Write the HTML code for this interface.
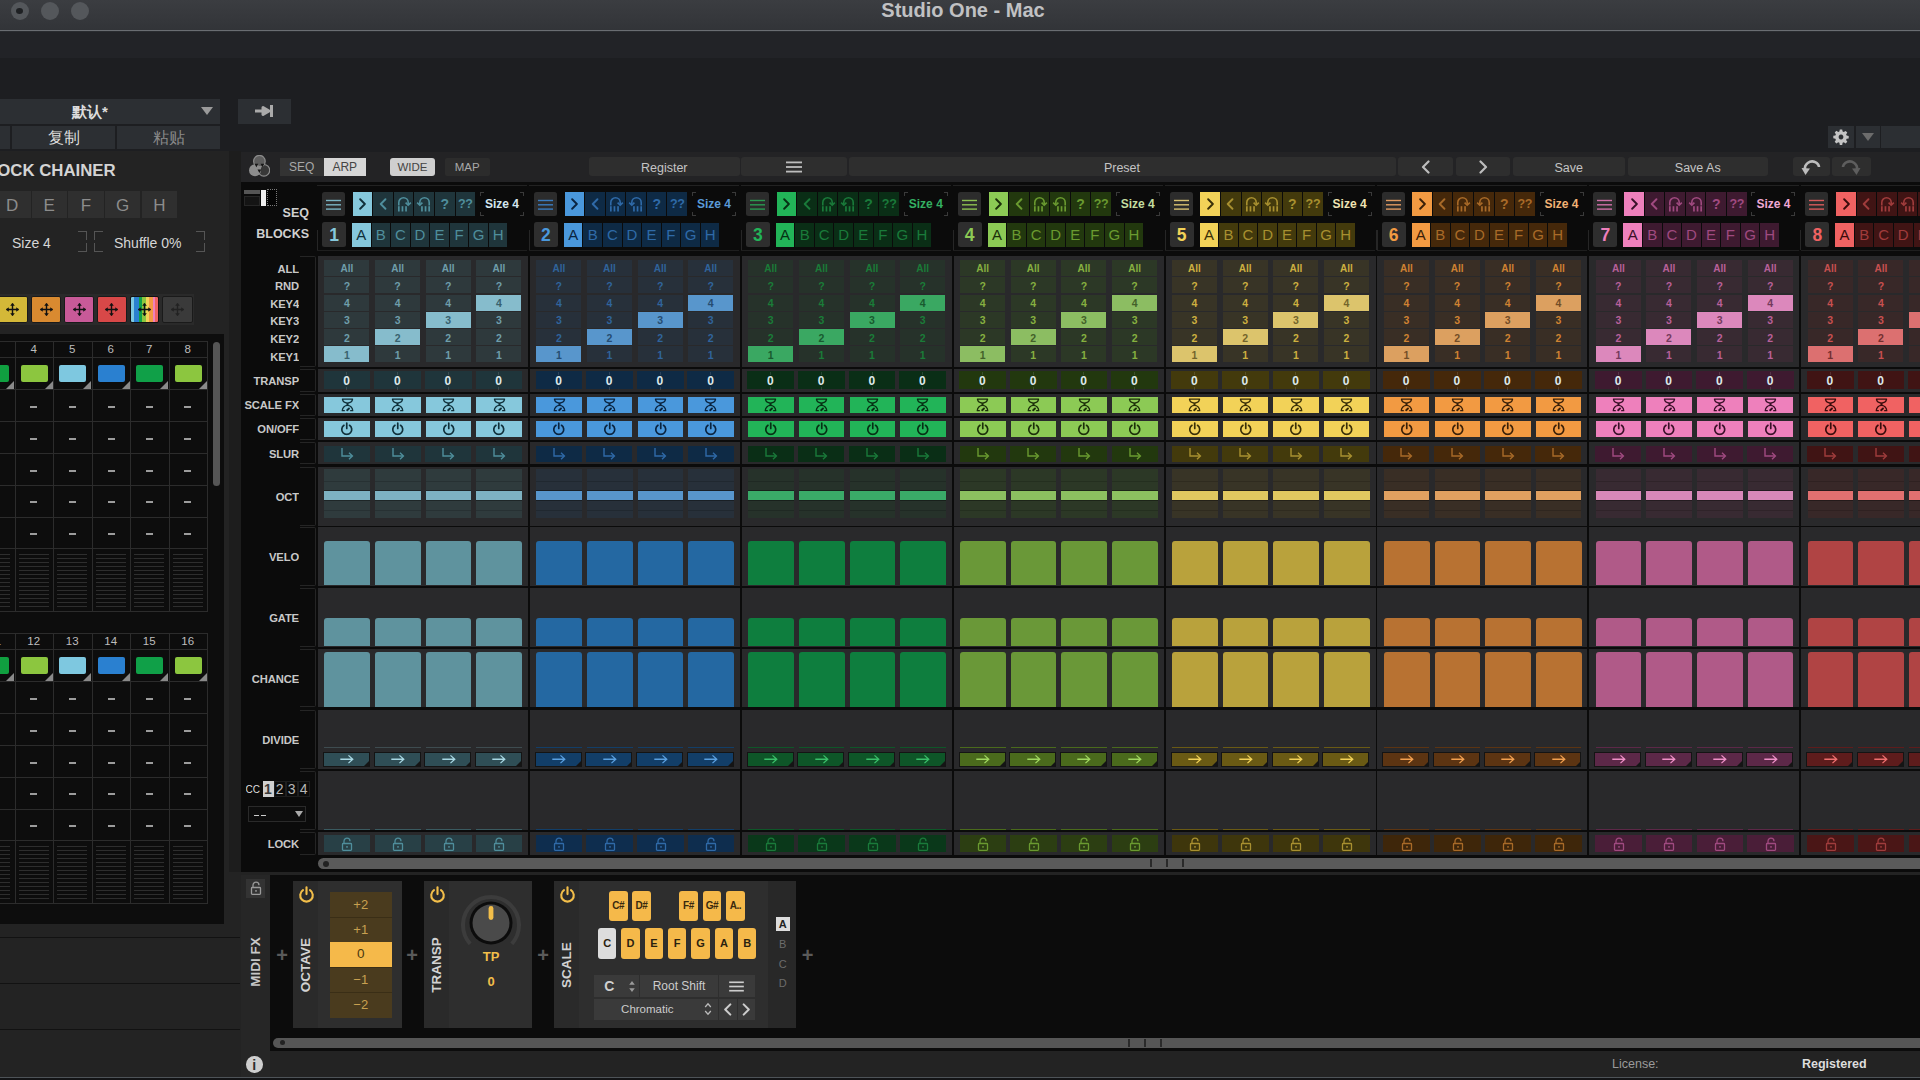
<!DOCTYPE html><html><head><meta charset="utf-8"><style>
*{margin:0;padding:0;box-sizing:border-box}
html,body{width:1920px;height:1080px;overflow:hidden;background:#1d1e21;font-family:"Liberation Sans",sans-serif}
div,svg{position:absolute}
.t{white-space:nowrap;overflow:hidden}
</style></head><body>
<svg width="0" height="0" style="position:absolute">
<defs>
<symbol id="ham2" viewBox="0 0 15 11"><rect x="0" y="0.8" width="15" height="1.4" fill="currentColor"/><rect x="0" y="5.1" width="15" height="1.4" fill="currentColor"/><rect x="0" y="9.4" width="15" height="1.4" fill="currentColor"/></symbol>
<symbol id="ham" viewBox="0 0 16 12"><rect x="0" y="0.5" width="16" height="1.8" fill="currentColor"/><rect x="0" y="5.1" width="16" height="1.8" fill="currentColor"/><rect x="0" y="9.7" width="16" height="1.8" fill="currentColor"/></symbol>
<symbol id="chevR" viewBox="0 0 10 14"><path d="M2.5 1.5 L8 7 L2.5 12.5" fill="none" stroke="currentColor" stroke-width="2.2" stroke-linecap="round" stroke-linejoin="round"/></symbol>
<symbol id="chevL" viewBox="0 0 10 14"><path d="M7.5 1.5 L2 7 L7.5 12.5" fill="none" stroke="currentColor" stroke-width="2.2" stroke-linecap="round" stroke-linejoin="round"/></symbol>
<symbol id="rptR" viewBox="0 0 16 16"><path d="M2.8 9.5 V6.5 A4.7 4.7 0 0 1 12.2 6.5 V8" fill="none" stroke="currentColor" stroke-width="1.6"/><path d="M9.6 6.6 L12.2 9.2 L14.8 6.6" fill="none" stroke="currentColor" stroke-width="1.6"/><rect x="2" y="10.2" width="1.7" height="5.3" fill="currentColor"/><rect x="5.6" y="10.2" width="1.7" height="5.3" fill="currentColor"/><rect x="9.2" y="10.2" width="1.7" height="5.3" fill="currentColor"/></symbol>
<symbol id="rptL" viewBox="0 0 16 16"><path d="M13.2 9.5 V6.5 A4.7 4.7 0 0 0 3.8 6.5 V8" fill="none" stroke="currentColor" stroke-width="1.6"/><path d="M1.2 6.6 L3.8 9.2 L6.4 6.6" fill="none" stroke="currentColor" stroke-width="1.6"/><rect x="5.1" y="10.2" width="1.7" height="5.3" fill="currentColor"/><rect x="8.7" y="10.2" width="1.7" height="5.3" fill="currentColor"/><rect x="12.3" y="10.2" width="1.7" height="5.3" fill="currentColor"/></symbol>
<symbol id="scl" viewBox="0 0 16 15"><path d="M2.6 1.2 H13.4 Q12.8 5.2 8 5.4 Q3.2 5.2 2.6 1.2 Z" fill="none" stroke="currentColor" stroke-width="1.4" stroke-linejoin="round"/><path d="M8 5.2 V7.6" stroke="currentColor" stroke-width="2.2"/><path d="M2.4 13.6 A5.6 5.6 0 0 1 13.6 13.6 M2.4 13.6 H4.6 M11.4 13.6 H13.6" fill="none" stroke="currentColor" stroke-width="1.4" stroke-linecap="round"/><path d="M7.6 13.1 L9.6 11.2" stroke="currentColor" stroke-width="2" stroke-linecap="round"/></symbol>
<symbol id="pwr" viewBox="0 0 16 16"><path d="M4.7 3.9 A5.9 5.9 0 1 0 11.3 3.9" fill="none" stroke="currentColor" stroke-width="2" stroke-linecap="round"/><path d="M8 1.3 V7.6" stroke="currentColor" stroke-width="2" stroke-linecap="round"/></symbol>
<symbol id="slur" viewBox="0 0 16 14"><path d="M3 1 V9 H13" fill="none" stroke="currentColor" stroke-width="1.4"/><path d="M10 5.8 L13.4 9 L10 12.2" fill="none" stroke="currentColor" stroke-width="1.4"/></symbol>
<symbol id="arr" viewBox="0 0 18 12"><path d="M1.5 6 H16 M11 1.5 L16 6 L11 10.5" fill="none" stroke="currentColor" stroke-width="1.5"/></symbol>
<symbol id="lock" viewBox="0 0 12 14"><path d="M3 6.5 V4.2 A3 3 0 0 1 9 4.2" fill="none" stroke="currentColor" stroke-width="1.3"/><rect x="1.5" y="6.5" width="9" height="6.8" rx="0.8" fill="none" stroke="currentColor" stroke-width="1.3"/><rect x="5.2" y="9.1" width="1.6" height="1.6" fill="currentColor"/></symbol>
<symbol id="move" viewBox="0 0 16 16"><path d="M8 1.5 V14.5 M1.5 8 H14.5" stroke="currentColor" stroke-width="1.5"/><path d="M5.5 4 L8 1 L10.5 4 Z M5.5 12 L8 15 L10.5 12 Z M4 5.5 L1 8 L4 10.5 Z M12 5.5 L15 8 L12 10.5 Z" fill="currentColor"/></symbol>
<symbol id="gear" viewBox="0 0 16 16"><path fill="currentColor" fill-rule="evenodd" d="M6.8 0.5h2.4l0.4 2.1 1.2 0.5 1.8-1.2 1.7 1.7-1.2 1.8 0.5 1.2 2.1 0.4v2.4l-2.1 0.4-0.5 1.2 1.2 1.8-1.7 1.7-1.8-1.2-1.2 0.5-0.4 2.1H6.8l-0.4-2.1-1.2-0.5-1.8 1.2-1.7-1.7 1.2-1.8-0.5-1.2L0.3 9.2V6.8l2.1-0.4 0.5-1.2-1.2-1.8 1.7-1.7 1.8 1.2 1.2-0.5zM8 5.6a2.4 2.4 0 1 0 0.01 0z"/></symbol>
<symbol id="undo" viewBox="0 0 20 18"><path d="M4 12 C3 6 9 2 14 4 C17 5 18 8 18 9" fill="none" stroke="currentColor" stroke-width="2.6"/><path d="M0.5 10 L4.5 17 L9 10.5 Z" fill="currentColor"/></symbol>
<symbol id="redo" viewBox="0 0 20 18"><path d="M16 12 C17 6 11 2 6 4 C3 5 2 8 2 9" fill="none" stroke="currentColor" stroke-width="2.6"/><path d="M19.5 10 L15.5 17 L11 10.5 Z" fill="currentColor"/></symbol>
<symbol id="updn" viewBox="0 0 8 14"><path d="M1 5 L4 1 L7 5 Z M1 9 L4 13 L7 9 Z" fill="currentColor"/></symbol>
<symbol id="updn2" viewBox="0 0 8 14"><path d="M1.2 5 L4 1.8 L6.8 5 M1.2 9 L4 12.2 L6.8 9" fill="none" stroke="currentColor" stroke-width="1.3"/></symbol>
<symbol id="logo" viewBox="0 0 22 22"><circle cx="15.9" cy="15.3" r="5.8" fill="#383838" stroke="#8c8c8c" stroke-width="1.2"/><circle cx="11.4" cy="6.2" r="5.8" fill="#5e5e5e" stroke="#8c8c8c" stroke-width="1.2"/><circle cx="7" cy="15.3" r="6" fill="#8c8c8c"/><path d="M9.6 11.3 A5.8 5.8 0 0 1 13.2 11.3 L 12.6 16 L 10 16Z" fill="#8c8c8c"/><path d="M6.5 8.8 L10.3 8.8 L8.4 12.2Z M12.5 8.8 L16.3 8.8 L14.4 12.2Z M9.5 14.5 L13.3 14.5 L11.4 18Z" fill="#161616"/></symbol>
<symbol id="tab" viewBox="0 0 20 14"><path d="M1 7 H9 V3.5 L15 7 L9 10.5 V7" fill="currentColor" stroke="currentColor" stroke-width="3" stroke-linejoin="round"/><rect x="16" y="1" width="3" height="12" fill="currentColor"/></symbol>
</defs>
</svg>
<div style="left:0px;top:0px;width:1920px;height:30px;background:linear-gradient(#3b3d41,#323438);"></div>
<div style="left:0px;top:30px;width:1920px;height:1px;background:#6a6d72;"></div>
<div style="left:0px;top:31px;width:1920px;height:1px;background:#2a2c30;"></div>
<div style="left:0px;top:32px;width:1920px;height:26px;background:#222327;"></div>
<div style="left:0px;top:58px;width:1920px;height:94px;background:#1d1e21;"></div>
<div style="left:10.5px;top:1.5px;width:18px;height:18px;border-radius:50%;background:#54575b"></div>
<div style="left:40.5px;top:1.5px;width:18px;height:18px;border-radius:50%;background:#54575b"></div>
<div style="left:70.5px;top:1.5px;width:18px;height:18px;border-radius:50%;background:#54575b"></div>
<div style="left:16px;top:7.5px;width:7px;height:6px;border-radius:50%;background:#1e2023"></div>
<div class="t" style="left:780px;top:0px;width:366px;height:21px;line-height:21px;color:#c0c1c3;font-size:20px;font-weight:700;text-align:center;">Studio One - Mac</div>
<div style="left:0px;top:99px;width:220px;height:25px;background:#2c2f33;"></div>
<div class="t" style="left:35px;top:99px;width:110px;height:25px;line-height:25px;color:#dcdcdc;font-size:15px;font-weight:700;text-align:center;">默认*</div>
<div style="left:201px;top:107px;width:0;height:0;border-left:6.5px solid transparent;border-right:6.5px solid transparent;border-top:8px solid #9a9a9a"></div>
<div style="left:0px;top:126px;width:10px;height:23px;background:#2c2f33;"></div>
<div style="left:12px;top:126px;width:103px;height:23px;background:#2c2f33;"></div>
<div style="left:117px;top:126px;width:103px;height:23px;background:#2c2f33;"></div>
<div class="t" style="left:12px;top:126px;width:103px;height:23px;line-height:23px;color:#dddddd;font-size:15.5px;font-weight:400;text-align:center;">复制</div>
<div class="t" style="left:117px;top:126px;width:103px;height:23px;line-height:23px;color:#8a8a8a;font-size:15.5px;font-weight:400;text-align:center;">粘贴</div>
<div style="left:238px;top:99px;width:53px;height:25px;background:#2c2f33;"></div>
<svg style="left:254px;top:104px;color:#aaaaaa;" width="20" height="14"><use href="#tab"/></svg>
<div style="left:1828px;top:126px;width:26px;height:22px;background:#2c2f33;"></div>
<svg style="left:1833px;top:129px;color:#c4c4c4;" width="16" height="16"><use href="#gear"/></svg>
<div style="left:1855.5px;top:126px;width:24.5px;height:22px;background:#2c2f33;"></div>
<div style="left:1861.5px;top:133px;width:0;height:0;border-left:6px solid transparent;border-right:6px solid transparent;border-top:8px solid #6c6c6c"></div>
<div style="left:1881px;top:126px;width:39px;height:22px;background:#2c2f33;"></div>
<div style="left:0px;top:151px;width:241px;height:926px;background:#232323;"></div>
<div style="left:229px;top:151px;width:12px;height:721px;background:#1d1d1d;"></div>
<div class="t" style="left:-13px;top:159px;width:200px;height:24px;line-height:24px;color:#d4d4d4;font-size:16.8px;font-weight:700;text-align:left;">LOCK CHAINER</div>
<div style="left:-6px;top:191px;width:36.5px;height:27px;background:#2f2f2f;"></div>
<div class="t" style="left:-6px;top:192px;width:36.5px;height:27px;line-height:27px;color:#8c8c8c;font-size:17px;font-weight:400;text-align:center;">D</div>
<div style="left:31.5px;top:191px;width:35.5px;height:27px;background:#2f2f2f;"></div>
<div class="t" style="left:31.5px;top:192px;width:35.5px;height:27px;line-height:27px;color:#8c8c8c;font-size:17px;font-weight:400;text-align:center;">E</div>
<div style="left:68px;top:191px;width:35.7px;height:27px;background:#2f2f2f;"></div>
<div class="t" style="left:68px;top:192px;width:35.7px;height:27px;line-height:27px;color:#8c8c8c;font-size:17px;font-weight:400;text-align:center;">F</div>
<div style="left:105px;top:191px;width:35px;height:27px;background:#2f2f2f;"></div>
<div class="t" style="left:105px;top:192px;width:35px;height:27px;line-height:27px;color:#8c8c8c;font-size:17px;font-weight:400;text-align:center;">G</div>
<div style="left:141.7px;top:191px;width:35.3px;height:27px;background:#2f2f2f;"></div>
<div class="t" style="left:141.7px;top:192px;width:35.3px;height:27px;line-height:27px;color:#8c8c8c;font-size:17px;font-weight:400;text-align:center;">H</div>
<div class="t" style="left:12px;top:231.5px;width:60px;height:22px;line-height:22px;color:#d6d6d6;font-size:14px;font-weight:400;text-align:left;">Size 4</div>
<div style="left:78px;top:231px;width:9px;height:9px;border-right:1px solid #555555;border-top:1px solid #555555"></div>
<div style="left:78px;top:243px;width:9px;height:9px;border-right:1px solid #555555;border-bottom:1px solid #555555"></div>
<div style="left:94px;top:231px;width:9px;height:9px;border-left:1px solid #555555;border-top:1px solid #555555"></div>
<div style="left:94px;top:243px;width:9px;height:9px;border-left:1px solid #555555;border-bottom:1px solid #555555"></div>
<div class="t" style="left:114px;top:231.5px;width:80px;height:22px;line-height:22px;color:#d6d6d6;font-size:14px;font-weight:400;text-align:left;">Shuffle 0%</div>
<div style="left:196px;top:231px;width:9px;height:9px;border-right:1px solid #555555;border-top:1px solid #555555"></div>
<div style="left:196px;top:243px;width:9px;height:9px;border-right:1px solid #555555;border-bottom:1px solid #555555"></div>
<div style="left:-4px;top:294px;width:198px;height:31px;background:#2a2a2a;"></div>
<div style="left:-3px;top:296px;width:31px;height:27px;border-radius:2px;border:1px solid #1a1a1a;background:#d4b838"></div>
<svg style="left:5px;top:302px;color:#111111;" width="15" height="15"><use href="#move"/></svg>
<div style="left:31px;top:296px;width:30px;height:27px;border-radius:2px;border:1px solid #1a1a1a;background:#d98a30"></div>
<svg style="left:38.5px;top:302px;color:#111111;" width="15" height="15"><use href="#move"/></svg>
<div style="left:64px;top:296px;width:30px;height:27px;border-radius:2px;border:1px solid #1a1a1a;background:#c85a98"></div>
<svg style="left:71.5px;top:302px;color:#111111;" width="15" height="15"><use href="#move"/></svg>
<div style="left:96.6px;top:296px;width:30.4px;height:27px;border-radius:2px;border:1px solid #1a1a1a;background:#d84848"></div>
<svg style="left:104.3px;top:302px;color:#111111;" width="15" height="15"><use href="#move"/></svg>
<div style="left:130px;top:296px;width:29px;height:27px;border-radius:2px;border:1px solid #111;background:linear-gradient(90deg,#7ec8e0 0 12%,#2a80d0 12% 28%,#10a048 28% 42%,#8cc63f 42% 56%,#f2d258 56% 68%,#f29a42 68% 80%,#ee80bc 80% 90%,#f06262 90%)"></div>
<svg style="left:137px;top:302px;color:#111111;" width="15" height="15"><use href="#move"/></svg>
<div style="left:162px;top:296px;width:31px;height:27px;border-radius:2px;border:1px solid #1a1a1a;background:#3a3a3a"></div>
<svg style="left:170px;top:302px;color:#222222;" width="15" height="15"><use href="#move"/></svg>
<div style="left:0px;top:334px;width:224px;height:590px;background:#0d0d0d;"></div>
<div style="left:0px;top:341px;width:207.5px;height:1px;background:#2c2c2c;"></div>
<div style="left:0px;top:357.4px;width:207.5px;height:1px;background:#2c2c2c;"></div>
<div style="left:0px;top:389.4px;width:207.5px;height:1px;background:#2c2c2c;"></div>
<div style="left:0px;top:421.2px;width:207.5px;height:1px;background:#2c2c2c;"></div>
<div style="left:0px;top:453px;width:207.5px;height:1px;background:#2c2c2c;"></div>
<div style="left:0px;top:484.8px;width:207.5px;height:1px;background:#2c2c2c;"></div>
<div style="left:0px;top:516.6px;width:207.5px;height:1px;background:#2c2c2c;"></div>
<div style="left:0px;top:548.4px;width:207.5px;height:1px;background:#2c2c2c;"></div>
<div style="left:0px;top:611.4px;width:207.5px;height:1px;background:#2c2c2c;"></div>
<div style="left:14.5px;top:341px;width:1px;height:270.4px;background:#2c2c2c;"></div>
<div style="left:53px;top:341px;width:1px;height:270.4px;background:#2c2c2c;"></div>
<div style="left:91.5px;top:341px;width:1px;height:270.4px;background:#2c2c2c;"></div>
<div style="left:130px;top:341px;width:1px;height:270.4px;background:#2c2c2c;"></div>
<div style="left:168.5px;top:341px;width:1px;height:270.4px;background:#2c2c2c;"></div>
<div style="left:207px;top:341px;width:1px;height:270.4px;background:#2c2c2c;"></div>
<div class="t" style="left:-24px;top:341px;width:38.5px;height:16.4px;line-height:16.4px;color:#bdbdbd;font-size:11.5px;font-weight:400;text-align:center;">3</div>
<div style="left:-18px;top:365.4px;width:27px;height:16.5px;border-radius:2px;background:#10a040"></div>
<div style="left:6px;top:380.9px;width:0;height:0;border-left:8px solid transparent;border-bottom:8px solid #8a8a8a"></div>
<div style="left:-8px;top:406px;width:6.5px;height:1.5px;background:#9c9c9c;"></div>
<div style="left:-8px;top:438px;width:6.5px;height:1.5px;background:#9c9c9c;"></div>
<div style="left:-8px;top:470px;width:6.5px;height:1.5px;background:#9c9c9c;"></div>
<div style="left:-8px;top:501px;width:6.5px;height:1.5px;background:#9c9c9c;"></div>
<div style="left:-8px;top:533px;width:6.5px;height:1.5px;background:#9c9c9c;"></div>
<div style="left:-20px;top:551.4px;width:30px;height:57px;background:repeating-linear-gradient(#0d0d0d 0 2.6px,#2e2e2e 2.6px 4px)"></div>
<div class="t" style="left:14.5px;top:341px;width:38.5px;height:16.4px;line-height:16.4px;color:#bdbdbd;font-size:11.5px;font-weight:400;text-align:center;">4</div>
<div style="left:20.5px;top:365.4px;width:27px;height:16.5px;border-radius:2px;background:#8cc63f"></div>
<div style="left:44.5px;top:380.9px;width:0;height:0;border-left:8px solid transparent;border-bottom:8px solid #8a8a8a"></div>
<div style="left:30px;top:406px;width:6.5px;height:1.5px;background:#9c9c9c;"></div>
<div style="left:30px;top:438px;width:6.5px;height:1.5px;background:#9c9c9c;"></div>
<div style="left:30px;top:470px;width:6.5px;height:1.5px;background:#9c9c9c;"></div>
<div style="left:30px;top:501px;width:6.5px;height:1.5px;background:#9c9c9c;"></div>
<div style="left:30px;top:533px;width:6.5px;height:1.5px;background:#9c9c9c;"></div>
<div style="left:18.5px;top:551.4px;width:30px;height:57px;background:repeating-linear-gradient(#0d0d0d 0 2.6px,#2e2e2e 2.6px 4px)"></div>
<div class="t" style="left:53px;top:341px;width:38.5px;height:16.4px;line-height:16.4px;color:#bdbdbd;font-size:11.5px;font-weight:400;text-align:center;">5</div>
<div style="left:59px;top:365.4px;width:27px;height:16.5px;border-radius:2px;background:#7ec8e0"></div>
<div style="left:83px;top:380.9px;width:0;height:0;border-left:8px solid transparent;border-bottom:8px solid #8a8a8a"></div>
<div style="left:69px;top:406px;width:6.5px;height:1.5px;background:#9c9c9c;"></div>
<div style="left:69px;top:438px;width:6.5px;height:1.5px;background:#9c9c9c;"></div>
<div style="left:69px;top:470px;width:6.5px;height:1.5px;background:#9c9c9c;"></div>
<div style="left:69px;top:501px;width:6.5px;height:1.5px;background:#9c9c9c;"></div>
<div style="left:69px;top:533px;width:6.5px;height:1.5px;background:#9c9c9c;"></div>
<div style="left:57px;top:551.4px;width:30px;height:57px;background:repeating-linear-gradient(#0d0d0d 0 2.6px,#2e2e2e 2.6px 4px)"></div>
<div class="t" style="left:91.5px;top:341px;width:38.5px;height:16.4px;line-height:16.4px;color:#bdbdbd;font-size:11.5px;font-weight:400;text-align:center;">6</div>
<div style="left:97.5px;top:365.4px;width:27px;height:16.5px;border-radius:2px;background:#2a80d0"></div>
<div style="left:121.5px;top:380.9px;width:0;height:0;border-left:8px solid transparent;border-bottom:8px solid #8a8a8a"></div>
<div style="left:108px;top:406px;width:6.5px;height:1.5px;background:#9c9c9c;"></div>
<div style="left:108px;top:438px;width:6.5px;height:1.5px;background:#9c9c9c;"></div>
<div style="left:108px;top:470px;width:6.5px;height:1.5px;background:#9c9c9c;"></div>
<div style="left:108px;top:501px;width:6.5px;height:1.5px;background:#9c9c9c;"></div>
<div style="left:108px;top:533px;width:6.5px;height:1.5px;background:#9c9c9c;"></div>
<div style="left:95.5px;top:551.4px;width:30px;height:57px;background:repeating-linear-gradient(#0d0d0d 0 2.6px,#2e2e2e 2.6px 4px)"></div>
<div class="t" style="left:130px;top:341px;width:38.5px;height:16.4px;line-height:16.4px;color:#bdbdbd;font-size:11.5px;font-weight:400;text-align:center;">7</div>
<div style="left:136px;top:365.4px;width:27px;height:16.5px;border-radius:2px;background:#10a048"></div>
<div style="left:160px;top:380.9px;width:0;height:0;border-left:8px solid transparent;border-bottom:8px solid #8a8a8a"></div>
<div style="left:146px;top:406px;width:6.5px;height:1.5px;background:#9c9c9c;"></div>
<div style="left:146px;top:438px;width:6.5px;height:1.5px;background:#9c9c9c;"></div>
<div style="left:146px;top:470px;width:6.5px;height:1.5px;background:#9c9c9c;"></div>
<div style="left:146px;top:501px;width:6.5px;height:1.5px;background:#9c9c9c;"></div>
<div style="left:146px;top:533px;width:6.5px;height:1.5px;background:#9c9c9c;"></div>
<div style="left:134px;top:551.4px;width:30px;height:57px;background:repeating-linear-gradient(#0d0d0d 0 2.6px,#2e2e2e 2.6px 4px)"></div>
<div class="t" style="left:168.5px;top:341px;width:38.5px;height:16.4px;line-height:16.4px;color:#bdbdbd;font-size:11.5px;font-weight:400;text-align:center;">8</div>
<div style="left:174.5px;top:365.4px;width:27px;height:16.5px;border-radius:2px;background:#8cc63f"></div>
<div style="left:198.5px;top:380.9px;width:0;height:0;border-left:8px solid transparent;border-bottom:8px solid #8a8a8a"></div>
<div style="left:184px;top:406px;width:6.5px;height:1.5px;background:#9c9c9c;"></div>
<div style="left:184px;top:438px;width:6.5px;height:1.5px;background:#9c9c9c;"></div>
<div style="left:184px;top:470px;width:6.5px;height:1.5px;background:#9c9c9c;"></div>
<div style="left:184px;top:501px;width:6.5px;height:1.5px;background:#9c9c9c;"></div>
<div style="left:184px;top:533px;width:6.5px;height:1.5px;background:#9c9c9c;"></div>
<div style="left:172.5px;top:551.4px;width:30px;height:57px;background:repeating-linear-gradient(#0d0d0d 0 2.6px,#2e2e2e 2.6px 4px)"></div>
<div style="left:0px;top:633px;width:207.5px;height:1px;background:#2c2c2c;"></div>
<div style="left:0px;top:649.4px;width:207.5px;height:1px;background:#2c2c2c;"></div>
<div style="left:0px;top:681.4px;width:207.5px;height:1px;background:#2c2c2c;"></div>
<div style="left:0px;top:713.2px;width:207.5px;height:1px;background:#2c2c2c;"></div>
<div style="left:0px;top:745px;width:207.5px;height:1px;background:#2c2c2c;"></div>
<div style="left:0px;top:776.8px;width:207.5px;height:1px;background:#2c2c2c;"></div>
<div style="left:0px;top:808.6px;width:207.5px;height:1px;background:#2c2c2c;"></div>
<div style="left:0px;top:840.4px;width:207.5px;height:1px;background:#2c2c2c;"></div>
<div style="left:0px;top:903.4px;width:207.5px;height:1px;background:#2c2c2c;"></div>
<div style="left:14.5px;top:633px;width:1px;height:270.4px;background:#2c2c2c;"></div>
<div style="left:53px;top:633px;width:1px;height:270.4px;background:#2c2c2c;"></div>
<div style="left:91.5px;top:633px;width:1px;height:270.4px;background:#2c2c2c;"></div>
<div style="left:130px;top:633px;width:1px;height:270.4px;background:#2c2c2c;"></div>
<div style="left:168.5px;top:633px;width:1px;height:270.4px;background:#2c2c2c;"></div>
<div style="left:207px;top:633px;width:1px;height:270.4px;background:#2c2c2c;"></div>
<div class="t" style="left:-24px;top:633px;width:38.5px;height:16.4px;line-height:16.4px;color:#bdbdbd;font-size:11.5px;font-weight:400;text-align:center;">11</div>
<div style="left:-18px;top:657.4px;width:27px;height:16.5px;border-radius:2px;background:#10a040"></div>
<div style="left:6px;top:672.9px;width:0;height:0;border-left:8px solid transparent;border-bottom:8px solid #8a8a8a"></div>
<div style="left:-8px;top:698px;width:6.5px;height:1.5px;background:#9c9c9c;"></div>
<div style="left:-8px;top:730px;width:6.5px;height:1.5px;background:#9c9c9c;"></div>
<div style="left:-8px;top:762px;width:6.5px;height:1.5px;background:#9c9c9c;"></div>
<div style="left:-8px;top:793px;width:6.5px;height:1.5px;background:#9c9c9c;"></div>
<div style="left:-8px;top:825px;width:6.5px;height:1.5px;background:#9c9c9c;"></div>
<div style="left:-20px;top:843.4px;width:30px;height:57px;background:repeating-linear-gradient(#0d0d0d 0 2.6px,#2e2e2e 2.6px 4px)"></div>
<div class="t" style="left:14.5px;top:633px;width:38.5px;height:16.4px;line-height:16.4px;color:#bdbdbd;font-size:11.5px;font-weight:400;text-align:center;">12</div>
<div style="left:20.5px;top:657.4px;width:27px;height:16.5px;border-radius:2px;background:#8cc63f"></div>
<div style="left:44.5px;top:672.9px;width:0;height:0;border-left:8px solid transparent;border-bottom:8px solid #8a8a8a"></div>
<div style="left:30px;top:698px;width:6.5px;height:1.5px;background:#9c9c9c;"></div>
<div style="left:30px;top:730px;width:6.5px;height:1.5px;background:#9c9c9c;"></div>
<div style="left:30px;top:762px;width:6.5px;height:1.5px;background:#9c9c9c;"></div>
<div style="left:30px;top:793px;width:6.5px;height:1.5px;background:#9c9c9c;"></div>
<div style="left:30px;top:825px;width:6.5px;height:1.5px;background:#9c9c9c;"></div>
<div style="left:18.5px;top:843.4px;width:30px;height:57px;background:repeating-linear-gradient(#0d0d0d 0 2.6px,#2e2e2e 2.6px 4px)"></div>
<div class="t" style="left:53px;top:633px;width:38.5px;height:16.4px;line-height:16.4px;color:#bdbdbd;font-size:11.5px;font-weight:400;text-align:center;">13</div>
<div style="left:59px;top:657.4px;width:27px;height:16.5px;border-radius:2px;background:#7ec8e0"></div>
<div style="left:83px;top:672.9px;width:0;height:0;border-left:8px solid transparent;border-bottom:8px solid #8a8a8a"></div>
<div style="left:69px;top:698px;width:6.5px;height:1.5px;background:#9c9c9c;"></div>
<div style="left:69px;top:730px;width:6.5px;height:1.5px;background:#9c9c9c;"></div>
<div style="left:69px;top:762px;width:6.5px;height:1.5px;background:#9c9c9c;"></div>
<div style="left:69px;top:793px;width:6.5px;height:1.5px;background:#9c9c9c;"></div>
<div style="left:69px;top:825px;width:6.5px;height:1.5px;background:#9c9c9c;"></div>
<div style="left:57px;top:843.4px;width:30px;height:57px;background:repeating-linear-gradient(#0d0d0d 0 2.6px,#2e2e2e 2.6px 4px)"></div>
<div class="t" style="left:91.5px;top:633px;width:38.5px;height:16.4px;line-height:16.4px;color:#bdbdbd;font-size:11.5px;font-weight:400;text-align:center;">14</div>
<div style="left:97.5px;top:657.4px;width:27px;height:16.5px;border-radius:2px;background:#2a80d0"></div>
<div style="left:121.5px;top:672.9px;width:0;height:0;border-left:8px solid transparent;border-bottom:8px solid #8a8a8a"></div>
<div style="left:108px;top:698px;width:6.5px;height:1.5px;background:#9c9c9c;"></div>
<div style="left:108px;top:730px;width:6.5px;height:1.5px;background:#9c9c9c;"></div>
<div style="left:108px;top:762px;width:6.5px;height:1.5px;background:#9c9c9c;"></div>
<div style="left:108px;top:793px;width:6.5px;height:1.5px;background:#9c9c9c;"></div>
<div style="left:108px;top:825px;width:6.5px;height:1.5px;background:#9c9c9c;"></div>
<div style="left:95.5px;top:843.4px;width:30px;height:57px;background:repeating-linear-gradient(#0d0d0d 0 2.6px,#2e2e2e 2.6px 4px)"></div>
<div class="t" style="left:130px;top:633px;width:38.5px;height:16.4px;line-height:16.4px;color:#bdbdbd;font-size:11.5px;font-weight:400;text-align:center;">15</div>
<div style="left:136px;top:657.4px;width:27px;height:16.5px;border-radius:2px;background:#10a048"></div>
<div style="left:160px;top:672.9px;width:0;height:0;border-left:8px solid transparent;border-bottom:8px solid #8a8a8a"></div>
<div style="left:146px;top:698px;width:6.5px;height:1.5px;background:#9c9c9c;"></div>
<div style="left:146px;top:730px;width:6.5px;height:1.5px;background:#9c9c9c;"></div>
<div style="left:146px;top:762px;width:6.5px;height:1.5px;background:#9c9c9c;"></div>
<div style="left:146px;top:793px;width:6.5px;height:1.5px;background:#9c9c9c;"></div>
<div style="left:146px;top:825px;width:6.5px;height:1.5px;background:#9c9c9c;"></div>
<div style="left:134px;top:843.4px;width:30px;height:57px;background:repeating-linear-gradient(#0d0d0d 0 2.6px,#2e2e2e 2.6px 4px)"></div>
<div class="t" style="left:168.5px;top:633px;width:38.5px;height:16.4px;line-height:16.4px;color:#bdbdbd;font-size:11.5px;font-weight:400;text-align:center;">16</div>
<div style="left:174.5px;top:657.4px;width:27px;height:16.5px;border-radius:2px;background:#8cc63f"></div>
<div style="left:198.5px;top:672.9px;width:0;height:0;border-left:8px solid transparent;border-bottom:8px solid #8a8a8a"></div>
<div style="left:184px;top:698px;width:6.5px;height:1.5px;background:#9c9c9c;"></div>
<div style="left:184px;top:730px;width:6.5px;height:1.5px;background:#9c9c9c;"></div>
<div style="left:184px;top:762px;width:6.5px;height:1.5px;background:#9c9c9c;"></div>
<div style="left:184px;top:793px;width:6.5px;height:1.5px;background:#9c9c9c;"></div>
<div style="left:184px;top:825px;width:6.5px;height:1.5px;background:#9c9c9c;"></div>
<div style="left:172.5px;top:843.4px;width:30px;height:57px;background:repeating-linear-gradient(#0d0d0d 0 2.6px,#2e2e2e 2.6px 4px)"></div>
<div style="left:213px;top:342px;width:7px;height:144px;border-radius:4px;background:#555555"></div>
<div style="left:0px;top:937px;width:240px;height:1px;background:#121212;"></div>
<div style="left:0px;top:983px;width:240px;height:1px;background:#121212;"></div>
<div style="left:0px;top:1029px;width:240px;height:1px;background:#121212;"></div>
<div style="left:241px;top:152px;width:1679px;height:30px;background:#232325;"></div>
<svg style="left:248px;top:155px;color:#8a8a8a;" width="22" height="22"><use href="#logo"/></svg>
<div style="left:280px;top:157.5px;width:43.5px;height:18px;background:#333333;"></div>
<div class="t" style="left:280px;top:157.5px;width:43.5px;height:18px;line-height:18px;color:#a8a8a8;font-size:12px;font-weight:400;text-align:center;">SEQ</div>
<div style="left:323.5px;top:157.5px;width:42.5px;height:18px;background:#d6d6d6;"></div>
<div class="t" style="left:323.5px;top:157.5px;width:42.5px;height:18px;line-height:18px;color:#444444;font-size:12px;font-weight:400;text-align:center;">ARP</div>
<div style="left:390px;top:157.5px;width:45px;height:18px;border-radius:3px;background:#cfcfcf"></div>
<div class="t" style="left:390px;top:157.5px;width:45px;height:18px;line-height:18px;color:#444444;font-size:11.5px;font-weight:400;text-align:center;">WIDE</div>
<div style="left:445px;top:157.5px;width:44.5px;height:18px;border-radius:2px;background:#2c2c2c"></div>
<div class="t" style="left:445px;top:157.5px;width:44.5px;height:18px;line-height:18px;color:#a8a8a8;font-size:11.5px;font-weight:400;text-align:center;">MAP</div>
<div style="left:589px;top:157px;width:150.5px;height:19px;border-radius:3px;background:#2e2e2e"></div>
<div class="t" style="left:589px;top:158.5px;width:150.5px;height:19px;line-height:19px;color:#c4c4c4;font-size:12.5px;font-weight:400;text-align:center;">Register</div>
<div style="left:741px;top:157px;width:105.5px;height:19px;border-radius:3px;background:#2e2e2e"></div>
<svg style="left:786px;top:161px;color:#bdbdbd;" width="16" height="12"><use href="#ham"/></svg>
<div style="left:848.5px;top:157px;width:547.0px;height:19px;border-radius:3px;background:#2e2e2e"></div>
<div class="t" style="left:848.5px;top:158.5px;width:547px;height:19px;line-height:19px;color:#c4c4c4;font-size:12.5px;font-weight:400;text-align:center;">Preset</div>
<div style="left:1398px;top:157px;width:55px;height:19px;border-radius:3px;background:#2e2e2e"></div>
<svg style="left:1421px;top:160px;color:#bdbdbd;" width="10" height="14"><use href="#chevL"/></svg>
<div style="left:1455.5px;top:157px;width:54.5px;height:19px;border-radius:3px;background:#2e2e2e"></div>
<svg style="left:1478px;top:160px;color:#bdbdbd;" width="10" height="14"><use href="#chevR"/></svg>
<div style="left:1513px;top:157px;width:111.5px;height:19px;border-radius:3px;background:#2e2e2e"></div>
<div class="t" style="left:1513px;top:158.5px;width:111.5px;height:19px;line-height:19px;color:#c4c4c4;font-size:12.5px;font-weight:400;text-align:center;">Save</div>
<div style="left:1628px;top:157px;width:139.5px;height:19px;border-radius:3px;background:#2e2e2e"></div>
<div class="t" style="left:1628px;top:158.5px;width:139.5px;height:19px;line-height:19px;color:#c4c4c4;font-size:12.5px;font-weight:400;text-align:center;">Save As</div>
<div style="left:1793px;top:157px;width:37px;height:19px;border-radius:3px;background:#2e2e2e"></div>
<svg style="left:1801px;top:158px;color:#bcbcbc;" width="20" height="18"><use href="#undo"/></svg>
<div style="left:1832px;top:157px;width:38.5px;height:19px;border-radius:3px;background:#2e2e2e"></div>
<svg style="left:1841px;top:158px;color:#5e5e5e;" width="20" height="18"><use href="#redo"/></svg>
<div style="left:241px;top:182px;width:1679px;height:690px;background:#0b0b0b;"></div>
<div style="left:244px;top:189.7px;width:15.5px;height:4.3px;background:#555555;"></div>
<div style="left:244px;top:195.5px;width:15.5px;height:10px;border:1px solid #262626;background:#141414"></div>
<div style="left:261px;top:189.5px;width:5px;height:16px;background:#f0f0f0;"></div>
<div style="left:267px;top:189px;width:10px;height:16.5px;border:1.5px dotted #7a7a7a;background:#050505"></div>
<div class="t" style="left:240px;top:203px;width:69px;height:20px;line-height:20px;color:#d0d0d0;font-size:12.5px;font-weight:700;text-align:right;">SEQ</div>
<div class="t" style="left:240px;top:224px;width:69px;height:20px;line-height:20px;color:#d0d0d0;font-size:12.5px;font-weight:700;text-align:right;">BLOCKS</div>
<div style="left:300px;top:255.5px;width:15.5px;height:111.5px;border:1px solid #252525;border-left:none;border-radius:0 2px 2px 0"></div>
<div style="left:300px;top:369px;width:15.5px;height:23px;border:1px solid #252525;border-left:none;border-radius:0 2px 2px 0"></div>
<div style="left:300px;top:393.5px;width:15.5px;height:22.5px;border:1px solid #252525;border-left:none;border-radius:0 2px 2px 0"></div>
<div style="left:300px;top:418px;width:15.5px;height:22px;border:1px solid #252525;border-left:none;border-radius:0 2px 2px 0"></div>
<div style="left:300px;top:442px;width:15.5px;height:22px;border:1px solid #252525;border-left:none;border-radius:0 2px 2px 0"></div>
<div style="left:300px;top:466.7px;width:15.5px;height:58.900000000000034px;border:1px solid #252525;border-left:none;border-radius:0 2px 2px 0"></div>
<div style="left:300px;top:527.2px;width:15.5px;height:58.799999999999955px;border:1px solid #252525;border-left:none;border-radius:0 2px 2px 0"></div>
<div style="left:300px;top:588.3px;width:15.5px;height:58.40000000000009px;border:1px solid #252525;border-left:none;border-radius:0 2px 2px 0"></div>
<div style="left:300px;top:649.4px;width:15.5px;height:58.10000000000002px;border:1px solid #252525;border-left:none;border-radius:0 2px 2px 0"></div>
<div style="left:300px;top:710px;width:15.5px;height:59px;border:1px solid #252525;border-left:none;border-radius:0 2px 2px 0"></div>
<div style="left:300px;top:771px;width:15.5px;height:59px;border:1px solid #252525;border-left:none;border-radius:0 2px 2px 0"></div>
<div style="left:300px;top:832px;width:15.5px;height:23px;border:1px solid #252525;border-left:none;border-radius:0 2px 2px 0"></div>
<div class="t" style="left:219px;top:259.5px;width:80px;height:18px;line-height:18px;color:#c8c8c8;font-size:11.2px;font-weight:700;text-align:right;letter-spacing:-0.1px">ALL</div>
<div class="t" style="left:219px;top:277px;width:80px;height:18px;line-height:18px;color:#c8c8c8;font-size:11.2px;font-weight:700;text-align:right;letter-spacing:-0.1px">RND</div>
<div class="t" style="left:219px;top:294.5px;width:80px;height:18px;line-height:18px;color:#c8c8c8;font-size:11.2px;font-weight:700;text-align:right;letter-spacing:-0.1px">KEY4</div>
<div class="t" style="left:219px;top:312px;width:80px;height:18px;line-height:18px;color:#c8c8c8;font-size:11.2px;font-weight:700;text-align:right;letter-spacing:-0.1px">KEY3</div>
<div class="t" style="left:219px;top:330px;width:80px;height:18px;line-height:18px;color:#c8c8c8;font-size:11.2px;font-weight:700;text-align:right;letter-spacing:-0.1px">KEY2</div>
<div class="t" style="left:219px;top:348px;width:80px;height:18px;line-height:18px;color:#c8c8c8;font-size:11.2px;font-weight:700;text-align:right;letter-spacing:-0.1px">KEY1</div>
<div class="t" style="left:219px;top:371.5px;width:80px;height:18px;line-height:18px;color:#c8c8c8;font-size:11.2px;font-weight:700;text-align:right;letter-spacing:-0.1px">TRANSP</div>
<div class="t" style="left:219px;top:395.5px;width:80px;height:18px;line-height:18px;color:#c8c8c8;font-size:11.2px;font-weight:700;text-align:right;letter-spacing:-0.1px">SCALE FX</div>
<div class="t" style="left:219px;top:420px;width:80px;height:18px;line-height:18px;color:#c8c8c8;font-size:11.2px;font-weight:700;text-align:right;letter-spacing:-0.1px">ON/OFF</div>
<div class="t" style="left:219px;top:444.5px;width:80px;height:18px;line-height:18px;color:#c8c8c8;font-size:11.2px;font-weight:700;text-align:right;letter-spacing:-0.1px">SLUR</div>
<div class="t" style="left:219px;top:487.5px;width:80px;height:18px;line-height:18px;color:#c8c8c8;font-size:11.2px;font-weight:700;text-align:right;letter-spacing:-0.1px">OCT</div>
<div class="t" style="left:219px;top:548px;width:80px;height:18px;line-height:18px;color:#c8c8c8;font-size:11.2px;font-weight:700;text-align:right;letter-spacing:-0.1px">VELO</div>
<div class="t" style="left:219px;top:609px;width:80px;height:18px;line-height:18px;color:#c8c8c8;font-size:11.2px;font-weight:700;text-align:right;letter-spacing:-0.1px">GATE</div>
<div class="t" style="left:219px;top:670px;width:80px;height:18px;line-height:18px;color:#c8c8c8;font-size:11.2px;font-weight:700;text-align:right;letter-spacing:-0.1px">CHANCE</div>
<div class="t" style="left:219px;top:731px;width:80px;height:18px;line-height:18px;color:#c8c8c8;font-size:11.2px;font-weight:700;text-align:right;letter-spacing:-0.1px">DIVIDE</div>
<div class="t" style="left:219px;top:834.5px;width:80px;height:18px;line-height:18px;color:#c8c8c8;font-size:11.2px;font-weight:700;text-align:right;letter-spacing:-0.1px">LOCK</div>
<div class="t" style="left:245.5px;top:781.5px;width:16px;height:16px;line-height:16px;color:#dedede;font-size:10px;font-weight:400;text-align:left;">CC</div>
<div style="left:262.5px;top:781px;width:11px;height:16px;background:#d0d0d0;"></div>
<div class="t" style="left:262.5px;top:781px;width:11px;height:16px;line-height:16px;color:#3a3a3a;font-size:14px;font-weight:700;text-align:center;">1</div>
<div style="left:274px;top:781px;width:11.5px;height:16px;border:1px solid #1e1e1e"></div>
<div class="t" style="left:274px;top:781px;width:11.5px;height:16px;line-height:16px;color:#b8b8b8;font-size:14px;font-weight:400;text-align:center;">2</div>
<div style="left:286px;top:781px;width:11.5px;height:16px;border:1px solid #1e1e1e"></div>
<div class="t" style="left:286px;top:781px;width:11.5px;height:16px;line-height:16px;color:#b8b8b8;font-size:14px;font-weight:400;text-align:center;">3</div>
<div style="left:298px;top:781px;width:11.5px;height:16px;border:1px solid #1e1e1e"></div>
<div class="t" style="left:298px;top:781px;width:11.5px;height:16px;line-height:16px;color:#b8b8b8;font-size:14px;font-weight:400;text-align:center;">4</div>
<div style="left:248px;top:806px;width:58px;height:16px;border:1px solid #2a2a2a;background:#0d0d0d"></div>
<div style="left:254px;top:814.5px;width:5px;height:1.8px;background:#cccccc;"></div>
<div style="left:261px;top:814.5px;width:5px;height:1.8px;background:#cccccc;"></div>
<div style="left:295px;top:811px;width:0;height:0;border-left:4px solid transparent;border-right:4px solid transparent;border-top:6px solid #aaaaaa"></div>
<div style="left:317.4px;top:184.5px;width:210px;height:1px;background:#222222;"></div>
<div style="left:317.4px;top:250px;width:210px;height:1px;background:#1e1e1e;"></div>
<div style="left:316.9px;top:230px;width:1.2px;height:20px;background:#262626;"></div>
<div style="left:322.0px;top:192px;width:23px;height:23.6px;border-radius:2.5px;background:#2c2c2c"></div>
<svg style="left:326px;top:198.5px;color:#7ab4c4;" width="15" height="11"><use href="#ham2"/></svg>
<div style="left:352.8px;top:192px;width:19.6px;height:23.7px;background:#86c8dc;"></div>
<svg style="left:358.3px;top:198px;color:#10303a;" width="8.6" height="12"><use href="#chevR"/></svg>
<div style="left:373.35px;top:192px;width:19.6px;height:23.7px;background:#1f353b;"></div>
<svg style="left:378.85px;top:198px;color:#4f8e9c;" width="8.6" height="12"><use href="#chevL"/></svg>
<div style="left:393.9px;top:192px;width:19.6px;height:23.7px;background:#1f353b;"></div>
<svg style="left:395.9px;top:196px;color:#4f8e9c;" width="16" height="16"><use href="#rptR"/></svg>
<div style="left:414.45px;top:192px;width:19.6px;height:23.7px;background:#1f353b;"></div>
<svg style="left:416.45px;top:196px;color:#4f8e9c;" width="16" height="16"><use href="#rptL"/></svg>
<div style="left:435px;top:192px;width:19.6px;height:23.7px;background:#1f353b;"></div>
<div class="t" style="left:435px;top:192.5px;width:19.6px;height:23px;line-height:23px;color:#4f8e9c;font-size:14px;font-weight:700;text-align:center;">?</div>
<div style="left:455.55px;top:192px;width:19.6px;height:23.7px;background:#1f353b;"></div>
<div class="t" style="left:455.55px;top:192.5px;width:19.6px;height:23px;line-height:23px;color:#4f8e9c;font-size:12.5px;font-weight:700;text-align:center;letter-spacing:-0.3px">??</div>
<div style="left:480.0px;top:192px;width:4px;height:4px;border-left:1.5px solid #3a3a3a;border-top:1.5px solid #3a3a3a"></div>
<div style="left:480.0px;top:212px;width:4px;height:4px;border-left:1.5px solid #3a3a3a;border-bottom:1.5px solid #3a3a3a"></div>
<div style="left:520.0px;top:192px;width:4px;height:4px;border-right:1.5px solid #3a3a3a;border-top:1.5px solid #3a3a3a"></div>
<div style="left:520.0px;top:212px;width:4px;height:4px;border-right:1.5px solid #3a3a3a;border-bottom:1.5px solid #3a3a3a"></div>
<div class="t" style="left:480px;top:192px;width:44px;height:24px;line-height:24px;color:#d4e6ee;font-size:12px;font-weight:700;text-align:center;">Size 4</div>
<div style="left:322.0px;top:222px;width:24px;height:24.7px;border-radius:2.5px;background:#2e2e2e"></div>
<div class="t" style="left:322px;top:223px;width:24px;height:24.7px;line-height:24.7px;color:#86c8dc;font-size:17.5px;font-weight:700;text-align:center;">1</div>
<div style="left:352px;top:222.5px;width:18.6px;height:24.2px;background:#86c8dc;"></div>
<div class="t" style="left:352px;top:222.5px;width:18.6px;height:24.2px;line-height:24.2px;color:#10303a;font-size:15px;font-weight:400;text-align:center;">A</div>
<div style="left:371.55px;top:222.5px;width:18.6px;height:24.2px;background:#1f353b;"></div>
<div class="t" style="left:371.55px;top:222.5px;width:18.6px;height:24.2px;line-height:24.2px;color:#4f8e9c;font-size:15px;font-weight:400;text-align:center;">B</div>
<div style="left:391.1px;top:222.5px;width:18.6px;height:24.2px;background:#1f353b;"></div>
<div class="t" style="left:391.1px;top:222.5px;width:18.6px;height:24.2px;line-height:24.2px;color:#4f8e9c;font-size:15px;font-weight:400;text-align:center;">C</div>
<div style="left:410.65px;top:222.5px;width:18.6px;height:24.2px;background:#1f353b;"></div>
<div class="t" style="left:410.65px;top:222.5px;width:18.6px;height:24.2px;line-height:24.2px;color:#4f8e9c;font-size:15px;font-weight:400;text-align:center;">D</div>
<div style="left:430.2px;top:222.5px;width:18.6px;height:24.2px;background:#1f353b;"></div>
<div class="t" style="left:430.2px;top:222.5px;width:18.6px;height:24.2px;line-height:24.2px;color:#4f8e9c;font-size:15px;font-weight:400;text-align:center;">E</div>
<div style="left:449.75px;top:222.5px;width:18.6px;height:24.2px;background:#1f353b;"></div>
<div class="t" style="left:449.75px;top:222.5px;width:18.6px;height:24.2px;line-height:24.2px;color:#4f8e9c;font-size:15px;font-weight:400;text-align:center;">F</div>
<div style="left:469.3px;top:222.5px;width:18.6px;height:24.2px;background:#1f353b;"></div>
<div class="t" style="left:469.3px;top:222.5px;width:18.6px;height:24.2px;line-height:24.2px;color:#4f8e9c;font-size:15px;font-weight:400;text-align:center;">G</div>
<div style="left:488.85px;top:222.5px;width:18.6px;height:24.2px;background:#1f353b;"></div>
<div class="t" style="left:488.85px;top:222.5px;width:18.6px;height:24.2px;line-height:24.2px;color:#4f8e9c;font-size:15px;font-weight:400;text-align:center;">H</div>
<div style="left:317.9px;top:255.5px;width:210px;height:111.5px;background:#29292b;"></div>
<div style="left:317.9px;top:369px;width:210px;height:23px;background:#29292b;"></div>
<div style="left:317.9px;top:393.5px;width:210px;height:22.5px;background:#29292b;"></div>
<div style="left:317.9px;top:418px;width:210px;height:22px;background:#29292b;"></div>
<div style="left:317.9px;top:442px;width:210px;height:22px;background:#29292b;"></div>
<div style="left:317.9px;top:466.7px;width:210px;height:58.9px;background:#29292b;"></div>
<div style="left:317.9px;top:527.2px;width:210px;height:58.8px;background:#29292b;"></div>
<div style="left:317.9px;top:588.3px;width:210px;height:58.4px;background:#29292b;"></div>
<div style="left:317.9px;top:649.4px;width:210px;height:58.1px;background:#29292b;"></div>
<div style="left:317.9px;top:710px;width:210px;height:59px;background:#29292b;"></div>
<div style="left:317.9px;top:771px;width:210px;height:59px;background:#29292b;"></div>
<div style="left:317.9px;top:832px;width:210px;height:23px;background:#29292b;"></div>
<div style="left:324.4px;top:260.3px;width:45px;height:16px;background:#2e393c;"></div>
<div class="t" style="left:324.4px;top:260.8px;width:45px;height:16px;line-height:16px;color:#6f9eab;font-size:10px;font-weight:700;text-align:center;">All</div>
<div style="left:324.4px;top:277.4px;width:45px;height:16px;background:#2e393c;"></div>
<div class="t" style="left:324.4px;top:277.9px;width:45px;height:16px;line-height:16px;color:#6f9eab;font-size:10.5px;font-weight:700;text-align:center;">?</div>
<div style="left:324.4px;top:294.6px;width:45px;height:16px;background:#2e393c;"></div>
<div class="t" style="left:324.4px;top:295.1px;width:45px;height:16px;line-height:16px;color:#6f9eab;font-size:10.5px;font-weight:700;text-align:center;">4</div>
<div style="left:324.4px;top:311.8px;width:45px;height:16px;background:#2e393c;"></div>
<div class="t" style="left:324.4px;top:312.3px;width:45px;height:16px;line-height:16px;color:#6f9eab;font-size:10.5px;font-weight:700;text-align:center;">3</div>
<div style="left:324.4px;top:329px;width:45px;height:16px;background:#2e393c;"></div>
<div class="t" style="left:324.4px;top:329.5px;width:45px;height:16px;line-height:16px;color:#6f9eab;font-size:10.5px;font-weight:700;text-align:center;">2</div>
<div style="left:324.4px;top:346.2px;width:45px;height:16px;background:#86bccc;"></div>
<div class="t" style="left:324.4px;top:346.7px;width:45px;height:16px;line-height:16px;color:#39616d;font-size:10.5px;font-weight:700;text-align:center;">1</div>
<div style="left:323.6px;top:371.3px;width:46.8px;height:18.2px;background:#1f353b;"></div>
<div style="left:346.4px;top:372px;width:1px;height:3px;background:rgba(255,255,255,0.12);"></div>
<div style="left:346.4px;top:386.5px;width:1px;height:3px;background:rgba(255,255,255,0.12);"></div>
<div class="t" style="left:323.4px;top:372.8px;width:46.5px;height:17.5px;line-height:17.5px;color:#dde8ea;font-size:12px;font-weight:700;text-align:center;">0</div>
<div style="left:324.4px;top:397px;width:45.5px;height:16px;background:#86c8dc;"></div>
<svg style="left:339.6px;top:397.6px;color:#10303a;" width="15" height="14"><use href="#scl"/></svg>
<div style="left:324.4px;top:421px;width:45.5px;height:16px;background:#86c8dc;"></div>
<svg style="left:340.4px;top:422px;color:#10303a;" width="13.5" height="13.5"><use href="#pwr"/></svg>
<div style="left:323.9px;top:445.5px;width:46px;height:16.2px;background:#1f353b;"></div>
<svg style="left:338.9px;top:447px;color:#4f8e9c;" width="16" height="14"><use href="#slur"/></svg>
<div style="left:324.4px;top:469.4px;width:45.6px;height:49px;background:#2f3b3d;"></div>
<div style="left:324.4px;top:480.5px;width:45.6px;height:1px;background:rgba(0,0,0,0.16);"></div>
<div style="left:324.4px;top:509.5px;width:45.6px;height:1px;background:rgba(0,0,0,0.16);"></div>
<div style="left:324.4px;top:490.3px;width:45.6px;height:11px;background:rgba(0,0,0,0.35);"></div>
<div style="left:324.4px;top:491.3px;width:45.6px;height:8.7px;background:#7db2c2;"></div>
<div style="left:324.4px;top:541px;width:45.7px;height:44.2px;border-radius:3px 3px 0 0;background:#5f939e"></div>
<div style="left:324.4px;top:617.8px;width:45.7px;height:28.2px;border-radius:3px 3px 0 0;background:#5f939e"></div>
<div style="left:324.4px;top:651.7px;width:45.7px;height:55.5px;border-radius:3px 3px 0 0;background:#5f939e"></div>
<div style="left:324.4px;top:747px;width:45.6px;height:1.2px;background:#3e4c50;"></div>
<div style="left:322.9px;top:751.7px;width:47px;height:15.5px;background:#2f4e56;border:1px solid #141414"></div>
<div style="left:364.4px;top:761.2px;width:0;height:0;border-left:5px solid transparent;border-bottom:5px solid #141414"></div>
<svg style="left:339.4px;top:754.2px;color:#a8d8e4;" width="15.5" height="10.5"><use href="#arr"/></svg>
<div style="left:324.4px;top:828.5px;width:45.6px;height:1.5px;background:#3a5a60;"></div>
<div style="left:323.9px;top:835px;width:46.5px;height:17px;background:#284046;"></div>
<svg style="left:341.4px;top:837px;color:#4f8e9c;" width="12" height="14"><use href="#lock"/></svg>
<div style="left:375.05px;top:260.3px;width:45px;height:16px;background:#2e393c;"></div>
<div class="t" style="left:375.05px;top:260.8px;width:45px;height:16px;line-height:16px;color:#6f9eab;font-size:10px;font-weight:700;text-align:center;">All</div>
<div style="left:375.05px;top:277.4px;width:45px;height:16px;background:#2e393c;"></div>
<div class="t" style="left:375.05px;top:277.9px;width:45px;height:16px;line-height:16px;color:#6f9eab;font-size:10.5px;font-weight:700;text-align:center;">?</div>
<div style="left:375.05px;top:294.6px;width:45px;height:16px;background:#2e393c;"></div>
<div class="t" style="left:375.05px;top:295.1px;width:45px;height:16px;line-height:16px;color:#6f9eab;font-size:10.5px;font-weight:700;text-align:center;">4</div>
<div style="left:375.05px;top:311.8px;width:45px;height:16px;background:#2e393c;"></div>
<div class="t" style="left:375.05px;top:312.3px;width:45px;height:16px;line-height:16px;color:#6f9eab;font-size:10.5px;font-weight:700;text-align:center;">3</div>
<div style="left:375.05px;top:329px;width:45px;height:16px;background:#86bccc;"></div>
<div class="t" style="left:375.05px;top:329.5px;width:45px;height:16px;line-height:16px;color:#39616d;font-size:10.5px;font-weight:700;text-align:center;">2</div>
<div style="left:375.05px;top:346.2px;width:45px;height:16px;background:#2e393c;"></div>
<div class="t" style="left:375.05px;top:346.7px;width:45px;height:16px;line-height:16px;color:#6f9eab;font-size:10.5px;font-weight:700;text-align:center;">1</div>
<div style="left:374.25px;top:371.3px;width:46.8px;height:18.2px;background:#1f353b;"></div>
<div style="left:397.05px;top:372px;width:1px;height:3px;background:rgba(255,255,255,0.12);"></div>
<div style="left:397.05px;top:386.5px;width:1px;height:3px;background:rgba(255,255,255,0.12);"></div>
<div class="t" style="left:374.05px;top:372.8px;width:46.5px;height:17.5px;line-height:17.5px;color:#dde8ea;font-size:12px;font-weight:700;text-align:center;">0</div>
<div style="left:375.05px;top:397px;width:45.5px;height:16px;background:#86c8dc;"></div>
<svg style="left:390.25px;top:397.6px;color:#10303a;" width="15" height="14"><use href="#scl"/></svg>
<div style="left:375.05px;top:421px;width:45.5px;height:16px;background:#86c8dc;"></div>
<svg style="left:391.05px;top:422px;color:#10303a;" width="13.5" height="13.5"><use href="#pwr"/></svg>
<div style="left:374.55px;top:445.5px;width:46px;height:16.2px;background:#1f353b;"></div>
<svg style="left:389.55px;top:447px;color:#4f8e9c;" width="16" height="14"><use href="#slur"/></svg>
<div style="left:375.05px;top:469.4px;width:45.6px;height:49px;background:#2f3b3d;"></div>
<div style="left:375.05px;top:480.5px;width:45.6px;height:1px;background:rgba(0,0,0,0.16);"></div>
<div style="left:375.05px;top:509.5px;width:45.6px;height:1px;background:rgba(0,0,0,0.16);"></div>
<div style="left:375.05px;top:490.3px;width:45.6px;height:11px;background:rgba(0,0,0,0.35);"></div>
<div style="left:375.05px;top:491.3px;width:45.6px;height:8.7px;background:#7db2c2;"></div>
<div style="left:375.05px;top:541px;width:45.7px;height:44.2px;border-radius:3px 3px 0 0;background:#5f939e"></div>
<div style="left:375.05px;top:617.8px;width:45.7px;height:28.2px;border-radius:3px 3px 0 0;background:#5f939e"></div>
<div style="left:375.05px;top:651.7px;width:45.7px;height:55.5px;border-radius:3px 3px 0 0;background:#5f939e"></div>
<div style="left:375.05px;top:747px;width:45.6px;height:1.2px;background:#3e4c50;"></div>
<div style="left:373.55px;top:751.7px;width:47px;height:15.5px;background:#2f4e56;border:1px solid #141414"></div>
<div style="left:415.05px;top:761.2px;width:0;height:0;border-left:5px solid transparent;border-bottom:5px solid #141414"></div>
<svg style="left:390.05px;top:754.2px;color:#a8d8e4;" width="15.5" height="10.5"><use href="#arr"/></svg>
<div style="left:375.05px;top:828.5px;width:45.6px;height:1.5px;background:#3a5a60;"></div>
<div style="left:374.55px;top:835px;width:46.5px;height:17px;background:#284046;"></div>
<svg style="left:392.05px;top:837px;color:#4f8e9c;" width="12" height="14"><use href="#lock"/></svg>
<div style="left:425.7px;top:260.3px;width:45px;height:16px;background:#2e393c;"></div>
<div class="t" style="left:425.7px;top:260.8px;width:45px;height:16px;line-height:16px;color:#6f9eab;font-size:10px;font-weight:700;text-align:center;">All</div>
<div style="left:425.7px;top:277.4px;width:45px;height:16px;background:#2e393c;"></div>
<div class="t" style="left:425.7px;top:277.9px;width:45px;height:16px;line-height:16px;color:#6f9eab;font-size:10.5px;font-weight:700;text-align:center;">?</div>
<div style="left:425.7px;top:294.6px;width:45px;height:16px;background:#2e393c;"></div>
<div class="t" style="left:425.7px;top:295.1px;width:45px;height:16px;line-height:16px;color:#6f9eab;font-size:10.5px;font-weight:700;text-align:center;">4</div>
<div style="left:425.7px;top:311.8px;width:45px;height:16px;background:#86bccc;"></div>
<div class="t" style="left:425.7px;top:312.3px;width:45px;height:16px;line-height:16px;color:#39616d;font-size:10.5px;font-weight:700;text-align:center;">3</div>
<div style="left:425.7px;top:329px;width:45px;height:16px;background:#2e393c;"></div>
<div class="t" style="left:425.7px;top:329.5px;width:45px;height:16px;line-height:16px;color:#6f9eab;font-size:10.5px;font-weight:700;text-align:center;">2</div>
<div style="left:425.7px;top:346.2px;width:45px;height:16px;background:#2e393c;"></div>
<div class="t" style="left:425.7px;top:346.7px;width:45px;height:16px;line-height:16px;color:#6f9eab;font-size:10.5px;font-weight:700;text-align:center;">1</div>
<div style="left:424.9px;top:371.3px;width:46.8px;height:18.2px;background:#1f353b;"></div>
<div style="left:447.7px;top:372px;width:1px;height:3px;background:rgba(255,255,255,0.12);"></div>
<div style="left:447.7px;top:386.5px;width:1px;height:3px;background:rgba(255,255,255,0.12);"></div>
<div class="t" style="left:424.7px;top:372.8px;width:46.5px;height:17.5px;line-height:17.5px;color:#dde8ea;font-size:12px;font-weight:700;text-align:center;">0</div>
<div style="left:425.7px;top:397px;width:45.5px;height:16px;background:#86c8dc;"></div>
<svg style="left:440.9px;top:397.6px;color:#10303a;" width="15" height="14"><use href="#scl"/></svg>
<div style="left:425.7px;top:421px;width:45.5px;height:16px;background:#86c8dc;"></div>
<svg style="left:441.7px;top:422px;color:#10303a;" width="13.5" height="13.5"><use href="#pwr"/></svg>
<div style="left:425.2px;top:445.5px;width:46px;height:16.2px;background:#1f353b;"></div>
<svg style="left:440.2px;top:447px;color:#4f8e9c;" width="16" height="14"><use href="#slur"/></svg>
<div style="left:425.7px;top:469.4px;width:45.6px;height:49px;background:#2f3b3d;"></div>
<div style="left:425.7px;top:480.5px;width:45.6px;height:1px;background:rgba(0,0,0,0.16);"></div>
<div style="left:425.7px;top:509.5px;width:45.6px;height:1px;background:rgba(0,0,0,0.16);"></div>
<div style="left:425.7px;top:490.3px;width:45.6px;height:11px;background:rgba(0,0,0,0.35);"></div>
<div style="left:425.7px;top:491.3px;width:45.6px;height:8.7px;background:#7db2c2;"></div>
<div style="left:425.7px;top:541px;width:45.7px;height:44.2px;border-radius:3px 3px 0 0;background:#5f939e"></div>
<div style="left:425.7px;top:617.8px;width:45.7px;height:28.2px;border-radius:3px 3px 0 0;background:#5f939e"></div>
<div style="left:425.7px;top:651.7px;width:45.7px;height:55.5px;border-radius:3px 3px 0 0;background:#5f939e"></div>
<div style="left:425.7px;top:747px;width:45.6px;height:1.2px;background:#3e4c50;"></div>
<div style="left:424.2px;top:751.7px;width:47px;height:15.5px;background:#2f4e56;border:1px solid #141414"></div>
<div style="left:465.7px;top:761.2px;width:0;height:0;border-left:5px solid transparent;border-bottom:5px solid #141414"></div>
<svg style="left:440.7px;top:754.2px;color:#a8d8e4;" width="15.5" height="10.5"><use href="#arr"/></svg>
<div style="left:425.7px;top:828.5px;width:45.6px;height:1.5px;background:#3a5a60;"></div>
<div style="left:425.2px;top:835px;width:46.5px;height:17px;background:#284046;"></div>
<svg style="left:442.7px;top:837px;color:#4f8e9c;" width="12" height="14"><use href="#lock"/></svg>
<div style="left:476.35px;top:260.3px;width:45px;height:16px;background:#2e393c;"></div>
<div class="t" style="left:476.35px;top:260.8px;width:45px;height:16px;line-height:16px;color:#6f9eab;font-size:10px;font-weight:700;text-align:center;">All</div>
<div style="left:476.35px;top:277.4px;width:45px;height:16px;background:#2e393c;"></div>
<div class="t" style="left:476.35px;top:277.9px;width:45px;height:16px;line-height:16px;color:#6f9eab;font-size:10.5px;font-weight:700;text-align:center;">?</div>
<div style="left:476.35px;top:294.6px;width:45px;height:16px;background:#86bccc;"></div>
<div class="t" style="left:476.35px;top:295.1px;width:45px;height:16px;line-height:16px;color:#39616d;font-size:10.5px;font-weight:700;text-align:center;">4</div>
<div style="left:476.35px;top:311.8px;width:45px;height:16px;background:#2e393c;"></div>
<div class="t" style="left:476.35px;top:312.3px;width:45px;height:16px;line-height:16px;color:#6f9eab;font-size:10.5px;font-weight:700;text-align:center;">3</div>
<div style="left:476.35px;top:329px;width:45px;height:16px;background:#2e393c;"></div>
<div class="t" style="left:476.35px;top:329.5px;width:45px;height:16px;line-height:16px;color:#6f9eab;font-size:10.5px;font-weight:700;text-align:center;">2</div>
<div style="left:476.35px;top:346.2px;width:45px;height:16px;background:#2e393c;"></div>
<div class="t" style="left:476.35px;top:346.7px;width:45px;height:16px;line-height:16px;color:#6f9eab;font-size:10.5px;font-weight:700;text-align:center;">1</div>
<div style="left:475.55px;top:371.3px;width:46.8px;height:18.2px;background:#1f353b;"></div>
<div style="left:498.35px;top:372px;width:1px;height:3px;background:rgba(255,255,255,0.12);"></div>
<div style="left:498.35px;top:386.5px;width:1px;height:3px;background:rgba(255,255,255,0.12);"></div>
<div class="t" style="left:475.35px;top:372.8px;width:46.5px;height:17.5px;line-height:17.5px;color:#dde8ea;font-size:12px;font-weight:700;text-align:center;">0</div>
<div style="left:476.35px;top:397px;width:45.5px;height:16px;background:#86c8dc;"></div>
<svg style="left:491.55px;top:397.6px;color:#10303a;" width="15" height="14"><use href="#scl"/></svg>
<div style="left:476.35px;top:421px;width:45.5px;height:16px;background:#86c8dc;"></div>
<svg style="left:492.35px;top:422px;color:#10303a;" width="13.5" height="13.5"><use href="#pwr"/></svg>
<div style="left:475.85px;top:445.5px;width:46px;height:16.2px;background:#1f353b;"></div>
<svg style="left:490.85px;top:447px;color:#4f8e9c;" width="16" height="14"><use href="#slur"/></svg>
<div style="left:476.35px;top:469.4px;width:45.6px;height:49px;background:#2f3b3d;"></div>
<div style="left:476.35px;top:480.5px;width:45.6px;height:1px;background:rgba(0,0,0,0.16);"></div>
<div style="left:476.35px;top:509.5px;width:45.6px;height:1px;background:rgba(0,0,0,0.16);"></div>
<div style="left:476.35px;top:490.3px;width:45.6px;height:11px;background:rgba(0,0,0,0.35);"></div>
<div style="left:476.35px;top:491.3px;width:45.6px;height:8.7px;background:#7db2c2;"></div>
<div style="left:476.35px;top:541px;width:45.7px;height:44.2px;border-radius:3px 3px 0 0;background:#5f939e"></div>
<div style="left:476.35px;top:617.8px;width:45.7px;height:28.2px;border-radius:3px 3px 0 0;background:#5f939e"></div>
<div style="left:476.35px;top:651.7px;width:45.7px;height:55.5px;border-radius:3px 3px 0 0;background:#5f939e"></div>
<div style="left:476.35px;top:747px;width:45.6px;height:1.2px;background:#3e4c50;"></div>
<div style="left:474.85px;top:751.7px;width:47px;height:15.5px;background:#2f4e56;border:1px solid #141414"></div>
<div style="left:516.35px;top:761.2px;width:0;height:0;border-left:5px solid transparent;border-bottom:5px solid #141414"></div>
<svg style="left:491.35px;top:754.2px;color:#a8d8e4;" width="15.5" height="10.5"><use href="#arr"/></svg>
<div style="left:476.35px;top:828.5px;width:45.6px;height:1.5px;background:#3a5a60;"></div>
<div style="left:475.85px;top:835px;width:46.5px;height:17px;background:#284046;"></div>
<svg style="left:493.35px;top:837px;color:#4f8e9c;" width="12" height="14"><use href="#lock"/></svg>
<div style="left:529.3px;top:184.5px;width:210px;height:1px;background:#222222;"></div>
<div style="left:529.3px;top:250px;width:210px;height:1px;background:#1e1e1e;"></div>
<div style="left:528.8px;top:230px;width:1.2px;height:20px;background:#262626;"></div>
<div style="left:533.9px;top:192px;width:23px;height:23.6px;border-radius:2.5px;background:#2c2c2c"></div>
<svg style="left:537.9px;top:198.5px;color:#3a7cc0;" width="15" height="11"><use href="#ham2"/></svg>
<div style="left:564.7px;top:192px;width:19.6px;height:23.7px;background:#4a98dc;"></div>
<svg style="left:570.2px;top:198px;color:#0a2440;" width="8.6" height="12"><use href="#chevR"/></svg>
<div style="left:585.25px;top:192px;width:19.6px;height:23.7px;background:#0e2a45;"></div>
<svg style="left:590.75px;top:198px;color:#2f6aa8;" width="8.6" height="12"><use href="#chevL"/></svg>
<div style="left:605.8px;top:192px;width:19.6px;height:23.7px;background:#0e2a45;"></div>
<svg style="left:607.8px;top:196px;color:#2f6aa8;" width="16" height="16"><use href="#rptR"/></svg>
<div style="left:626.35px;top:192px;width:19.6px;height:23.7px;background:#0e2a45;"></div>
<svg style="left:628.35px;top:196px;color:#2f6aa8;" width="16" height="16"><use href="#rptL"/></svg>
<div style="left:646.9px;top:192px;width:19.6px;height:23.7px;background:#0e2a45;"></div>
<div class="t" style="left:646.9px;top:192.5px;width:19.6px;height:23px;line-height:23px;color:#2f6aa8;font-size:14px;font-weight:700;text-align:center;">?</div>
<div style="left:667.45px;top:192px;width:19.6px;height:23.7px;background:#0e2a45;"></div>
<div class="t" style="left:667.45px;top:192.5px;width:19.6px;height:23px;line-height:23px;color:#2f6aa8;font-size:12.5px;font-weight:700;text-align:center;letter-spacing:-0.3px">??</div>
<div style="left:691.9px;top:192px;width:4px;height:4px;border-left:1.5px solid #3a3a3a;border-top:1.5px solid #3a3a3a"></div>
<div style="left:691.9px;top:212px;width:4px;height:4px;border-left:1.5px solid #3a3a3a;border-bottom:1.5px solid #3a3a3a"></div>
<div style="left:731.9px;top:192px;width:4px;height:4px;border-right:1.5px solid #3a3a3a;border-top:1.5px solid #3a3a3a"></div>
<div style="left:731.9px;top:212px;width:4px;height:4px;border-right:1.5px solid #3a3a3a;border-bottom:1.5px solid #3a3a3a"></div>
<div class="t" style="left:691.9px;top:192px;width:44px;height:24px;line-height:24px;color:#5a9ad8;font-size:12px;font-weight:700;text-align:center;">Size 4</div>
<div style="left:533.9px;top:222px;width:24px;height:24.7px;border-radius:2.5px;background:#2e2e2e"></div>
<div class="t" style="left:533.9px;top:223px;width:24px;height:24.7px;line-height:24.7px;color:#4a98dc;font-size:17.5px;font-weight:700;text-align:center;">2</div>
<div style="left:563.9px;top:222.5px;width:18.6px;height:24.2px;background:#4a98dc;"></div>
<div class="t" style="left:563.9px;top:222.5px;width:18.6px;height:24.2px;line-height:24.2px;color:#0a2440;font-size:15px;font-weight:400;text-align:center;">A</div>
<div style="left:583.45px;top:222.5px;width:18.6px;height:24.2px;background:#0e2a45;"></div>
<div class="t" style="left:583.45px;top:222.5px;width:18.6px;height:24.2px;line-height:24.2px;color:#2f6aa8;font-size:15px;font-weight:400;text-align:center;">B</div>
<div style="left:603px;top:222.5px;width:18.6px;height:24.2px;background:#0e2a45;"></div>
<div class="t" style="left:603px;top:222.5px;width:18.6px;height:24.2px;line-height:24.2px;color:#2f6aa8;font-size:15px;font-weight:400;text-align:center;">C</div>
<div style="left:622.55px;top:222.5px;width:18.6px;height:24.2px;background:#0e2a45;"></div>
<div class="t" style="left:622.55px;top:222.5px;width:18.6px;height:24.2px;line-height:24.2px;color:#2f6aa8;font-size:15px;font-weight:400;text-align:center;">D</div>
<div style="left:642.1px;top:222.5px;width:18.6px;height:24.2px;background:#0e2a45;"></div>
<div class="t" style="left:642.1px;top:222.5px;width:18.6px;height:24.2px;line-height:24.2px;color:#2f6aa8;font-size:15px;font-weight:400;text-align:center;">E</div>
<div style="left:661.65px;top:222.5px;width:18.6px;height:24.2px;background:#0e2a45;"></div>
<div class="t" style="left:661.65px;top:222.5px;width:18.6px;height:24.2px;line-height:24.2px;color:#2f6aa8;font-size:15px;font-weight:400;text-align:center;">F</div>
<div style="left:681.2px;top:222.5px;width:18.6px;height:24.2px;background:#0e2a45;"></div>
<div class="t" style="left:681.2px;top:222.5px;width:18.6px;height:24.2px;line-height:24.2px;color:#2f6aa8;font-size:15px;font-weight:400;text-align:center;">G</div>
<div style="left:700.75px;top:222.5px;width:18.6px;height:24.2px;background:#0e2a45;"></div>
<div class="t" style="left:700.75px;top:222.5px;width:18.6px;height:24.2px;line-height:24.2px;color:#2f6aa8;font-size:15px;font-weight:400;text-align:center;">H</div>
<div style="left:529.8px;top:255.5px;width:210px;height:111.5px;background:#29292b;"></div>
<div style="left:529.8px;top:369px;width:210px;height:23px;background:#29292b;"></div>
<div style="left:529.8px;top:393.5px;width:210px;height:22.5px;background:#29292b;"></div>
<div style="left:529.8px;top:418px;width:210px;height:22px;background:#29292b;"></div>
<div style="left:529.8px;top:442px;width:210px;height:22px;background:#29292b;"></div>
<div style="left:529.8px;top:466.7px;width:210px;height:58.9px;background:#29292b;"></div>
<div style="left:529.8px;top:527.2px;width:210px;height:58.8px;background:#29292b;"></div>
<div style="left:529.8px;top:588.3px;width:210px;height:58.4px;background:#29292b;"></div>
<div style="left:529.8px;top:649.4px;width:210px;height:58.1px;background:#29292b;"></div>
<div style="left:529.8px;top:710px;width:210px;height:59px;background:#29292b;"></div>
<div style="left:529.8px;top:771px;width:210px;height:59px;background:#29292b;"></div>
<div style="left:529.8px;top:832px;width:210px;height:23px;background:#29292b;"></div>
<div style="left:536.3px;top:260.3px;width:45px;height:16px;background:#27303a;"></div>
<div class="t" style="left:536.3px;top:260.8px;width:45px;height:16px;line-height:16px;color:#30649c;font-size:10px;font-weight:700;text-align:center;">All</div>
<div style="left:536.3px;top:277.4px;width:45px;height:16px;background:#27303a;"></div>
<div class="t" style="left:536.3px;top:277.9px;width:45px;height:16px;line-height:16px;color:#30649c;font-size:10.5px;font-weight:700;text-align:center;">?</div>
<div style="left:536.3px;top:294.6px;width:45px;height:16px;background:#27303a;"></div>
<div class="t" style="left:536.3px;top:295.1px;width:45px;height:16px;line-height:16px;color:#30649c;font-size:10.5px;font-weight:700;text-align:center;">4</div>
<div style="left:536.3px;top:311.8px;width:45px;height:16px;background:#27303a;"></div>
<div class="t" style="left:536.3px;top:312.3px;width:45px;height:16px;line-height:16px;color:#30649c;font-size:10.5px;font-weight:700;text-align:center;">3</div>
<div style="left:536.3px;top:329px;width:45px;height:16px;background:#27303a;"></div>
<div class="t" style="left:536.3px;top:329.5px;width:45px;height:16px;line-height:16px;color:#30649c;font-size:10.5px;font-weight:700;text-align:center;">2</div>
<div style="left:536.3px;top:346.2px;width:45px;height:16px;background:#5896cc;"></div>
<div class="t" style="left:536.3px;top:346.7px;width:45px;height:16px;line-height:16px;color:#254c71;font-size:10.5px;font-weight:700;text-align:center;">1</div>
<div style="left:535.5px;top:371.3px;width:46.8px;height:18.2px;background:#0e2a45;"></div>
<div style="left:558.3px;top:372px;width:1px;height:3px;background:rgba(255,255,255,0.12);"></div>
<div style="left:558.3px;top:386.5px;width:1px;height:3px;background:rgba(255,255,255,0.12);"></div>
<div class="t" style="left:535.3px;top:372.8px;width:46.5px;height:17.5px;line-height:17.5px;color:#dde8ea;font-size:12px;font-weight:700;text-align:center;">0</div>
<div style="left:536.3px;top:397px;width:45.5px;height:16px;background:#4a98dc;"></div>
<svg style="left:551.5px;top:397.6px;color:#0a2440;" width="15" height="14"><use href="#scl"/></svg>
<div style="left:536.3px;top:421px;width:45.5px;height:16px;background:#4a98dc;"></div>
<svg style="left:552.3px;top:422px;color:#0a2440;" width="13.5" height="13.5"><use href="#pwr"/></svg>
<div style="left:535.8px;top:445.5px;width:46px;height:16.2px;background:#0e2a45;"></div>
<svg style="left:550.8px;top:447px;color:#2f6aa8;" width="16" height="14"><use href="#slur"/></svg>
<div style="left:536.3px;top:469.4px;width:45.6px;height:49px;background:#27303a;"></div>
<div style="left:536.3px;top:480.5px;width:45.6px;height:1px;background:rgba(0,0,0,0.16);"></div>
<div style="left:536.3px;top:509.5px;width:45.6px;height:1px;background:rgba(0,0,0,0.16);"></div>
<div style="left:536.3px;top:490.3px;width:45.6px;height:11px;background:rgba(0,0,0,0.35);"></div>
<div style="left:536.3px;top:491.3px;width:45.6px;height:8.7px;background:#5896cc;"></div>
<div style="left:536.3px;top:541px;width:45.7px;height:44.2px;border-radius:3px 3px 0 0;background:#2468a2"></div>
<div style="left:536.3px;top:617.8px;width:45.7px;height:28.2px;border-radius:3px 3px 0 0;background:#2468a2"></div>
<div style="left:536.3px;top:651.7px;width:45.7px;height:55.5px;border-radius:3px 3px 0 0;background:#2468a2"></div>
<div style="left:536.3px;top:747px;width:45.6px;height:1.2px;background:#123e68;"></div>
<div style="left:534.8px;top:751.7px;width:47px;height:15.5px;background:#123e68;border:1px solid #141414"></div>
<div style="left:576.3px;top:761.2px;width:0;height:0;border-left:5px solid transparent;border-bottom:5px solid #141414"></div>
<svg style="left:551.3px;top:754.2px;color:#5aa0e0;" width="15.5" height="10.5"><use href="#arr"/></svg>
<div style="left:536.3px;top:828.5px;width:45.6px;height:1.5px;background:#123e68;"></div>
<div style="left:535.8px;top:835px;width:46.5px;height:17px;background:#0e2d4e;"></div>
<svg style="left:553.3px;top:837px;color:#2f6aa8;" width="12" height="14"><use href="#lock"/></svg>
<div style="left:586.95px;top:260.3px;width:45px;height:16px;background:#27303a;"></div>
<div class="t" style="left:586.95px;top:260.8px;width:45px;height:16px;line-height:16px;color:#30649c;font-size:10px;font-weight:700;text-align:center;">All</div>
<div style="left:586.95px;top:277.4px;width:45px;height:16px;background:#27303a;"></div>
<div class="t" style="left:586.95px;top:277.9px;width:45px;height:16px;line-height:16px;color:#30649c;font-size:10.5px;font-weight:700;text-align:center;">?</div>
<div style="left:586.95px;top:294.6px;width:45px;height:16px;background:#27303a;"></div>
<div class="t" style="left:586.95px;top:295.1px;width:45px;height:16px;line-height:16px;color:#30649c;font-size:10.5px;font-weight:700;text-align:center;">4</div>
<div style="left:586.95px;top:311.8px;width:45px;height:16px;background:#27303a;"></div>
<div class="t" style="left:586.95px;top:312.3px;width:45px;height:16px;line-height:16px;color:#30649c;font-size:10.5px;font-weight:700;text-align:center;">3</div>
<div style="left:586.95px;top:329px;width:45px;height:16px;background:#5896cc;"></div>
<div class="t" style="left:586.95px;top:329.5px;width:45px;height:16px;line-height:16px;color:#254c71;font-size:10.5px;font-weight:700;text-align:center;">2</div>
<div style="left:586.95px;top:346.2px;width:45px;height:16px;background:#27303a;"></div>
<div class="t" style="left:586.95px;top:346.7px;width:45px;height:16px;line-height:16px;color:#30649c;font-size:10.5px;font-weight:700;text-align:center;">1</div>
<div style="left:586.15px;top:371.3px;width:46.8px;height:18.2px;background:#0e2a45;"></div>
<div style="left:608.95px;top:372px;width:1px;height:3px;background:rgba(255,255,255,0.12);"></div>
<div style="left:608.95px;top:386.5px;width:1px;height:3px;background:rgba(255,255,255,0.12);"></div>
<div class="t" style="left:585.95px;top:372.8px;width:46.5px;height:17.5px;line-height:17.5px;color:#dde8ea;font-size:12px;font-weight:700;text-align:center;">0</div>
<div style="left:586.95px;top:397px;width:45.5px;height:16px;background:#4a98dc;"></div>
<svg style="left:602.15px;top:397.6px;color:#0a2440;" width="15" height="14"><use href="#scl"/></svg>
<div style="left:586.95px;top:421px;width:45.5px;height:16px;background:#4a98dc;"></div>
<svg style="left:602.95px;top:422px;color:#0a2440;" width="13.5" height="13.5"><use href="#pwr"/></svg>
<div style="left:586.45px;top:445.5px;width:46px;height:16.2px;background:#0e2a45;"></div>
<svg style="left:601.45px;top:447px;color:#2f6aa8;" width="16" height="14"><use href="#slur"/></svg>
<div style="left:586.95px;top:469.4px;width:45.6px;height:49px;background:#27303a;"></div>
<div style="left:586.95px;top:480.5px;width:45.6px;height:1px;background:rgba(0,0,0,0.16);"></div>
<div style="left:586.95px;top:509.5px;width:45.6px;height:1px;background:rgba(0,0,0,0.16);"></div>
<div style="left:586.95px;top:490.3px;width:45.6px;height:11px;background:rgba(0,0,0,0.35);"></div>
<div style="left:586.95px;top:491.3px;width:45.6px;height:8.7px;background:#5896cc;"></div>
<div style="left:586.95px;top:541px;width:45.7px;height:44.2px;border-radius:3px 3px 0 0;background:#2468a2"></div>
<div style="left:586.95px;top:617.8px;width:45.7px;height:28.2px;border-radius:3px 3px 0 0;background:#2468a2"></div>
<div style="left:586.95px;top:651.7px;width:45.7px;height:55.5px;border-radius:3px 3px 0 0;background:#2468a2"></div>
<div style="left:586.95px;top:747px;width:45.6px;height:1.2px;background:#123e68;"></div>
<div style="left:585.45px;top:751.7px;width:47px;height:15.5px;background:#123e68;border:1px solid #141414"></div>
<div style="left:626.95px;top:761.2px;width:0;height:0;border-left:5px solid transparent;border-bottom:5px solid #141414"></div>
<svg style="left:601.95px;top:754.2px;color:#5aa0e0;" width="15.5" height="10.5"><use href="#arr"/></svg>
<div style="left:586.95px;top:828.5px;width:45.6px;height:1.5px;background:#123e68;"></div>
<div style="left:586.45px;top:835px;width:46.5px;height:17px;background:#0e2d4e;"></div>
<svg style="left:603.95px;top:837px;color:#2f6aa8;" width="12" height="14"><use href="#lock"/></svg>
<div style="left:637.6px;top:260.3px;width:45px;height:16px;background:#27303a;"></div>
<div class="t" style="left:637.6px;top:260.8px;width:45px;height:16px;line-height:16px;color:#30649c;font-size:10px;font-weight:700;text-align:center;">All</div>
<div style="left:637.6px;top:277.4px;width:45px;height:16px;background:#27303a;"></div>
<div class="t" style="left:637.6px;top:277.9px;width:45px;height:16px;line-height:16px;color:#30649c;font-size:10.5px;font-weight:700;text-align:center;">?</div>
<div style="left:637.6px;top:294.6px;width:45px;height:16px;background:#27303a;"></div>
<div class="t" style="left:637.6px;top:295.1px;width:45px;height:16px;line-height:16px;color:#30649c;font-size:10.5px;font-weight:700;text-align:center;">4</div>
<div style="left:637.6px;top:311.8px;width:45px;height:16px;background:#5896cc;"></div>
<div class="t" style="left:637.6px;top:312.3px;width:45px;height:16px;line-height:16px;color:#254c71;font-size:10.5px;font-weight:700;text-align:center;">3</div>
<div style="left:637.6px;top:329px;width:45px;height:16px;background:#27303a;"></div>
<div class="t" style="left:637.6px;top:329.5px;width:45px;height:16px;line-height:16px;color:#30649c;font-size:10.5px;font-weight:700;text-align:center;">2</div>
<div style="left:637.6px;top:346.2px;width:45px;height:16px;background:#27303a;"></div>
<div class="t" style="left:637.6px;top:346.7px;width:45px;height:16px;line-height:16px;color:#30649c;font-size:10.5px;font-weight:700;text-align:center;">1</div>
<div style="left:636.8px;top:371.3px;width:46.8px;height:18.2px;background:#0e2a45;"></div>
<div style="left:659.6px;top:372px;width:1px;height:3px;background:rgba(255,255,255,0.12);"></div>
<div style="left:659.6px;top:386.5px;width:1px;height:3px;background:rgba(255,255,255,0.12);"></div>
<div class="t" style="left:636.6px;top:372.8px;width:46.5px;height:17.5px;line-height:17.5px;color:#dde8ea;font-size:12px;font-weight:700;text-align:center;">0</div>
<div style="left:637.6px;top:397px;width:45.5px;height:16px;background:#4a98dc;"></div>
<svg style="left:652.8px;top:397.6px;color:#0a2440;" width="15" height="14"><use href="#scl"/></svg>
<div style="left:637.6px;top:421px;width:45.5px;height:16px;background:#4a98dc;"></div>
<svg style="left:653.6px;top:422px;color:#0a2440;" width="13.5" height="13.5"><use href="#pwr"/></svg>
<div style="left:637.1px;top:445.5px;width:46px;height:16.2px;background:#0e2a45;"></div>
<svg style="left:652.1px;top:447px;color:#2f6aa8;" width="16" height="14"><use href="#slur"/></svg>
<div style="left:637.6px;top:469.4px;width:45.6px;height:49px;background:#27303a;"></div>
<div style="left:637.6px;top:480.5px;width:45.6px;height:1px;background:rgba(0,0,0,0.16);"></div>
<div style="left:637.6px;top:509.5px;width:45.6px;height:1px;background:rgba(0,0,0,0.16);"></div>
<div style="left:637.6px;top:490.3px;width:45.6px;height:11px;background:rgba(0,0,0,0.35);"></div>
<div style="left:637.6px;top:491.3px;width:45.6px;height:8.7px;background:#5896cc;"></div>
<div style="left:637.6px;top:541px;width:45.7px;height:44.2px;border-radius:3px 3px 0 0;background:#2468a2"></div>
<div style="left:637.6px;top:617.8px;width:45.7px;height:28.2px;border-radius:3px 3px 0 0;background:#2468a2"></div>
<div style="left:637.6px;top:651.7px;width:45.7px;height:55.5px;border-radius:3px 3px 0 0;background:#2468a2"></div>
<div style="left:637.6px;top:747px;width:45.6px;height:1.2px;background:#123e68;"></div>
<div style="left:636.1px;top:751.7px;width:47px;height:15.5px;background:#123e68;border:1px solid #141414"></div>
<div style="left:677.6px;top:761.2px;width:0;height:0;border-left:5px solid transparent;border-bottom:5px solid #141414"></div>
<svg style="left:652.6px;top:754.2px;color:#5aa0e0;" width="15.5" height="10.5"><use href="#arr"/></svg>
<div style="left:637.6px;top:828.5px;width:45.6px;height:1.5px;background:#123e68;"></div>
<div style="left:637.1px;top:835px;width:46.5px;height:17px;background:#0e2d4e;"></div>
<svg style="left:654.6px;top:837px;color:#2f6aa8;" width="12" height="14"><use href="#lock"/></svg>
<div style="left:688.25px;top:260.3px;width:45px;height:16px;background:#27303a;"></div>
<div class="t" style="left:688.25px;top:260.8px;width:45px;height:16px;line-height:16px;color:#30649c;font-size:10px;font-weight:700;text-align:center;">All</div>
<div style="left:688.25px;top:277.4px;width:45px;height:16px;background:#27303a;"></div>
<div class="t" style="left:688.25px;top:277.9px;width:45px;height:16px;line-height:16px;color:#30649c;font-size:10.5px;font-weight:700;text-align:center;">?</div>
<div style="left:688.25px;top:294.6px;width:45px;height:16px;background:#5896cc;"></div>
<div class="t" style="left:688.25px;top:295.1px;width:45px;height:16px;line-height:16px;color:#254c71;font-size:10.5px;font-weight:700;text-align:center;">4</div>
<div style="left:688.25px;top:311.8px;width:45px;height:16px;background:#27303a;"></div>
<div class="t" style="left:688.25px;top:312.3px;width:45px;height:16px;line-height:16px;color:#30649c;font-size:10.5px;font-weight:700;text-align:center;">3</div>
<div style="left:688.25px;top:329px;width:45px;height:16px;background:#27303a;"></div>
<div class="t" style="left:688.25px;top:329.5px;width:45px;height:16px;line-height:16px;color:#30649c;font-size:10.5px;font-weight:700;text-align:center;">2</div>
<div style="left:688.25px;top:346.2px;width:45px;height:16px;background:#27303a;"></div>
<div class="t" style="left:688.25px;top:346.7px;width:45px;height:16px;line-height:16px;color:#30649c;font-size:10.5px;font-weight:700;text-align:center;">1</div>
<div style="left:687.45px;top:371.3px;width:46.8px;height:18.2px;background:#0e2a45;"></div>
<div style="left:710.25px;top:372px;width:1px;height:3px;background:rgba(255,255,255,0.12);"></div>
<div style="left:710.25px;top:386.5px;width:1px;height:3px;background:rgba(255,255,255,0.12);"></div>
<div class="t" style="left:687.25px;top:372.8px;width:46.5px;height:17.5px;line-height:17.5px;color:#dde8ea;font-size:12px;font-weight:700;text-align:center;">0</div>
<div style="left:688.25px;top:397px;width:45.5px;height:16px;background:#4a98dc;"></div>
<svg style="left:703.45px;top:397.6px;color:#0a2440;" width="15" height="14"><use href="#scl"/></svg>
<div style="left:688.25px;top:421px;width:45.5px;height:16px;background:#4a98dc;"></div>
<svg style="left:704.25px;top:422px;color:#0a2440;" width="13.5" height="13.5"><use href="#pwr"/></svg>
<div style="left:687.75px;top:445.5px;width:46px;height:16.2px;background:#0e2a45;"></div>
<svg style="left:702.75px;top:447px;color:#2f6aa8;" width="16" height="14"><use href="#slur"/></svg>
<div style="left:688.25px;top:469.4px;width:45.6px;height:49px;background:#27303a;"></div>
<div style="left:688.25px;top:480.5px;width:45.6px;height:1px;background:rgba(0,0,0,0.16);"></div>
<div style="left:688.25px;top:509.5px;width:45.6px;height:1px;background:rgba(0,0,0,0.16);"></div>
<div style="left:688.25px;top:490.3px;width:45.6px;height:11px;background:rgba(0,0,0,0.35);"></div>
<div style="left:688.25px;top:491.3px;width:45.6px;height:8.7px;background:#5896cc;"></div>
<div style="left:688.25px;top:541px;width:45.7px;height:44.2px;border-radius:3px 3px 0 0;background:#2468a2"></div>
<div style="left:688.25px;top:617.8px;width:45.7px;height:28.2px;border-radius:3px 3px 0 0;background:#2468a2"></div>
<div style="left:688.25px;top:651.7px;width:45.7px;height:55.5px;border-radius:3px 3px 0 0;background:#2468a2"></div>
<div style="left:688.25px;top:747px;width:45.6px;height:1.2px;background:#123e68;"></div>
<div style="left:686.75px;top:751.7px;width:47px;height:15.5px;background:#123e68;border:1px solid #141414"></div>
<div style="left:728.25px;top:761.2px;width:0;height:0;border-left:5px solid transparent;border-bottom:5px solid #141414"></div>
<svg style="left:703.25px;top:754.2px;color:#5aa0e0;" width="15.5" height="10.5"><use href="#arr"/></svg>
<div style="left:688.25px;top:828.5px;width:45.6px;height:1.5px;background:#123e68;"></div>
<div style="left:687.75px;top:835px;width:46.5px;height:17px;background:#0e2d4e;"></div>
<svg style="left:705.25px;top:837px;color:#2f6aa8;" width="12" height="14"><use href="#lock"/></svg>
<div style="left:741.2px;top:184.5px;width:210px;height:1px;background:#222222;"></div>
<div style="left:741.2px;top:250px;width:210px;height:1px;background:#1e1e1e;"></div>
<div style="left:740.7px;top:230px;width:1.2px;height:20px;background:#262626;"></div>
<div style="left:745.8px;top:192px;width:23px;height:23.6px;border-radius:2.5px;background:#2c2c2c"></div>
<svg style="left:749.8px;top:198.5px;color:#2a9a50;" width="15" height="11"><use href="#ham2"/></svg>
<div style="left:776.6px;top:192px;width:19.6px;height:23.7px;background:#22b458;"></div>
<svg style="left:782.1px;top:198px;color:#063014;" width="8.6" height="12"><use href="#chevR"/></svg>
<div style="left:797.15px;top:192px;width:19.6px;height:23.7px;background:#0a2e16;"></div>
<svg style="left:802.65px;top:198px;color:#1a7a3a;" width="8.6" height="12"><use href="#chevL"/></svg>
<div style="left:817.7px;top:192px;width:19.6px;height:23.7px;background:#0a2e16;"></div>
<svg style="left:819.7px;top:196px;color:#1a7a3a;" width="16" height="16"><use href="#rptR"/></svg>
<div style="left:838.25px;top:192px;width:19.6px;height:23.7px;background:#0a2e16;"></div>
<svg style="left:840.25px;top:196px;color:#1a7a3a;" width="16" height="16"><use href="#rptL"/></svg>
<div style="left:858.8px;top:192px;width:19.6px;height:23.7px;background:#0a2e16;"></div>
<div class="t" style="left:858.8px;top:192.5px;width:19.6px;height:23px;line-height:23px;color:#1a7a3a;font-size:14px;font-weight:700;text-align:center;">?</div>
<div style="left:879.35px;top:192px;width:19.6px;height:23.7px;background:#0a2e16;"></div>
<div class="t" style="left:879.35px;top:192.5px;width:19.6px;height:23px;line-height:23px;color:#1a7a3a;font-size:12.5px;font-weight:700;text-align:center;letter-spacing:-0.3px">??</div>
<div style="left:903.8px;top:192px;width:4px;height:4px;border-left:1.5px solid #3a3a3a;border-top:1.5px solid #3a3a3a"></div>
<div style="left:903.8px;top:212px;width:4px;height:4px;border-left:1.5px solid #3a3a3a;border-bottom:1.5px solid #3a3a3a"></div>
<div style="left:943.8px;top:192px;width:4px;height:4px;border-right:1.5px solid #3a3a3a;border-top:1.5px solid #3a3a3a"></div>
<div style="left:943.8px;top:212px;width:4px;height:4px;border-right:1.5px solid #3a3a3a;border-bottom:1.5px solid #3a3a3a"></div>
<div class="t" style="left:903.8px;top:192px;width:44px;height:24px;line-height:24px;color:#34b062;font-size:12px;font-weight:700;text-align:center;">Size 4</div>
<div style="left:745.8px;top:222px;width:24px;height:24.7px;border-radius:2.5px;background:#2e2e2e"></div>
<div class="t" style="left:745.8px;top:223px;width:24px;height:24.7px;line-height:24.7px;color:#22b458;font-size:17.5px;font-weight:700;text-align:center;">3</div>
<div style="left:775.8px;top:222.5px;width:18.6px;height:24.2px;background:#22b458;"></div>
<div class="t" style="left:775.8px;top:222.5px;width:18.6px;height:24.2px;line-height:24.2px;color:#063014;font-size:15px;font-weight:400;text-align:center;">A</div>
<div style="left:795.35px;top:222.5px;width:18.6px;height:24.2px;background:#0a2e16;"></div>
<div class="t" style="left:795.35px;top:222.5px;width:18.6px;height:24.2px;line-height:24.2px;color:#1a7a3a;font-size:15px;font-weight:400;text-align:center;">B</div>
<div style="left:814.9px;top:222.5px;width:18.6px;height:24.2px;background:#0a2e16;"></div>
<div class="t" style="left:814.9px;top:222.5px;width:18.6px;height:24.2px;line-height:24.2px;color:#1a7a3a;font-size:15px;font-weight:400;text-align:center;">C</div>
<div style="left:834.45px;top:222.5px;width:18.6px;height:24.2px;background:#0a2e16;"></div>
<div class="t" style="left:834.45px;top:222.5px;width:18.6px;height:24.2px;line-height:24.2px;color:#1a7a3a;font-size:15px;font-weight:400;text-align:center;">D</div>
<div style="left:854px;top:222.5px;width:18.6px;height:24.2px;background:#0a2e16;"></div>
<div class="t" style="left:854px;top:222.5px;width:18.6px;height:24.2px;line-height:24.2px;color:#1a7a3a;font-size:15px;font-weight:400;text-align:center;">E</div>
<div style="left:873.55px;top:222.5px;width:18.6px;height:24.2px;background:#0a2e16;"></div>
<div class="t" style="left:873.55px;top:222.5px;width:18.6px;height:24.2px;line-height:24.2px;color:#1a7a3a;font-size:15px;font-weight:400;text-align:center;">F</div>
<div style="left:893.1px;top:222.5px;width:18.6px;height:24.2px;background:#0a2e16;"></div>
<div class="t" style="left:893.1px;top:222.5px;width:18.6px;height:24.2px;line-height:24.2px;color:#1a7a3a;font-size:15px;font-weight:400;text-align:center;">G</div>
<div style="left:912.65px;top:222.5px;width:18.6px;height:24.2px;background:#0a2e16;"></div>
<div class="t" style="left:912.65px;top:222.5px;width:18.6px;height:24.2px;line-height:24.2px;color:#1a7a3a;font-size:15px;font-weight:400;text-align:center;">H</div>
<div style="left:741.7px;top:255.5px;width:210px;height:111.5px;background:#29292b;"></div>
<div style="left:741.7px;top:369px;width:210px;height:23px;background:#29292b;"></div>
<div style="left:741.7px;top:393.5px;width:210px;height:22.5px;background:#29292b;"></div>
<div style="left:741.7px;top:418px;width:210px;height:22px;background:#29292b;"></div>
<div style="left:741.7px;top:442px;width:210px;height:22px;background:#29292b;"></div>
<div style="left:741.7px;top:466.7px;width:210px;height:58.9px;background:#29292b;"></div>
<div style="left:741.7px;top:527.2px;width:210px;height:58.8px;background:#29292b;"></div>
<div style="left:741.7px;top:588.3px;width:210px;height:58.4px;background:#29292b;"></div>
<div style="left:741.7px;top:649.4px;width:210px;height:58.1px;background:#29292b;"></div>
<div style="left:741.7px;top:710px;width:210px;height:59px;background:#29292b;"></div>
<div style="left:741.7px;top:771px;width:210px;height:59px;background:#29292b;"></div>
<div style="left:741.7px;top:832px;width:210px;height:23px;background:#29292b;"></div>
<div style="left:748.2px;top:260.3px;width:45px;height:16px;background:#26322a;"></div>
<div class="t" style="left:748.2px;top:260.8px;width:45px;height:16px;line-height:16px;color:#1a7c38;font-size:10px;font-weight:700;text-align:center;">All</div>
<div style="left:748.2px;top:277.4px;width:45px;height:16px;background:#26322a;"></div>
<div class="t" style="left:748.2px;top:277.9px;width:45px;height:16px;line-height:16px;color:#1a7c38;font-size:10.5px;font-weight:700;text-align:center;">?</div>
<div style="left:748.2px;top:294.6px;width:45px;height:16px;background:#26322a;"></div>
<div class="t" style="left:748.2px;top:295.1px;width:45px;height:16px;line-height:16px;color:#1a7c38;font-size:10.5px;font-weight:700;text-align:center;">4</div>
<div style="left:748.2px;top:311.8px;width:45px;height:16px;background:#26322a;"></div>
<div class="t" style="left:748.2px;top:312.3px;width:45px;height:16px;line-height:16px;color:#1a7c38;font-size:10.5px;font-weight:700;text-align:center;">3</div>
<div style="left:748.2px;top:329px;width:45px;height:16px;background:#26322a;"></div>
<div class="t" style="left:748.2px;top:329.5px;width:45px;height:16px;line-height:16px;color:#1a7c38;font-size:10.5px;font-weight:700;text-align:center;">2</div>
<div style="left:748.2px;top:346.2px;width:45px;height:16px;background:#3aa862;"></div>
<div class="t" style="left:748.2px;top:346.7px;width:45px;height:16px;line-height:16px;color:#185a2f;font-size:10.5px;font-weight:700;text-align:center;">1</div>
<div style="left:747.4px;top:371.3px;width:46.8px;height:18.2px;background:#0a2e16;"></div>
<div style="left:770.2px;top:372px;width:1px;height:3px;background:rgba(255,255,255,0.12);"></div>
<div style="left:770.2px;top:386.5px;width:1px;height:3px;background:rgba(255,255,255,0.12);"></div>
<div class="t" style="left:747.2px;top:372.8px;width:46.5px;height:17.5px;line-height:17.5px;color:#dde8ea;font-size:12px;font-weight:700;text-align:center;">0</div>
<div style="left:748.2px;top:397px;width:45.5px;height:16px;background:#22b458;"></div>
<svg style="left:763.4px;top:397.6px;color:#063014;" width="15" height="14"><use href="#scl"/></svg>
<div style="left:748.2px;top:421px;width:45.5px;height:16px;background:#22b458;"></div>
<svg style="left:764.2px;top:422px;color:#063014;" width="13.5" height="13.5"><use href="#pwr"/></svg>
<div style="left:747.7px;top:445.5px;width:46px;height:16.2px;background:#0a2e16;"></div>
<svg style="left:762.7px;top:447px;color:#1a7a3a;" width="16" height="14"><use href="#slur"/></svg>
<div style="left:748.2px;top:469.4px;width:45.6px;height:49px;background:#26322a;"></div>
<div style="left:748.2px;top:480.5px;width:45.6px;height:1px;background:rgba(0,0,0,0.16);"></div>
<div style="left:748.2px;top:509.5px;width:45.6px;height:1px;background:rgba(0,0,0,0.16);"></div>
<div style="left:748.2px;top:490.3px;width:45.6px;height:11px;background:rgba(0,0,0,0.35);"></div>
<div style="left:748.2px;top:491.3px;width:45.6px;height:8.7px;background:#3aaa68;"></div>
<div style="left:748.2px;top:541px;width:45.7px;height:44.2px;border-radius:3px 3px 0 0;background:#0e7e3e"></div>
<div style="left:748.2px;top:617.8px;width:45.7px;height:28.2px;border-radius:3px 3px 0 0;background:#0e7e3e"></div>
<div style="left:748.2px;top:651.7px;width:45.7px;height:55.5px;border-radius:3px 3px 0 0;background:#0e7e3e"></div>
<div style="left:748.2px;top:747px;width:45.6px;height:1.2px;background:#0e5628;"></div>
<div style="left:746.7px;top:751.7px;width:47px;height:15.5px;background:#0e5628;border:1px solid #141414"></div>
<div style="left:788.2px;top:761.2px;width:0;height:0;border-left:5px solid transparent;border-bottom:5px solid #141414"></div>
<svg style="left:763.2px;top:754.2px;color:#3ac06a;" width="15.5" height="10.5"><use href="#arr"/></svg>
<div style="left:748.2px;top:828.5px;width:45.6px;height:1.5px;background:#0e5628;"></div>
<div style="left:747.7px;top:835px;width:46.5px;height:17px;background:#0a381a;"></div>
<svg style="left:765.2px;top:837px;color:#1a7a3a;" width="12" height="14"><use href="#lock"/></svg>
<div style="left:798.85px;top:260.3px;width:45px;height:16px;background:#26322a;"></div>
<div class="t" style="left:798.85px;top:260.8px;width:45px;height:16px;line-height:16px;color:#1a7c38;font-size:10px;font-weight:700;text-align:center;">All</div>
<div style="left:798.85px;top:277.4px;width:45px;height:16px;background:#26322a;"></div>
<div class="t" style="left:798.85px;top:277.9px;width:45px;height:16px;line-height:16px;color:#1a7c38;font-size:10.5px;font-weight:700;text-align:center;">?</div>
<div style="left:798.85px;top:294.6px;width:45px;height:16px;background:#26322a;"></div>
<div class="t" style="left:798.85px;top:295.1px;width:45px;height:16px;line-height:16px;color:#1a7c38;font-size:10.5px;font-weight:700;text-align:center;">4</div>
<div style="left:798.85px;top:311.8px;width:45px;height:16px;background:#26322a;"></div>
<div class="t" style="left:798.85px;top:312.3px;width:45px;height:16px;line-height:16px;color:#1a7c38;font-size:10.5px;font-weight:700;text-align:center;">3</div>
<div style="left:798.85px;top:329px;width:45px;height:16px;background:#3aa862;"></div>
<div class="t" style="left:798.85px;top:329.5px;width:45px;height:16px;line-height:16px;color:#185a2f;font-size:10.5px;font-weight:700;text-align:center;">2</div>
<div style="left:798.85px;top:346.2px;width:45px;height:16px;background:#26322a;"></div>
<div class="t" style="left:798.85px;top:346.7px;width:45px;height:16px;line-height:16px;color:#1a7c38;font-size:10.5px;font-weight:700;text-align:center;">1</div>
<div style="left:798.05px;top:371.3px;width:46.8px;height:18.2px;background:#0a2e16;"></div>
<div style="left:820.85px;top:372px;width:1px;height:3px;background:rgba(255,255,255,0.12);"></div>
<div style="left:820.85px;top:386.5px;width:1px;height:3px;background:rgba(255,255,255,0.12);"></div>
<div class="t" style="left:797.85px;top:372.8px;width:46.5px;height:17.5px;line-height:17.5px;color:#dde8ea;font-size:12px;font-weight:700;text-align:center;">0</div>
<div style="left:798.85px;top:397px;width:45.5px;height:16px;background:#22b458;"></div>
<svg style="left:814.05px;top:397.6px;color:#063014;" width="15" height="14"><use href="#scl"/></svg>
<div style="left:798.85px;top:421px;width:45.5px;height:16px;background:#22b458;"></div>
<svg style="left:814.85px;top:422px;color:#063014;" width="13.5" height="13.5"><use href="#pwr"/></svg>
<div style="left:798.35px;top:445.5px;width:46px;height:16.2px;background:#0a2e16;"></div>
<svg style="left:813.35px;top:447px;color:#1a7a3a;" width="16" height="14"><use href="#slur"/></svg>
<div style="left:798.85px;top:469.4px;width:45.6px;height:49px;background:#26322a;"></div>
<div style="left:798.85px;top:480.5px;width:45.6px;height:1px;background:rgba(0,0,0,0.16);"></div>
<div style="left:798.85px;top:509.5px;width:45.6px;height:1px;background:rgba(0,0,0,0.16);"></div>
<div style="left:798.85px;top:490.3px;width:45.6px;height:11px;background:rgba(0,0,0,0.35);"></div>
<div style="left:798.85px;top:491.3px;width:45.6px;height:8.7px;background:#3aaa68;"></div>
<div style="left:798.85px;top:541px;width:45.7px;height:44.2px;border-radius:3px 3px 0 0;background:#0e7e3e"></div>
<div style="left:798.85px;top:617.8px;width:45.7px;height:28.2px;border-radius:3px 3px 0 0;background:#0e7e3e"></div>
<div style="left:798.85px;top:651.7px;width:45.7px;height:55.5px;border-radius:3px 3px 0 0;background:#0e7e3e"></div>
<div style="left:798.85px;top:747px;width:45.6px;height:1.2px;background:#0e5628;"></div>
<div style="left:797.35px;top:751.7px;width:47px;height:15.5px;background:#0e5628;border:1px solid #141414"></div>
<div style="left:838.85px;top:761.2px;width:0;height:0;border-left:5px solid transparent;border-bottom:5px solid #141414"></div>
<svg style="left:813.85px;top:754.2px;color:#3ac06a;" width="15.5" height="10.5"><use href="#arr"/></svg>
<div style="left:798.85px;top:828.5px;width:45.6px;height:1.5px;background:#0e5628;"></div>
<div style="left:798.35px;top:835px;width:46.5px;height:17px;background:#0a381a;"></div>
<svg style="left:815.85px;top:837px;color:#1a7a3a;" width="12" height="14"><use href="#lock"/></svg>
<div style="left:849.5px;top:260.3px;width:45px;height:16px;background:#26322a;"></div>
<div class="t" style="left:849.5px;top:260.8px;width:45px;height:16px;line-height:16px;color:#1a7c38;font-size:10px;font-weight:700;text-align:center;">All</div>
<div style="left:849.5px;top:277.4px;width:45px;height:16px;background:#26322a;"></div>
<div class="t" style="left:849.5px;top:277.9px;width:45px;height:16px;line-height:16px;color:#1a7c38;font-size:10.5px;font-weight:700;text-align:center;">?</div>
<div style="left:849.5px;top:294.6px;width:45px;height:16px;background:#26322a;"></div>
<div class="t" style="left:849.5px;top:295.1px;width:45px;height:16px;line-height:16px;color:#1a7c38;font-size:10.5px;font-weight:700;text-align:center;">4</div>
<div style="left:849.5px;top:311.8px;width:45px;height:16px;background:#3aa862;"></div>
<div class="t" style="left:849.5px;top:312.3px;width:45px;height:16px;line-height:16px;color:#185a2f;font-size:10.5px;font-weight:700;text-align:center;">3</div>
<div style="left:849.5px;top:329px;width:45px;height:16px;background:#26322a;"></div>
<div class="t" style="left:849.5px;top:329.5px;width:45px;height:16px;line-height:16px;color:#1a7c38;font-size:10.5px;font-weight:700;text-align:center;">2</div>
<div style="left:849.5px;top:346.2px;width:45px;height:16px;background:#26322a;"></div>
<div class="t" style="left:849.5px;top:346.7px;width:45px;height:16px;line-height:16px;color:#1a7c38;font-size:10.5px;font-weight:700;text-align:center;">1</div>
<div style="left:848.7px;top:371.3px;width:46.8px;height:18.2px;background:#0a2e16;"></div>
<div style="left:871.5px;top:372px;width:1px;height:3px;background:rgba(255,255,255,0.12);"></div>
<div style="left:871.5px;top:386.5px;width:1px;height:3px;background:rgba(255,255,255,0.12);"></div>
<div class="t" style="left:848.5px;top:372.8px;width:46.5px;height:17.5px;line-height:17.5px;color:#dde8ea;font-size:12px;font-weight:700;text-align:center;">0</div>
<div style="left:849.5px;top:397px;width:45.5px;height:16px;background:#22b458;"></div>
<svg style="left:864.7px;top:397.6px;color:#063014;" width="15" height="14"><use href="#scl"/></svg>
<div style="left:849.5px;top:421px;width:45.5px;height:16px;background:#22b458;"></div>
<svg style="left:865.5px;top:422px;color:#063014;" width="13.5" height="13.5"><use href="#pwr"/></svg>
<div style="left:849px;top:445.5px;width:46px;height:16.2px;background:#0a2e16;"></div>
<svg style="left:864px;top:447px;color:#1a7a3a;" width="16" height="14"><use href="#slur"/></svg>
<div style="left:849.5px;top:469.4px;width:45.6px;height:49px;background:#26322a;"></div>
<div style="left:849.5px;top:480.5px;width:45.6px;height:1px;background:rgba(0,0,0,0.16);"></div>
<div style="left:849.5px;top:509.5px;width:45.6px;height:1px;background:rgba(0,0,0,0.16);"></div>
<div style="left:849.5px;top:490.3px;width:45.6px;height:11px;background:rgba(0,0,0,0.35);"></div>
<div style="left:849.5px;top:491.3px;width:45.6px;height:8.7px;background:#3aaa68;"></div>
<div style="left:849.5px;top:541px;width:45.7px;height:44.2px;border-radius:3px 3px 0 0;background:#0e7e3e"></div>
<div style="left:849.5px;top:617.8px;width:45.7px;height:28.2px;border-radius:3px 3px 0 0;background:#0e7e3e"></div>
<div style="left:849.5px;top:651.7px;width:45.7px;height:55.5px;border-radius:3px 3px 0 0;background:#0e7e3e"></div>
<div style="left:849.5px;top:747px;width:45.6px;height:1.2px;background:#0e5628;"></div>
<div style="left:848.0px;top:751.7px;width:47px;height:15.5px;background:#0e5628;border:1px solid #141414"></div>
<div style="left:889.5px;top:761.2px;width:0;height:0;border-left:5px solid transparent;border-bottom:5px solid #141414"></div>
<svg style="left:864.5px;top:754.2px;color:#3ac06a;" width="15.5" height="10.5"><use href="#arr"/></svg>
<div style="left:849.5px;top:828.5px;width:45.6px;height:1.5px;background:#0e5628;"></div>
<div style="left:849px;top:835px;width:46.5px;height:17px;background:#0a381a;"></div>
<svg style="left:866.5px;top:837px;color:#1a7a3a;" width="12" height="14"><use href="#lock"/></svg>
<div style="left:900.15px;top:260.3px;width:45px;height:16px;background:#26322a;"></div>
<div class="t" style="left:900.15px;top:260.8px;width:45px;height:16px;line-height:16px;color:#1a7c38;font-size:10px;font-weight:700;text-align:center;">All</div>
<div style="left:900.15px;top:277.4px;width:45px;height:16px;background:#26322a;"></div>
<div class="t" style="left:900.15px;top:277.9px;width:45px;height:16px;line-height:16px;color:#1a7c38;font-size:10.5px;font-weight:700;text-align:center;">?</div>
<div style="left:900.15px;top:294.6px;width:45px;height:16px;background:#3aa862;"></div>
<div class="t" style="left:900.15px;top:295.1px;width:45px;height:16px;line-height:16px;color:#185a2f;font-size:10.5px;font-weight:700;text-align:center;">4</div>
<div style="left:900.15px;top:311.8px;width:45px;height:16px;background:#26322a;"></div>
<div class="t" style="left:900.15px;top:312.3px;width:45px;height:16px;line-height:16px;color:#1a7c38;font-size:10.5px;font-weight:700;text-align:center;">3</div>
<div style="left:900.15px;top:329px;width:45px;height:16px;background:#26322a;"></div>
<div class="t" style="left:900.15px;top:329.5px;width:45px;height:16px;line-height:16px;color:#1a7c38;font-size:10.5px;font-weight:700;text-align:center;">2</div>
<div style="left:900.15px;top:346.2px;width:45px;height:16px;background:#26322a;"></div>
<div class="t" style="left:900.15px;top:346.7px;width:45px;height:16px;line-height:16px;color:#1a7c38;font-size:10.5px;font-weight:700;text-align:center;">1</div>
<div style="left:899.35px;top:371.3px;width:46.8px;height:18.2px;background:#0a2e16;"></div>
<div style="left:922.15px;top:372px;width:1px;height:3px;background:rgba(255,255,255,0.12);"></div>
<div style="left:922.15px;top:386.5px;width:1px;height:3px;background:rgba(255,255,255,0.12);"></div>
<div class="t" style="left:899.15px;top:372.8px;width:46.5px;height:17.5px;line-height:17.5px;color:#dde8ea;font-size:12px;font-weight:700;text-align:center;">0</div>
<div style="left:900.15px;top:397px;width:45.5px;height:16px;background:#22b458;"></div>
<svg style="left:915.35px;top:397.6px;color:#063014;" width="15" height="14"><use href="#scl"/></svg>
<div style="left:900.15px;top:421px;width:45.5px;height:16px;background:#22b458;"></div>
<svg style="left:916.15px;top:422px;color:#063014;" width="13.5" height="13.5"><use href="#pwr"/></svg>
<div style="left:899.65px;top:445.5px;width:46px;height:16.2px;background:#0a2e16;"></div>
<svg style="left:914.65px;top:447px;color:#1a7a3a;" width="16" height="14"><use href="#slur"/></svg>
<div style="left:900.15px;top:469.4px;width:45.6px;height:49px;background:#26322a;"></div>
<div style="left:900.15px;top:480.5px;width:45.6px;height:1px;background:rgba(0,0,0,0.16);"></div>
<div style="left:900.15px;top:509.5px;width:45.6px;height:1px;background:rgba(0,0,0,0.16);"></div>
<div style="left:900.15px;top:490.3px;width:45.6px;height:11px;background:rgba(0,0,0,0.35);"></div>
<div style="left:900.15px;top:491.3px;width:45.6px;height:8.7px;background:#3aaa68;"></div>
<div style="left:900.1500000000001px;top:541px;width:45.7px;height:44.2px;border-radius:3px 3px 0 0;background:#0e7e3e"></div>
<div style="left:900.1500000000001px;top:617.8px;width:45.7px;height:28.2px;border-radius:3px 3px 0 0;background:#0e7e3e"></div>
<div style="left:900.1500000000001px;top:651.7px;width:45.7px;height:55.5px;border-radius:3px 3px 0 0;background:#0e7e3e"></div>
<div style="left:900.15px;top:747px;width:45.6px;height:1.2px;background:#0e5628;"></div>
<div style="left:898.6500000000001px;top:751.7px;width:47px;height:15.5px;background:#0e5628;border:1px solid #141414"></div>
<div style="left:940.1500000000001px;top:761.2px;width:0;height:0;border-left:5px solid transparent;border-bottom:5px solid #141414"></div>
<svg style="left:915.15px;top:754.2px;color:#3ac06a;" width="15.5" height="10.5"><use href="#arr"/></svg>
<div style="left:900.15px;top:828.5px;width:45.6px;height:1.5px;background:#0e5628;"></div>
<div style="left:899.65px;top:835px;width:46.5px;height:17px;background:#0a381a;"></div>
<svg style="left:917.15px;top:837px;color:#1a7a3a;" width="12" height="14"><use href="#lock"/></svg>
<div style="left:953.1px;top:184.5px;width:210px;height:1px;background:#222222;"></div>
<div style="left:953.1px;top:250px;width:210px;height:1px;background:#1e1e1e;"></div>
<div style="left:952.6px;top:230px;width:1.2px;height:20px;background:#262626;"></div>
<div style="left:957.7px;top:192px;width:23px;height:23.6px;border-radius:2.5px;background:#2c2c2c"></div>
<svg style="left:961.7px;top:198.5px;color:#8cc050;" width="15" height="11"><use href="#ham2"/></svg>
<div style="left:988.5px;top:192px;width:19.6px;height:23.7px;background:#8cca55;"></div>
<svg style="left:994px;top:198px;color:#1c300a;" width="8.6" height="12"><use href="#chevR"/></svg>
<div style="left:1009.05px;top:192px;width:19.6px;height:23.7px;background:#22380e;"></div>
<svg style="left:1014.55px;top:198px;color:#6a9a30;" width="8.6" height="12"><use href="#chevL"/></svg>
<div style="left:1029.6px;top:192px;width:19.6px;height:23.7px;background:#22380e;"></div>
<svg style="left:1031.6px;top:196px;color:#6a9a30;" width="16" height="16"><use href="#rptR"/></svg>
<div style="left:1050.15px;top:192px;width:19.6px;height:23.7px;background:#22380e;"></div>
<svg style="left:1052.15px;top:196px;color:#6a9a30;" width="16" height="16"><use href="#rptL"/></svg>
<div style="left:1070.7px;top:192px;width:19.6px;height:23.7px;background:#22380e;"></div>
<div class="t" style="left:1070.7px;top:192.5px;width:19.6px;height:23px;line-height:23px;color:#6a9a30;font-size:14px;font-weight:700;text-align:center;">?</div>
<div style="left:1091.25px;top:192px;width:19.6px;height:23.7px;background:#22380e;"></div>
<div class="t" style="left:1091.25px;top:192.5px;width:19.6px;height:23px;line-height:23px;color:#6a9a30;font-size:12.5px;font-weight:700;text-align:center;letter-spacing:-0.3px">??</div>
<div style="left:1115.7px;top:192px;width:4px;height:4px;border-left:1.5px solid #3a3a3a;border-top:1.5px solid #3a3a3a"></div>
<div style="left:1115.7px;top:212px;width:4px;height:4px;border-left:1.5px solid #3a3a3a;border-bottom:1.5px solid #3a3a3a"></div>
<div style="left:1155.7px;top:192px;width:4px;height:4px;border-right:1.5px solid #3a3a3a;border-top:1.5px solid #3a3a3a"></div>
<div style="left:1155.7px;top:212px;width:4px;height:4px;border-right:1.5px solid #3a3a3a;border-bottom:1.5px solid #3a3a3a"></div>
<div class="t" style="left:1115.7px;top:192px;width:44px;height:24px;line-height:24px;color:#c4dea0;font-size:12px;font-weight:700;text-align:center;">Size 4</div>
<div style="left:957.7px;top:222px;width:24px;height:24.7px;border-radius:2.5px;background:#2e2e2e"></div>
<div class="t" style="left:957.7px;top:223px;width:24px;height:24.7px;line-height:24.7px;color:#8cca55;font-size:17.5px;font-weight:700;text-align:center;">4</div>
<div style="left:987.7px;top:222.5px;width:18.6px;height:24.2px;background:#8cca55;"></div>
<div class="t" style="left:987.7px;top:222.5px;width:18.6px;height:24.2px;line-height:24.2px;color:#1c300a;font-size:15px;font-weight:400;text-align:center;">A</div>
<div style="left:1007.25px;top:222.5px;width:18.6px;height:24.2px;background:#22380e;"></div>
<div class="t" style="left:1007.25px;top:222.5px;width:18.6px;height:24.2px;line-height:24.2px;color:#6a9a30;font-size:15px;font-weight:400;text-align:center;">B</div>
<div style="left:1026.8px;top:222.5px;width:18.6px;height:24.2px;background:#22380e;"></div>
<div class="t" style="left:1026.8px;top:222.5px;width:18.6px;height:24.2px;line-height:24.2px;color:#6a9a30;font-size:15px;font-weight:400;text-align:center;">C</div>
<div style="left:1046.35px;top:222.5px;width:18.6px;height:24.2px;background:#22380e;"></div>
<div class="t" style="left:1046.35px;top:222.5px;width:18.6px;height:24.2px;line-height:24.2px;color:#6a9a30;font-size:15px;font-weight:400;text-align:center;">D</div>
<div style="left:1065.9px;top:222.5px;width:18.6px;height:24.2px;background:#22380e;"></div>
<div class="t" style="left:1065.9px;top:222.5px;width:18.6px;height:24.2px;line-height:24.2px;color:#6a9a30;font-size:15px;font-weight:400;text-align:center;">E</div>
<div style="left:1085.45px;top:222.5px;width:18.6px;height:24.2px;background:#22380e;"></div>
<div class="t" style="left:1085.45px;top:222.5px;width:18.6px;height:24.2px;line-height:24.2px;color:#6a9a30;font-size:15px;font-weight:400;text-align:center;">F</div>
<div style="left:1105px;top:222.5px;width:18.6px;height:24.2px;background:#22380e;"></div>
<div class="t" style="left:1105px;top:222.5px;width:18.6px;height:24.2px;line-height:24.2px;color:#6a9a30;font-size:15px;font-weight:400;text-align:center;">G</div>
<div style="left:1124.55px;top:222.5px;width:18.6px;height:24.2px;background:#22380e;"></div>
<div class="t" style="left:1124.55px;top:222.5px;width:18.6px;height:24.2px;line-height:24.2px;color:#6a9a30;font-size:15px;font-weight:400;text-align:center;">H</div>
<div style="left:953.6px;top:255.5px;width:210px;height:111.5px;background:#29292b;"></div>
<div style="left:953.6px;top:369px;width:210px;height:23px;background:#29292b;"></div>
<div style="left:953.6px;top:393.5px;width:210px;height:22.5px;background:#29292b;"></div>
<div style="left:953.6px;top:418px;width:210px;height:22px;background:#29292b;"></div>
<div style="left:953.6px;top:442px;width:210px;height:22px;background:#29292b;"></div>
<div style="left:953.6px;top:466.7px;width:210px;height:58.9px;background:#29292b;"></div>
<div style="left:953.6px;top:527.2px;width:210px;height:58.8px;background:#29292b;"></div>
<div style="left:953.6px;top:588.3px;width:210px;height:58.4px;background:#29292b;"></div>
<div style="left:953.6px;top:649.4px;width:210px;height:58.1px;background:#29292b;"></div>
<div style="left:953.6px;top:710px;width:210px;height:59px;background:#29292b;"></div>
<div style="left:953.6px;top:771px;width:210px;height:59px;background:#29292b;"></div>
<div style="left:953.6px;top:832px;width:210px;height:23px;background:#29292b;"></div>
<div style="left:960.1px;top:260.3px;width:45px;height:16px;background:#2c3826;"></div>
<div class="t" style="left:960.1px;top:260.8px;width:45px;height:16px;line-height:16px;color:#86b040;font-size:10px;font-weight:700;text-align:center;">All</div>
<div style="left:960.1px;top:277.4px;width:45px;height:16px;background:#2c3826;"></div>
<div class="t" style="left:960.1px;top:277.9px;width:45px;height:16px;line-height:16px;color:#86b040;font-size:10.5px;font-weight:700;text-align:center;">?</div>
<div style="left:960.1px;top:294.6px;width:45px;height:16px;background:#2c3826;"></div>
<div class="t" style="left:960.1px;top:295.1px;width:45px;height:16px;line-height:16px;color:#86b040;font-size:10.5px;font-weight:700;text-align:center;">4</div>
<div style="left:960.1px;top:311.8px;width:45px;height:16px;background:#2c3826;"></div>
<div class="t" style="left:960.1px;top:312.3px;width:45px;height:16px;line-height:16px;color:#86b040;font-size:10.5px;font-weight:700;text-align:center;">3</div>
<div style="left:960.1px;top:329px;width:45px;height:16px;background:#2c3826;"></div>
<div class="t" style="left:960.1px;top:329.5px;width:45px;height:16px;line-height:16px;color:#86b040;font-size:10.5px;font-weight:700;text-align:center;">2</div>
<div style="left:960.1px;top:346.2px;width:45px;height:16px;background:#8cbd62;"></div>
<div class="t" style="left:960.1px;top:346.7px;width:45px;height:16px;line-height:16px;color:#436129;font-size:10.5px;font-weight:700;text-align:center;">1</div>
<div style="left:959.3px;top:371.3px;width:46.8px;height:18.2px;background:#22380e;"></div>
<div style="left:982.1px;top:372px;width:1px;height:3px;background:rgba(255,255,255,0.12);"></div>
<div style="left:982.1px;top:386.5px;width:1px;height:3px;background:rgba(255,255,255,0.12);"></div>
<div class="t" style="left:959.1px;top:372.8px;width:46.5px;height:17.5px;line-height:17.5px;color:#dde8ea;font-size:12px;font-weight:700;text-align:center;">0</div>
<div style="left:960.1px;top:397px;width:45.5px;height:16px;background:#8cca55;"></div>
<svg style="left:975.3px;top:397.6px;color:#1c300a;" width="15" height="14"><use href="#scl"/></svg>
<div style="left:960.1px;top:421px;width:45.5px;height:16px;background:#8cca55;"></div>
<svg style="left:976.1px;top:422px;color:#1c300a;" width="13.5" height="13.5"><use href="#pwr"/></svg>
<div style="left:959.6px;top:445.5px;width:46px;height:16.2px;background:#22380e;"></div>
<svg style="left:974.6px;top:447px;color:#6a9a30;" width="16" height="14"><use href="#slur"/></svg>
<div style="left:960.1px;top:469.4px;width:45.6px;height:49px;background:#2c3826;"></div>
<div style="left:960.1px;top:480.5px;width:45.6px;height:1px;background:rgba(0,0,0,0.16);"></div>
<div style="left:960.1px;top:509.5px;width:45.6px;height:1px;background:rgba(0,0,0,0.16);"></div>
<div style="left:960.1px;top:490.3px;width:45.6px;height:11px;background:rgba(0,0,0,0.35);"></div>
<div style="left:960.1px;top:491.3px;width:45.6px;height:8.7px;background:#8cc060;"></div>
<div style="left:960.1px;top:541px;width:45.7px;height:44.2px;border-radius:3px 3px 0 0;background:#6a9838"></div>
<div style="left:960.1px;top:617.8px;width:45.7px;height:28.2px;border-radius:3px 3px 0 0;background:#6a9838"></div>
<div style="left:960.1px;top:651.7px;width:45.7px;height:55.5px;border-radius:3px 3px 0 0;background:#6a9838"></div>
<div style="left:960.1px;top:747px;width:45.6px;height:1.2px;background:#4a6a1c;"></div>
<div style="left:958.6px;top:751.7px;width:47px;height:15.5px;background:#4a6a1c;border:1px solid #141414"></div>
<div style="left:1000.1px;top:761.2px;width:0;height:0;border-left:5px solid transparent;border-bottom:5px solid #141414"></div>
<svg style="left:975.1px;top:754.2px;color:#a0d860;" width="15.5" height="10.5"><use href="#arr"/></svg>
<div style="left:960.1px;top:828.5px;width:45.6px;height:1.5px;background:#4a6a1c;"></div>
<div style="left:959.6px;top:835px;width:46.5px;height:17px;background:#2c3e12;"></div>
<svg style="left:977.1px;top:837px;color:#6a9a30;" width="12" height="14"><use href="#lock"/></svg>
<div style="left:1010.75px;top:260.3px;width:45px;height:16px;background:#2c3826;"></div>
<div class="t" style="left:1010.75px;top:260.8px;width:45px;height:16px;line-height:16px;color:#86b040;font-size:10px;font-weight:700;text-align:center;">All</div>
<div style="left:1010.75px;top:277.4px;width:45px;height:16px;background:#2c3826;"></div>
<div class="t" style="left:1010.75px;top:277.9px;width:45px;height:16px;line-height:16px;color:#86b040;font-size:10.5px;font-weight:700;text-align:center;">?</div>
<div style="left:1010.75px;top:294.6px;width:45px;height:16px;background:#2c3826;"></div>
<div class="t" style="left:1010.75px;top:295.1px;width:45px;height:16px;line-height:16px;color:#86b040;font-size:10.5px;font-weight:700;text-align:center;">4</div>
<div style="left:1010.75px;top:311.8px;width:45px;height:16px;background:#2c3826;"></div>
<div class="t" style="left:1010.75px;top:312.3px;width:45px;height:16px;line-height:16px;color:#86b040;font-size:10.5px;font-weight:700;text-align:center;">3</div>
<div style="left:1010.75px;top:329px;width:45px;height:16px;background:#8cbd62;"></div>
<div class="t" style="left:1010.75px;top:329.5px;width:45px;height:16px;line-height:16px;color:#436129;font-size:10.5px;font-weight:700;text-align:center;">2</div>
<div style="left:1010.75px;top:346.2px;width:45px;height:16px;background:#2c3826;"></div>
<div class="t" style="left:1010.75px;top:346.7px;width:45px;height:16px;line-height:16px;color:#86b040;font-size:10.5px;font-weight:700;text-align:center;">1</div>
<div style="left:1009.95px;top:371.3px;width:46.8px;height:18.2px;background:#22380e;"></div>
<div style="left:1032.75px;top:372px;width:1px;height:3px;background:rgba(255,255,255,0.12);"></div>
<div style="left:1032.75px;top:386.5px;width:1px;height:3px;background:rgba(255,255,255,0.12);"></div>
<div class="t" style="left:1009.75px;top:372.8px;width:46.5px;height:17.5px;line-height:17.5px;color:#dde8ea;font-size:12px;font-weight:700;text-align:center;">0</div>
<div style="left:1010.75px;top:397px;width:45.5px;height:16px;background:#8cca55;"></div>
<svg style="left:1025.95px;top:397.6px;color:#1c300a;" width="15" height="14"><use href="#scl"/></svg>
<div style="left:1010.75px;top:421px;width:45.5px;height:16px;background:#8cca55;"></div>
<svg style="left:1026.75px;top:422px;color:#1c300a;" width="13.5" height="13.5"><use href="#pwr"/></svg>
<div style="left:1010.25px;top:445.5px;width:46px;height:16.2px;background:#22380e;"></div>
<svg style="left:1025.25px;top:447px;color:#6a9a30;" width="16" height="14"><use href="#slur"/></svg>
<div style="left:1010.75px;top:469.4px;width:45.6px;height:49px;background:#2c3826;"></div>
<div style="left:1010.75px;top:480.5px;width:45.6px;height:1px;background:rgba(0,0,0,0.16);"></div>
<div style="left:1010.75px;top:509.5px;width:45.6px;height:1px;background:rgba(0,0,0,0.16);"></div>
<div style="left:1010.75px;top:490.3px;width:45.6px;height:11px;background:rgba(0,0,0,0.35);"></div>
<div style="left:1010.75px;top:491.3px;width:45.6px;height:8.7px;background:#8cc060;"></div>
<div style="left:1010.75px;top:541px;width:45.7px;height:44.2px;border-radius:3px 3px 0 0;background:#6a9838"></div>
<div style="left:1010.75px;top:617.8px;width:45.7px;height:28.2px;border-radius:3px 3px 0 0;background:#6a9838"></div>
<div style="left:1010.75px;top:651.7px;width:45.7px;height:55.5px;border-radius:3px 3px 0 0;background:#6a9838"></div>
<div style="left:1010.75px;top:747px;width:45.6px;height:1.2px;background:#4a6a1c;"></div>
<div style="left:1009.25px;top:751.7px;width:47px;height:15.5px;background:#4a6a1c;border:1px solid #141414"></div>
<div style="left:1050.75px;top:761.2px;width:0;height:0;border-left:5px solid transparent;border-bottom:5px solid #141414"></div>
<svg style="left:1025.75px;top:754.2px;color:#a0d860;" width="15.5" height="10.5"><use href="#arr"/></svg>
<div style="left:1010.75px;top:828.5px;width:45.6px;height:1.5px;background:#4a6a1c;"></div>
<div style="left:1010.25px;top:835px;width:46.5px;height:17px;background:#2c3e12;"></div>
<svg style="left:1027.75px;top:837px;color:#6a9a30;" width="12" height="14"><use href="#lock"/></svg>
<div style="left:1061.4px;top:260.3px;width:45px;height:16px;background:#2c3826;"></div>
<div class="t" style="left:1061.4px;top:260.8px;width:45px;height:16px;line-height:16px;color:#86b040;font-size:10px;font-weight:700;text-align:center;">All</div>
<div style="left:1061.4px;top:277.4px;width:45px;height:16px;background:#2c3826;"></div>
<div class="t" style="left:1061.4px;top:277.9px;width:45px;height:16px;line-height:16px;color:#86b040;font-size:10.5px;font-weight:700;text-align:center;">?</div>
<div style="left:1061.4px;top:294.6px;width:45px;height:16px;background:#2c3826;"></div>
<div class="t" style="left:1061.4px;top:295.1px;width:45px;height:16px;line-height:16px;color:#86b040;font-size:10.5px;font-weight:700;text-align:center;">4</div>
<div style="left:1061.4px;top:311.8px;width:45px;height:16px;background:#8cbd62;"></div>
<div class="t" style="left:1061.4px;top:312.3px;width:45px;height:16px;line-height:16px;color:#436129;font-size:10.5px;font-weight:700;text-align:center;">3</div>
<div style="left:1061.4px;top:329px;width:45px;height:16px;background:#2c3826;"></div>
<div class="t" style="left:1061.4px;top:329.5px;width:45px;height:16px;line-height:16px;color:#86b040;font-size:10.5px;font-weight:700;text-align:center;">2</div>
<div style="left:1061.4px;top:346.2px;width:45px;height:16px;background:#2c3826;"></div>
<div class="t" style="left:1061.4px;top:346.7px;width:45px;height:16px;line-height:16px;color:#86b040;font-size:10.5px;font-weight:700;text-align:center;">1</div>
<div style="left:1060.6px;top:371.3px;width:46.8px;height:18.2px;background:#22380e;"></div>
<div style="left:1083.4px;top:372px;width:1px;height:3px;background:rgba(255,255,255,0.12);"></div>
<div style="left:1083.4px;top:386.5px;width:1px;height:3px;background:rgba(255,255,255,0.12);"></div>
<div class="t" style="left:1060.4px;top:372.8px;width:46.5px;height:17.5px;line-height:17.5px;color:#dde8ea;font-size:12px;font-weight:700;text-align:center;">0</div>
<div style="left:1061.4px;top:397px;width:45.5px;height:16px;background:#8cca55;"></div>
<svg style="left:1076.6px;top:397.6px;color:#1c300a;" width="15" height="14"><use href="#scl"/></svg>
<div style="left:1061.4px;top:421px;width:45.5px;height:16px;background:#8cca55;"></div>
<svg style="left:1077.4px;top:422px;color:#1c300a;" width="13.5" height="13.5"><use href="#pwr"/></svg>
<div style="left:1060.9px;top:445.5px;width:46px;height:16.2px;background:#22380e;"></div>
<svg style="left:1075.9px;top:447px;color:#6a9a30;" width="16" height="14"><use href="#slur"/></svg>
<div style="left:1061.4px;top:469.4px;width:45.6px;height:49px;background:#2c3826;"></div>
<div style="left:1061.4px;top:480.5px;width:45.6px;height:1px;background:rgba(0,0,0,0.16);"></div>
<div style="left:1061.4px;top:509.5px;width:45.6px;height:1px;background:rgba(0,0,0,0.16);"></div>
<div style="left:1061.4px;top:490.3px;width:45.6px;height:11px;background:rgba(0,0,0,0.35);"></div>
<div style="left:1061.4px;top:491.3px;width:45.6px;height:8.7px;background:#8cc060;"></div>
<div style="left:1061.4px;top:541px;width:45.7px;height:44.2px;border-radius:3px 3px 0 0;background:#6a9838"></div>
<div style="left:1061.4px;top:617.8px;width:45.7px;height:28.2px;border-radius:3px 3px 0 0;background:#6a9838"></div>
<div style="left:1061.4px;top:651.7px;width:45.7px;height:55.5px;border-radius:3px 3px 0 0;background:#6a9838"></div>
<div style="left:1061.4px;top:747px;width:45.6px;height:1.2px;background:#4a6a1c;"></div>
<div style="left:1059.9px;top:751.7px;width:47px;height:15.5px;background:#4a6a1c;border:1px solid #141414"></div>
<div style="left:1101.4px;top:761.2px;width:0;height:0;border-left:5px solid transparent;border-bottom:5px solid #141414"></div>
<svg style="left:1076.4px;top:754.2px;color:#a0d860;" width="15.5" height="10.5"><use href="#arr"/></svg>
<div style="left:1061.4px;top:828.5px;width:45.6px;height:1.5px;background:#4a6a1c;"></div>
<div style="left:1060.9px;top:835px;width:46.5px;height:17px;background:#2c3e12;"></div>
<svg style="left:1078.4px;top:837px;color:#6a9a30;" width="12" height="14"><use href="#lock"/></svg>
<div style="left:1112.05px;top:260.3px;width:45px;height:16px;background:#2c3826;"></div>
<div class="t" style="left:1112.05px;top:260.8px;width:45px;height:16px;line-height:16px;color:#86b040;font-size:10px;font-weight:700;text-align:center;">All</div>
<div style="left:1112.05px;top:277.4px;width:45px;height:16px;background:#2c3826;"></div>
<div class="t" style="left:1112.05px;top:277.9px;width:45px;height:16px;line-height:16px;color:#86b040;font-size:10.5px;font-weight:700;text-align:center;">?</div>
<div style="left:1112.05px;top:294.6px;width:45px;height:16px;background:#8cbd62;"></div>
<div class="t" style="left:1112.05px;top:295.1px;width:45px;height:16px;line-height:16px;color:#436129;font-size:10.5px;font-weight:700;text-align:center;">4</div>
<div style="left:1112.05px;top:311.8px;width:45px;height:16px;background:#2c3826;"></div>
<div class="t" style="left:1112.05px;top:312.3px;width:45px;height:16px;line-height:16px;color:#86b040;font-size:10.5px;font-weight:700;text-align:center;">3</div>
<div style="left:1112.05px;top:329px;width:45px;height:16px;background:#2c3826;"></div>
<div class="t" style="left:1112.05px;top:329.5px;width:45px;height:16px;line-height:16px;color:#86b040;font-size:10.5px;font-weight:700;text-align:center;">2</div>
<div style="left:1112.05px;top:346.2px;width:45px;height:16px;background:#2c3826;"></div>
<div class="t" style="left:1112.05px;top:346.7px;width:45px;height:16px;line-height:16px;color:#86b040;font-size:10.5px;font-weight:700;text-align:center;">1</div>
<div style="left:1111.25px;top:371.3px;width:46.8px;height:18.2px;background:#22380e;"></div>
<div style="left:1134.05px;top:372px;width:1px;height:3px;background:rgba(255,255,255,0.12);"></div>
<div style="left:1134.05px;top:386.5px;width:1px;height:3px;background:rgba(255,255,255,0.12);"></div>
<div class="t" style="left:1111.05px;top:372.8px;width:46.5px;height:17.5px;line-height:17.5px;color:#dde8ea;font-size:12px;font-weight:700;text-align:center;">0</div>
<div style="left:1112.05px;top:397px;width:45.5px;height:16px;background:#8cca55;"></div>
<svg style="left:1127.25px;top:397.6px;color:#1c300a;" width="15" height="14"><use href="#scl"/></svg>
<div style="left:1112.05px;top:421px;width:45.5px;height:16px;background:#8cca55;"></div>
<svg style="left:1128.05px;top:422px;color:#1c300a;" width="13.5" height="13.5"><use href="#pwr"/></svg>
<div style="left:1111.55px;top:445.5px;width:46px;height:16.2px;background:#22380e;"></div>
<svg style="left:1126.55px;top:447px;color:#6a9a30;" width="16" height="14"><use href="#slur"/></svg>
<div style="left:1112.05px;top:469.4px;width:45.6px;height:49px;background:#2c3826;"></div>
<div style="left:1112.05px;top:480.5px;width:45.6px;height:1px;background:rgba(0,0,0,0.16);"></div>
<div style="left:1112.05px;top:509.5px;width:45.6px;height:1px;background:rgba(0,0,0,0.16);"></div>
<div style="left:1112.05px;top:490.3px;width:45.6px;height:11px;background:rgba(0,0,0,0.35);"></div>
<div style="left:1112.05px;top:491.3px;width:45.6px;height:8.7px;background:#8cc060;"></div>
<div style="left:1112.0500000000002px;top:541px;width:45.7px;height:44.2px;border-radius:3px 3px 0 0;background:#6a9838"></div>
<div style="left:1112.0500000000002px;top:617.8px;width:45.7px;height:28.2px;border-radius:3px 3px 0 0;background:#6a9838"></div>
<div style="left:1112.0500000000002px;top:651.7px;width:45.7px;height:55.5px;border-radius:3px 3px 0 0;background:#6a9838"></div>
<div style="left:1112.05px;top:747px;width:45.6px;height:1.2px;background:#4a6a1c;"></div>
<div style="left:1110.5500000000002px;top:751.7px;width:47px;height:15.5px;background:#4a6a1c;border:1px solid #141414"></div>
<div style="left:1152.0500000000002px;top:761.2px;width:0;height:0;border-left:5px solid transparent;border-bottom:5px solid #141414"></div>
<svg style="left:1127.05px;top:754.2px;color:#a0d860;" width="15.5" height="10.5"><use href="#arr"/></svg>
<div style="left:1112.05px;top:828.5px;width:45.6px;height:1.5px;background:#4a6a1c;"></div>
<div style="left:1111.55px;top:835px;width:46.5px;height:17px;background:#2c3e12;"></div>
<svg style="left:1129.05px;top:837px;color:#6a9a30;" width="12" height="14"><use href="#lock"/></svg>
<div style="left:1165px;top:184.5px;width:210px;height:1px;background:#222222;"></div>
<div style="left:1165px;top:250px;width:210px;height:1px;background:#1e1e1e;"></div>
<div style="left:1164.5px;top:230px;width:1.2px;height:20px;background:#262626;"></div>
<div style="left:1169.6px;top:192px;width:23px;height:23.6px;border-radius:2.5px;background:#2c2c2c"></div>
<svg style="left:1173.6px;top:198.5px;color:#d8c070;" width="15" height="11"><use href="#ham2"/></svg>
<div style="left:1200.4px;top:192px;width:19.6px;height:23.7px;background:#f2d258;"></div>
<svg style="left:1205.9px;top:198px;color:#3a3008;" width="8.6" height="12"><use href="#chevR"/></svg>
<div style="left:1220.95px;top:192px;width:19.6px;height:23.7px;background:#433a0c;"></div>
<svg style="left:1226.45px;top:198px;color:#a89030;" width="8.6" height="12"><use href="#chevL"/></svg>
<div style="left:1241.5px;top:192px;width:19.6px;height:23.7px;background:#433a0c;"></div>
<svg style="left:1243.5px;top:196px;color:#a89030;" width="16" height="16"><use href="#rptR"/></svg>
<div style="left:1262.05px;top:192px;width:19.6px;height:23.7px;background:#433a0c;"></div>
<svg style="left:1264.05px;top:196px;color:#a89030;" width="16" height="16"><use href="#rptL"/></svg>
<div style="left:1282.6px;top:192px;width:19.6px;height:23.7px;background:#433a0c;"></div>
<div class="t" style="left:1282.6px;top:192.5px;width:19.6px;height:23px;line-height:23px;color:#a89030;font-size:14px;font-weight:700;text-align:center;">?</div>
<div style="left:1303.15px;top:192px;width:19.6px;height:23.7px;background:#433a0c;"></div>
<div class="t" style="left:1303.15px;top:192.5px;width:19.6px;height:23px;line-height:23px;color:#a89030;font-size:12.5px;font-weight:700;text-align:center;letter-spacing:-0.3px">??</div>
<div style="left:1327.6px;top:192px;width:4px;height:4px;border-left:1.5px solid #3a3a3a;border-top:1.5px solid #3a3a3a"></div>
<div style="left:1327.6px;top:212px;width:4px;height:4px;border-left:1.5px solid #3a3a3a;border-bottom:1.5px solid #3a3a3a"></div>
<div style="left:1367.6px;top:192px;width:4px;height:4px;border-right:1.5px solid #3a3a3a;border-top:1.5px solid #3a3a3a"></div>
<div style="left:1367.6px;top:212px;width:4px;height:4px;border-right:1.5px solid #3a3a3a;border-bottom:1.5px solid #3a3a3a"></div>
<div class="t" style="left:1327.6px;top:192px;width:44px;height:24px;line-height:24px;color:#f0e4b4;font-size:12px;font-weight:700;text-align:center;">Size 4</div>
<div style="left:1169.6px;top:222px;width:24px;height:24.7px;border-radius:2.5px;background:#2e2e2e"></div>
<div class="t" style="left:1169.6px;top:223px;width:24px;height:24.7px;line-height:24.7px;color:#f2d258;font-size:17.5px;font-weight:700;text-align:center;">5</div>
<div style="left:1199.6px;top:222.5px;width:18.6px;height:24.2px;background:#f2d258;"></div>
<div class="t" style="left:1199.6px;top:222.5px;width:18.6px;height:24.2px;line-height:24.2px;color:#3a3008;font-size:15px;font-weight:400;text-align:center;">A</div>
<div style="left:1219.15px;top:222.5px;width:18.6px;height:24.2px;background:#433a0c;"></div>
<div class="t" style="left:1219.15px;top:222.5px;width:18.6px;height:24.2px;line-height:24.2px;color:#a89030;font-size:15px;font-weight:400;text-align:center;">B</div>
<div style="left:1238.7px;top:222.5px;width:18.6px;height:24.2px;background:#433a0c;"></div>
<div class="t" style="left:1238.7px;top:222.5px;width:18.6px;height:24.2px;line-height:24.2px;color:#a89030;font-size:15px;font-weight:400;text-align:center;">C</div>
<div style="left:1258.25px;top:222.5px;width:18.6px;height:24.2px;background:#433a0c;"></div>
<div class="t" style="left:1258.25px;top:222.5px;width:18.6px;height:24.2px;line-height:24.2px;color:#a89030;font-size:15px;font-weight:400;text-align:center;">D</div>
<div style="left:1277.8px;top:222.5px;width:18.6px;height:24.2px;background:#433a0c;"></div>
<div class="t" style="left:1277.8px;top:222.5px;width:18.6px;height:24.2px;line-height:24.2px;color:#a89030;font-size:15px;font-weight:400;text-align:center;">E</div>
<div style="left:1297.35px;top:222.5px;width:18.6px;height:24.2px;background:#433a0c;"></div>
<div class="t" style="left:1297.35px;top:222.5px;width:18.6px;height:24.2px;line-height:24.2px;color:#a89030;font-size:15px;font-weight:400;text-align:center;">F</div>
<div style="left:1316.9px;top:222.5px;width:18.6px;height:24.2px;background:#433a0c;"></div>
<div class="t" style="left:1316.9px;top:222.5px;width:18.6px;height:24.2px;line-height:24.2px;color:#a89030;font-size:15px;font-weight:400;text-align:center;">G</div>
<div style="left:1336.45px;top:222.5px;width:18.6px;height:24.2px;background:#433a0c;"></div>
<div class="t" style="left:1336.45px;top:222.5px;width:18.6px;height:24.2px;line-height:24.2px;color:#a89030;font-size:15px;font-weight:400;text-align:center;">H</div>
<div style="left:1165.5px;top:255.5px;width:210px;height:111.5px;background:#29292b;"></div>
<div style="left:1165.5px;top:369px;width:210px;height:23px;background:#29292b;"></div>
<div style="left:1165.5px;top:393.5px;width:210px;height:22.5px;background:#29292b;"></div>
<div style="left:1165.5px;top:418px;width:210px;height:22px;background:#29292b;"></div>
<div style="left:1165.5px;top:442px;width:210px;height:22px;background:#29292b;"></div>
<div style="left:1165.5px;top:466.7px;width:210px;height:58.9px;background:#29292b;"></div>
<div style="left:1165.5px;top:527.2px;width:210px;height:58.8px;background:#29292b;"></div>
<div style="left:1165.5px;top:588.3px;width:210px;height:58.4px;background:#29292b;"></div>
<div style="left:1165.5px;top:649.4px;width:210px;height:58.1px;background:#29292b;"></div>
<div style="left:1165.5px;top:710px;width:210px;height:59px;background:#29292b;"></div>
<div style="left:1165.5px;top:771px;width:210px;height:59px;background:#29292b;"></div>
<div style="left:1165.5px;top:832px;width:210px;height:23px;background:#29292b;"></div>
<div style="left:1172px;top:260.3px;width:45px;height:16px;background:#383426;"></div>
<div class="t" style="left:1172px;top:260.8px;width:45px;height:16px;line-height:16px;color:#cdb040;font-size:10px;font-weight:700;text-align:center;">All</div>
<div style="left:1172px;top:277.4px;width:45px;height:16px;background:#383426;"></div>
<div class="t" style="left:1172px;top:277.9px;width:45px;height:16px;line-height:16px;color:#cdb040;font-size:10.5px;font-weight:700;text-align:center;">?</div>
<div style="left:1172px;top:294.6px;width:45px;height:16px;background:#383426;"></div>
<div class="t" style="left:1172px;top:295.1px;width:45px;height:16px;line-height:16px;color:#cdb040;font-size:10.5px;font-weight:700;text-align:center;">4</div>
<div style="left:1172px;top:311.8px;width:45px;height:16px;background:#383426;"></div>
<div class="t" style="left:1172px;top:312.3px;width:45px;height:16px;line-height:16px;color:#cdb040;font-size:10.5px;font-weight:700;text-align:center;">3</div>
<div style="left:1172px;top:329px;width:45px;height:16px;background:#383426;"></div>
<div class="t" style="left:1172px;top:329.5px;width:45px;height:16px;line-height:16px;color:#cdb040;font-size:10.5px;font-weight:700;text-align:center;">2</div>
<div style="left:1172px;top:346.2px;width:45px;height:16px;background:#dcc46c;"></div>
<div class="t" style="left:1172px;top:346.7px;width:45px;height:16px;line-height:16px;color:#73642b;font-size:10.5px;font-weight:700;text-align:center;">1</div>
<div style="left:1171.2px;top:371.3px;width:46.8px;height:18.2px;background:#433a0c;"></div>
<div style="left:1194px;top:372px;width:1px;height:3px;background:rgba(255,255,255,0.12);"></div>
<div style="left:1194px;top:386.5px;width:1px;height:3px;background:rgba(255,255,255,0.12);"></div>
<div class="t" style="left:1171px;top:372.8px;width:46.5px;height:17.5px;line-height:17.5px;color:#dde8ea;font-size:12px;font-weight:700;text-align:center;">0</div>
<div style="left:1172px;top:397px;width:45.5px;height:16px;background:#f2d258;"></div>
<svg style="left:1187.2px;top:397.6px;color:#3a3008;" width="15" height="14"><use href="#scl"/></svg>
<div style="left:1172px;top:421px;width:45.5px;height:16px;background:#f2d258;"></div>
<svg style="left:1188px;top:422px;color:#3a3008;" width="13.5" height="13.5"><use href="#pwr"/></svg>
<div style="left:1171.5px;top:445.5px;width:46px;height:16.2px;background:#433a0c;"></div>
<svg style="left:1186.5px;top:447px;color:#a89030;" width="16" height="14"><use href="#slur"/></svg>
<div style="left:1172px;top:469.4px;width:45.6px;height:49px;background:#383426;"></div>
<div style="left:1172px;top:480.5px;width:45.6px;height:1px;background:rgba(0,0,0,0.16);"></div>
<div style="left:1172px;top:509.5px;width:45.6px;height:1px;background:rgba(0,0,0,0.16);"></div>
<div style="left:1172px;top:490.3px;width:45.6px;height:11px;background:rgba(0,0,0,0.35);"></div>
<div style="left:1172px;top:491.3px;width:45.6px;height:8.7px;background:#e0c860;"></div>
<div style="left:1172.0px;top:541px;width:45.7px;height:44.2px;border-radius:3px 3px 0 0;background:#b9a23c"></div>
<div style="left:1172.0px;top:617.8px;width:45.7px;height:28.2px;border-radius:3px 3px 0 0;background:#b9a23c"></div>
<div style="left:1172.0px;top:651.7px;width:45.7px;height:55.5px;border-radius:3px 3px 0 0;background:#b9a23c"></div>
<div style="left:1172px;top:747px;width:45.6px;height:1.2px;background:#6a5a14;"></div>
<div style="left:1170.5px;top:751.7px;width:47px;height:15.5px;background:#6a5a14;border:1px solid #141414"></div>
<div style="left:1212.0px;top:761.2px;width:0;height:0;border-left:5px solid transparent;border-bottom:5px solid #141414"></div>
<svg style="left:1187px;top:754.2px;color:#f2d258;" width="15.5" height="10.5"><use href="#arr"/></svg>
<div style="left:1172px;top:828.5px;width:45.6px;height:1.5px;background:#6a5a14;"></div>
<div style="left:1171.5px;top:835px;width:46.5px;height:17px;background:#3e360c;"></div>
<svg style="left:1189px;top:837px;color:#a89030;" width="12" height="14"><use href="#lock"/></svg>
<div style="left:1222.65px;top:260.3px;width:45px;height:16px;background:#383426;"></div>
<div class="t" style="left:1222.65px;top:260.8px;width:45px;height:16px;line-height:16px;color:#cdb040;font-size:10px;font-weight:700;text-align:center;">All</div>
<div style="left:1222.65px;top:277.4px;width:45px;height:16px;background:#383426;"></div>
<div class="t" style="left:1222.65px;top:277.9px;width:45px;height:16px;line-height:16px;color:#cdb040;font-size:10.5px;font-weight:700;text-align:center;">?</div>
<div style="left:1222.65px;top:294.6px;width:45px;height:16px;background:#383426;"></div>
<div class="t" style="left:1222.65px;top:295.1px;width:45px;height:16px;line-height:16px;color:#cdb040;font-size:10.5px;font-weight:700;text-align:center;">4</div>
<div style="left:1222.65px;top:311.8px;width:45px;height:16px;background:#383426;"></div>
<div class="t" style="left:1222.65px;top:312.3px;width:45px;height:16px;line-height:16px;color:#cdb040;font-size:10.5px;font-weight:700;text-align:center;">3</div>
<div style="left:1222.65px;top:329px;width:45px;height:16px;background:#dcc46c;"></div>
<div class="t" style="left:1222.65px;top:329.5px;width:45px;height:16px;line-height:16px;color:#73642b;font-size:10.5px;font-weight:700;text-align:center;">2</div>
<div style="left:1222.65px;top:346.2px;width:45px;height:16px;background:#383426;"></div>
<div class="t" style="left:1222.65px;top:346.7px;width:45px;height:16px;line-height:16px;color:#cdb040;font-size:10.5px;font-weight:700;text-align:center;">1</div>
<div style="left:1221.85px;top:371.3px;width:46.8px;height:18.2px;background:#433a0c;"></div>
<div style="left:1244.65px;top:372px;width:1px;height:3px;background:rgba(255,255,255,0.12);"></div>
<div style="left:1244.65px;top:386.5px;width:1px;height:3px;background:rgba(255,255,255,0.12);"></div>
<div class="t" style="left:1221.65px;top:372.8px;width:46.5px;height:17.5px;line-height:17.5px;color:#dde8ea;font-size:12px;font-weight:700;text-align:center;">0</div>
<div style="left:1222.65px;top:397px;width:45.5px;height:16px;background:#f2d258;"></div>
<svg style="left:1237.85px;top:397.6px;color:#3a3008;" width="15" height="14"><use href="#scl"/></svg>
<div style="left:1222.65px;top:421px;width:45.5px;height:16px;background:#f2d258;"></div>
<svg style="left:1238.65px;top:422px;color:#3a3008;" width="13.5" height="13.5"><use href="#pwr"/></svg>
<div style="left:1222.15px;top:445.5px;width:46px;height:16.2px;background:#433a0c;"></div>
<svg style="left:1237.15px;top:447px;color:#a89030;" width="16" height="14"><use href="#slur"/></svg>
<div style="left:1222.65px;top:469.4px;width:45.6px;height:49px;background:#383426;"></div>
<div style="left:1222.65px;top:480.5px;width:45.6px;height:1px;background:rgba(0,0,0,0.16);"></div>
<div style="left:1222.65px;top:509.5px;width:45.6px;height:1px;background:rgba(0,0,0,0.16);"></div>
<div style="left:1222.65px;top:490.3px;width:45.6px;height:11px;background:rgba(0,0,0,0.35);"></div>
<div style="left:1222.65px;top:491.3px;width:45.6px;height:8.7px;background:#e0c860;"></div>
<div style="left:1222.65px;top:541px;width:45.7px;height:44.2px;border-radius:3px 3px 0 0;background:#b9a23c"></div>
<div style="left:1222.65px;top:617.8px;width:45.7px;height:28.2px;border-radius:3px 3px 0 0;background:#b9a23c"></div>
<div style="left:1222.65px;top:651.7px;width:45.7px;height:55.5px;border-radius:3px 3px 0 0;background:#b9a23c"></div>
<div style="left:1222.65px;top:747px;width:45.6px;height:1.2px;background:#6a5a14;"></div>
<div style="left:1221.15px;top:751.7px;width:47px;height:15.5px;background:#6a5a14;border:1px solid #141414"></div>
<div style="left:1262.65px;top:761.2px;width:0;height:0;border-left:5px solid transparent;border-bottom:5px solid #141414"></div>
<svg style="left:1237.65px;top:754.2px;color:#f2d258;" width="15.5" height="10.5"><use href="#arr"/></svg>
<div style="left:1222.65px;top:828.5px;width:45.6px;height:1.5px;background:#6a5a14;"></div>
<div style="left:1222.15px;top:835px;width:46.5px;height:17px;background:#3e360c;"></div>
<svg style="left:1239.65px;top:837px;color:#a89030;" width="12" height="14"><use href="#lock"/></svg>
<div style="left:1273.3px;top:260.3px;width:45px;height:16px;background:#383426;"></div>
<div class="t" style="left:1273.3px;top:260.8px;width:45px;height:16px;line-height:16px;color:#cdb040;font-size:10px;font-weight:700;text-align:center;">All</div>
<div style="left:1273.3px;top:277.4px;width:45px;height:16px;background:#383426;"></div>
<div class="t" style="left:1273.3px;top:277.9px;width:45px;height:16px;line-height:16px;color:#cdb040;font-size:10.5px;font-weight:700;text-align:center;">?</div>
<div style="left:1273.3px;top:294.6px;width:45px;height:16px;background:#383426;"></div>
<div class="t" style="left:1273.3px;top:295.1px;width:45px;height:16px;line-height:16px;color:#cdb040;font-size:10.5px;font-weight:700;text-align:center;">4</div>
<div style="left:1273.3px;top:311.8px;width:45px;height:16px;background:#dcc46c;"></div>
<div class="t" style="left:1273.3px;top:312.3px;width:45px;height:16px;line-height:16px;color:#73642b;font-size:10.5px;font-weight:700;text-align:center;">3</div>
<div style="left:1273.3px;top:329px;width:45px;height:16px;background:#383426;"></div>
<div class="t" style="left:1273.3px;top:329.5px;width:45px;height:16px;line-height:16px;color:#cdb040;font-size:10.5px;font-weight:700;text-align:center;">2</div>
<div style="left:1273.3px;top:346.2px;width:45px;height:16px;background:#383426;"></div>
<div class="t" style="left:1273.3px;top:346.7px;width:45px;height:16px;line-height:16px;color:#cdb040;font-size:10.5px;font-weight:700;text-align:center;">1</div>
<div style="left:1272.5px;top:371.3px;width:46.8px;height:18.2px;background:#433a0c;"></div>
<div style="left:1295.3px;top:372px;width:1px;height:3px;background:rgba(255,255,255,0.12);"></div>
<div style="left:1295.3px;top:386.5px;width:1px;height:3px;background:rgba(255,255,255,0.12);"></div>
<div class="t" style="left:1272.3px;top:372.8px;width:46.5px;height:17.5px;line-height:17.5px;color:#dde8ea;font-size:12px;font-weight:700;text-align:center;">0</div>
<div style="left:1273.3px;top:397px;width:45.5px;height:16px;background:#f2d258;"></div>
<svg style="left:1288.5px;top:397.6px;color:#3a3008;" width="15" height="14"><use href="#scl"/></svg>
<div style="left:1273.3px;top:421px;width:45.5px;height:16px;background:#f2d258;"></div>
<svg style="left:1289.3px;top:422px;color:#3a3008;" width="13.5" height="13.5"><use href="#pwr"/></svg>
<div style="left:1272.8px;top:445.5px;width:46px;height:16.2px;background:#433a0c;"></div>
<svg style="left:1287.8px;top:447px;color:#a89030;" width="16" height="14"><use href="#slur"/></svg>
<div style="left:1273.3px;top:469.4px;width:45.6px;height:49px;background:#383426;"></div>
<div style="left:1273.3px;top:480.5px;width:45.6px;height:1px;background:rgba(0,0,0,0.16);"></div>
<div style="left:1273.3px;top:509.5px;width:45.6px;height:1px;background:rgba(0,0,0,0.16);"></div>
<div style="left:1273.3px;top:490.3px;width:45.6px;height:11px;background:rgba(0,0,0,0.35);"></div>
<div style="left:1273.3px;top:491.3px;width:45.6px;height:8.7px;background:#e0c860;"></div>
<div style="left:1273.3px;top:541px;width:45.7px;height:44.2px;border-radius:3px 3px 0 0;background:#b9a23c"></div>
<div style="left:1273.3px;top:617.8px;width:45.7px;height:28.2px;border-radius:3px 3px 0 0;background:#b9a23c"></div>
<div style="left:1273.3px;top:651.7px;width:45.7px;height:55.5px;border-radius:3px 3px 0 0;background:#b9a23c"></div>
<div style="left:1273.3px;top:747px;width:45.6px;height:1.2px;background:#6a5a14;"></div>
<div style="left:1271.8px;top:751.7px;width:47px;height:15.5px;background:#6a5a14;border:1px solid #141414"></div>
<div style="left:1313.3px;top:761.2px;width:0;height:0;border-left:5px solid transparent;border-bottom:5px solid #141414"></div>
<svg style="left:1288.3px;top:754.2px;color:#f2d258;" width="15.5" height="10.5"><use href="#arr"/></svg>
<div style="left:1273.3px;top:828.5px;width:45.6px;height:1.5px;background:#6a5a14;"></div>
<div style="left:1272.8px;top:835px;width:46.5px;height:17px;background:#3e360c;"></div>
<svg style="left:1290.3px;top:837px;color:#a89030;" width="12" height="14"><use href="#lock"/></svg>
<div style="left:1323.95px;top:260.3px;width:45px;height:16px;background:#383426;"></div>
<div class="t" style="left:1323.95px;top:260.8px;width:45px;height:16px;line-height:16px;color:#cdb040;font-size:10px;font-weight:700;text-align:center;">All</div>
<div style="left:1323.95px;top:277.4px;width:45px;height:16px;background:#383426;"></div>
<div class="t" style="left:1323.95px;top:277.9px;width:45px;height:16px;line-height:16px;color:#cdb040;font-size:10.5px;font-weight:700;text-align:center;">?</div>
<div style="left:1323.95px;top:294.6px;width:45px;height:16px;background:#dcc46c;"></div>
<div class="t" style="left:1323.95px;top:295.1px;width:45px;height:16px;line-height:16px;color:#73642b;font-size:10.5px;font-weight:700;text-align:center;">4</div>
<div style="left:1323.95px;top:311.8px;width:45px;height:16px;background:#383426;"></div>
<div class="t" style="left:1323.95px;top:312.3px;width:45px;height:16px;line-height:16px;color:#cdb040;font-size:10.5px;font-weight:700;text-align:center;">3</div>
<div style="left:1323.95px;top:329px;width:45px;height:16px;background:#383426;"></div>
<div class="t" style="left:1323.95px;top:329.5px;width:45px;height:16px;line-height:16px;color:#cdb040;font-size:10.5px;font-weight:700;text-align:center;">2</div>
<div style="left:1323.95px;top:346.2px;width:45px;height:16px;background:#383426;"></div>
<div class="t" style="left:1323.95px;top:346.7px;width:45px;height:16px;line-height:16px;color:#cdb040;font-size:10.5px;font-weight:700;text-align:center;">1</div>
<div style="left:1323.15px;top:371.3px;width:46.8px;height:18.2px;background:#433a0c;"></div>
<div style="left:1345.95px;top:372px;width:1px;height:3px;background:rgba(255,255,255,0.12);"></div>
<div style="left:1345.95px;top:386.5px;width:1px;height:3px;background:rgba(255,255,255,0.12);"></div>
<div class="t" style="left:1322.95px;top:372.8px;width:46.5px;height:17.5px;line-height:17.5px;color:#dde8ea;font-size:12px;font-weight:700;text-align:center;">0</div>
<div style="left:1323.95px;top:397px;width:45.5px;height:16px;background:#f2d258;"></div>
<svg style="left:1339.15px;top:397.6px;color:#3a3008;" width="15" height="14"><use href="#scl"/></svg>
<div style="left:1323.95px;top:421px;width:45.5px;height:16px;background:#f2d258;"></div>
<svg style="left:1339.95px;top:422px;color:#3a3008;" width="13.5" height="13.5"><use href="#pwr"/></svg>
<div style="left:1323.45px;top:445.5px;width:46px;height:16.2px;background:#433a0c;"></div>
<svg style="left:1338.45px;top:447px;color:#a89030;" width="16" height="14"><use href="#slur"/></svg>
<div style="left:1323.95px;top:469.4px;width:45.6px;height:49px;background:#383426;"></div>
<div style="left:1323.95px;top:480.5px;width:45.6px;height:1px;background:rgba(0,0,0,0.16);"></div>
<div style="left:1323.95px;top:509.5px;width:45.6px;height:1px;background:rgba(0,0,0,0.16);"></div>
<div style="left:1323.95px;top:490.3px;width:45.6px;height:11px;background:rgba(0,0,0,0.35);"></div>
<div style="left:1323.95px;top:491.3px;width:45.6px;height:8.7px;background:#e0c860;"></div>
<div style="left:1323.95px;top:541px;width:45.7px;height:44.2px;border-radius:3px 3px 0 0;background:#b9a23c"></div>
<div style="left:1323.95px;top:617.8px;width:45.7px;height:28.2px;border-radius:3px 3px 0 0;background:#b9a23c"></div>
<div style="left:1323.95px;top:651.7px;width:45.7px;height:55.5px;border-radius:3px 3px 0 0;background:#b9a23c"></div>
<div style="left:1323.95px;top:747px;width:45.6px;height:1.2px;background:#6a5a14;"></div>
<div style="left:1322.45px;top:751.7px;width:47px;height:15.5px;background:#6a5a14;border:1px solid #141414"></div>
<div style="left:1363.95px;top:761.2px;width:0;height:0;border-left:5px solid transparent;border-bottom:5px solid #141414"></div>
<svg style="left:1338.95px;top:754.2px;color:#f2d258;" width="15.5" height="10.5"><use href="#arr"/></svg>
<div style="left:1323.95px;top:828.5px;width:45.6px;height:1.5px;background:#6a5a14;"></div>
<div style="left:1323.45px;top:835px;width:46.5px;height:17px;background:#3e360c;"></div>
<svg style="left:1340.95px;top:837px;color:#a89030;" width="12" height="14"><use href="#lock"/></svg>
<div style="left:1376.9px;top:184.5px;width:210px;height:1px;background:#222222;"></div>
<div style="left:1376.9px;top:250px;width:210px;height:1px;background:#1e1e1e;"></div>
<div style="left:1376.4px;top:230px;width:1.2px;height:20px;background:#262626;"></div>
<div style="left:1381.5px;top:192px;width:23px;height:23.6px;border-radius:2.5px;background:#2c2c2c"></div>
<svg style="left:1385.5px;top:198.5px;color:#e09a60;" width="15" height="11"><use href="#ham2"/></svg>
<div style="left:1412.3px;top:192px;width:19.6px;height:23.7px;background:#f29a42;"></div>
<svg style="left:1417.8px;top:198px;color:#3a2008;" width="8.6" height="12"><use href="#chevR"/></svg>
<div style="left:1432.85px;top:192px;width:19.6px;height:23.7px;background:#45280a;"></div>
<svg style="left:1438.35px;top:198px;color:#a86a28;" width="8.6" height="12"><use href="#chevL"/></svg>
<div style="left:1453.4px;top:192px;width:19.6px;height:23.7px;background:#45280a;"></div>
<svg style="left:1455.4px;top:196px;color:#a86a28;" width="16" height="16"><use href="#rptR"/></svg>
<div style="left:1473.95px;top:192px;width:19.6px;height:23.7px;background:#45280a;"></div>
<svg style="left:1475.95px;top:196px;color:#a86a28;" width="16" height="16"><use href="#rptL"/></svg>
<div style="left:1494.5px;top:192px;width:19.6px;height:23.7px;background:#45280a;"></div>
<div class="t" style="left:1494.5px;top:192.5px;width:19.6px;height:23px;line-height:23px;color:#a86a28;font-size:14px;font-weight:700;text-align:center;">?</div>
<div style="left:1515.05px;top:192px;width:19.6px;height:23.7px;background:#45280a;"></div>
<div class="t" style="left:1515.05px;top:192.5px;width:19.6px;height:23px;line-height:23px;color:#a86a28;font-size:12.5px;font-weight:700;text-align:center;letter-spacing:-0.3px">??</div>
<div style="left:1539.5px;top:192px;width:4px;height:4px;border-left:1.5px solid #3a3a3a;border-top:1.5px solid #3a3a3a"></div>
<div style="left:1539.5px;top:212px;width:4px;height:4px;border-left:1.5px solid #3a3a3a;border-bottom:1.5px solid #3a3a3a"></div>
<div style="left:1579.5px;top:192px;width:4px;height:4px;border-right:1.5px solid #3a3a3a;border-top:1.5px solid #3a3a3a"></div>
<div style="left:1579.5px;top:212px;width:4px;height:4px;border-right:1.5px solid #3a3a3a;border-bottom:1.5px solid #3a3a3a"></div>
<div class="t" style="left:1539.5px;top:192px;width:44px;height:24px;line-height:24px;color:#f2b274;font-size:12px;font-weight:700;text-align:center;">Size 4</div>
<div style="left:1381.5px;top:222px;width:24px;height:24.7px;border-radius:2.5px;background:#2e2e2e"></div>
<div class="t" style="left:1381.5px;top:223px;width:24px;height:24.7px;line-height:24.7px;color:#f29a42;font-size:17.5px;font-weight:700;text-align:center;">6</div>
<div style="left:1411.5px;top:222.5px;width:18.6px;height:24.2px;background:#f29a42;"></div>
<div class="t" style="left:1411.5px;top:222.5px;width:18.6px;height:24.2px;line-height:24.2px;color:#3a2008;font-size:15px;font-weight:400;text-align:center;">A</div>
<div style="left:1431.05px;top:222.5px;width:18.6px;height:24.2px;background:#45280a;"></div>
<div class="t" style="left:1431.05px;top:222.5px;width:18.6px;height:24.2px;line-height:24.2px;color:#a86a28;font-size:15px;font-weight:400;text-align:center;">B</div>
<div style="left:1450.6px;top:222.5px;width:18.6px;height:24.2px;background:#45280a;"></div>
<div class="t" style="left:1450.6px;top:222.5px;width:18.6px;height:24.2px;line-height:24.2px;color:#a86a28;font-size:15px;font-weight:400;text-align:center;">C</div>
<div style="left:1470.15px;top:222.5px;width:18.6px;height:24.2px;background:#45280a;"></div>
<div class="t" style="left:1470.15px;top:222.5px;width:18.6px;height:24.2px;line-height:24.2px;color:#a86a28;font-size:15px;font-weight:400;text-align:center;">D</div>
<div style="left:1489.7px;top:222.5px;width:18.6px;height:24.2px;background:#45280a;"></div>
<div class="t" style="left:1489.7px;top:222.5px;width:18.6px;height:24.2px;line-height:24.2px;color:#a86a28;font-size:15px;font-weight:400;text-align:center;">E</div>
<div style="left:1509.25px;top:222.5px;width:18.6px;height:24.2px;background:#45280a;"></div>
<div class="t" style="left:1509.25px;top:222.5px;width:18.6px;height:24.2px;line-height:24.2px;color:#a86a28;font-size:15px;font-weight:400;text-align:center;">F</div>
<div style="left:1528.8px;top:222.5px;width:18.6px;height:24.2px;background:#45280a;"></div>
<div class="t" style="left:1528.8px;top:222.5px;width:18.6px;height:24.2px;line-height:24.2px;color:#a86a28;font-size:15px;font-weight:400;text-align:center;">G</div>
<div style="left:1548.35px;top:222.5px;width:18.6px;height:24.2px;background:#45280a;"></div>
<div class="t" style="left:1548.35px;top:222.5px;width:18.6px;height:24.2px;line-height:24.2px;color:#a86a28;font-size:15px;font-weight:400;text-align:center;">H</div>
<div style="left:1377.4px;top:255.5px;width:210px;height:111.5px;background:#29292b;"></div>
<div style="left:1377.4px;top:369px;width:210px;height:23px;background:#29292b;"></div>
<div style="left:1377.4px;top:393.5px;width:210px;height:22.5px;background:#29292b;"></div>
<div style="left:1377.4px;top:418px;width:210px;height:22px;background:#29292b;"></div>
<div style="left:1377.4px;top:442px;width:210px;height:22px;background:#29292b;"></div>
<div style="left:1377.4px;top:466.7px;width:210px;height:58.9px;background:#29292b;"></div>
<div style="left:1377.4px;top:527.2px;width:210px;height:58.8px;background:#29292b;"></div>
<div style="left:1377.4px;top:588.3px;width:210px;height:58.4px;background:#29292b;"></div>
<div style="left:1377.4px;top:649.4px;width:210px;height:58.1px;background:#29292b;"></div>
<div style="left:1377.4px;top:710px;width:210px;height:59px;background:#29292b;"></div>
<div style="left:1377.4px;top:771px;width:210px;height:59px;background:#29292b;"></div>
<div style="left:1377.4px;top:832px;width:210px;height:23px;background:#29292b;"></div>
<div style="left:1383.9px;top:260.3px;width:45px;height:16px;background:#392e25;"></div>
<div class="t" style="left:1383.9px;top:260.8px;width:45px;height:16px;line-height:16px;color:#cf8232;font-size:10px;font-weight:700;text-align:center;">All</div>
<div style="left:1383.9px;top:277.4px;width:45px;height:16px;background:#392e25;"></div>
<div class="t" style="left:1383.9px;top:277.9px;width:45px;height:16px;line-height:16px;color:#cf8232;font-size:10.5px;font-weight:700;text-align:center;">?</div>
<div style="left:1383.9px;top:294.6px;width:45px;height:16px;background:#392e25;"></div>
<div class="t" style="left:1383.9px;top:295.1px;width:45px;height:16px;line-height:16px;color:#cf8232;font-size:10.5px;font-weight:700;text-align:center;">4</div>
<div style="left:1383.9px;top:311.8px;width:45px;height:16px;background:#392e25;"></div>
<div class="t" style="left:1383.9px;top:312.3px;width:45px;height:16px;line-height:16px;color:#cf8232;font-size:10.5px;font-weight:700;text-align:center;">3</div>
<div style="left:1383.9px;top:329px;width:45px;height:16px;background:#392e25;"></div>
<div class="t" style="left:1383.9px;top:329.5px;width:45px;height:16px;line-height:16px;color:#cf8232;font-size:10.5px;font-weight:700;text-align:center;">2</div>
<div style="left:1383.9px;top:346.2px;width:45px;height:16px;background:#dca060;"></div>
<div class="t" style="left:1383.9px;top:346.7px;width:45px;height:16px;line-height:16px;color:#734d27;font-size:10.5px;font-weight:700;text-align:center;">1</div>
<div style="left:1383.1px;top:371.3px;width:46.8px;height:18.2px;background:#45280a;"></div>
<div style="left:1405.9px;top:372px;width:1px;height:3px;background:rgba(255,255,255,0.12);"></div>
<div style="left:1405.9px;top:386.5px;width:1px;height:3px;background:rgba(255,255,255,0.12);"></div>
<div class="t" style="left:1382.9px;top:372.8px;width:46.5px;height:17.5px;line-height:17.5px;color:#dde8ea;font-size:12px;font-weight:700;text-align:center;">0</div>
<div style="left:1383.9px;top:397px;width:45.5px;height:16px;background:#f29a42;"></div>
<svg style="left:1399.1px;top:397.6px;color:#3a2008;" width="15" height="14"><use href="#scl"/></svg>
<div style="left:1383.9px;top:421px;width:45.5px;height:16px;background:#f29a42;"></div>
<svg style="left:1399.9px;top:422px;color:#3a2008;" width="13.5" height="13.5"><use href="#pwr"/></svg>
<div style="left:1383.4px;top:445.5px;width:46px;height:16.2px;background:#45280a;"></div>
<svg style="left:1398.4px;top:447px;color:#a86a28;" width="16" height="14"><use href="#slur"/></svg>
<div style="left:1383.9px;top:469.4px;width:45.6px;height:49px;background:#392e25;"></div>
<div style="left:1383.9px;top:480.5px;width:45.6px;height:1px;background:rgba(0,0,0,0.16);"></div>
<div style="left:1383.9px;top:509.5px;width:45.6px;height:1px;background:rgba(0,0,0,0.16);"></div>
<div style="left:1383.9px;top:490.3px;width:45.6px;height:11px;background:rgba(0,0,0,0.35);"></div>
<div style="left:1383.9px;top:491.3px;width:45.6px;height:8.7px;background:#e0a060;"></div>
<div style="left:1383.9px;top:541px;width:45.7px;height:44.2px;border-radius:3px 3px 0 0;background:#b87232"></div>
<div style="left:1383.9px;top:617.8px;width:45.7px;height:28.2px;border-radius:3px 3px 0 0;background:#b87232"></div>
<div style="left:1383.9px;top:651.7px;width:45.7px;height:55.5px;border-radius:3px 3px 0 0;background:#b87232"></div>
<div style="left:1383.9px;top:747px;width:45.6px;height:1.2px;background:#5c3412;"></div>
<div style="left:1382.4px;top:751.7px;width:47px;height:15.5px;background:#5c3412;border:1px solid #141414"></div>
<div style="left:1423.9px;top:761.2px;width:0;height:0;border-left:5px solid transparent;border-bottom:5px solid #141414"></div>
<svg style="left:1398.9px;top:754.2px;color:#f2a050;" width="15.5" height="10.5"><use href="#arr"/></svg>
<div style="left:1383.9px;top:828.5px;width:45.6px;height:1.5px;background:#5c3412;"></div>
<div style="left:1383.4px;top:835px;width:46.5px;height:17px;background:#3e260a;"></div>
<svg style="left:1400.9px;top:837px;color:#a86a28;" width="12" height="14"><use href="#lock"/></svg>
<div style="left:1434.55px;top:260.3px;width:45px;height:16px;background:#392e25;"></div>
<div class="t" style="left:1434.55px;top:260.8px;width:45px;height:16px;line-height:16px;color:#cf8232;font-size:10px;font-weight:700;text-align:center;">All</div>
<div style="left:1434.55px;top:277.4px;width:45px;height:16px;background:#392e25;"></div>
<div class="t" style="left:1434.55px;top:277.9px;width:45px;height:16px;line-height:16px;color:#cf8232;font-size:10.5px;font-weight:700;text-align:center;">?</div>
<div style="left:1434.55px;top:294.6px;width:45px;height:16px;background:#392e25;"></div>
<div class="t" style="left:1434.55px;top:295.1px;width:45px;height:16px;line-height:16px;color:#cf8232;font-size:10.5px;font-weight:700;text-align:center;">4</div>
<div style="left:1434.55px;top:311.8px;width:45px;height:16px;background:#392e25;"></div>
<div class="t" style="left:1434.55px;top:312.3px;width:45px;height:16px;line-height:16px;color:#cf8232;font-size:10.5px;font-weight:700;text-align:center;">3</div>
<div style="left:1434.55px;top:329px;width:45px;height:16px;background:#dca060;"></div>
<div class="t" style="left:1434.55px;top:329.5px;width:45px;height:16px;line-height:16px;color:#734d27;font-size:10.5px;font-weight:700;text-align:center;">2</div>
<div style="left:1434.55px;top:346.2px;width:45px;height:16px;background:#392e25;"></div>
<div class="t" style="left:1434.55px;top:346.7px;width:45px;height:16px;line-height:16px;color:#cf8232;font-size:10.5px;font-weight:700;text-align:center;">1</div>
<div style="left:1433.75px;top:371.3px;width:46.8px;height:18.2px;background:#45280a;"></div>
<div style="left:1456.55px;top:372px;width:1px;height:3px;background:rgba(255,255,255,0.12);"></div>
<div style="left:1456.55px;top:386.5px;width:1px;height:3px;background:rgba(255,255,255,0.12);"></div>
<div class="t" style="left:1433.55px;top:372.8px;width:46.5px;height:17.5px;line-height:17.5px;color:#dde8ea;font-size:12px;font-weight:700;text-align:center;">0</div>
<div style="left:1434.55px;top:397px;width:45.5px;height:16px;background:#f29a42;"></div>
<svg style="left:1449.75px;top:397.6px;color:#3a2008;" width="15" height="14"><use href="#scl"/></svg>
<div style="left:1434.55px;top:421px;width:45.5px;height:16px;background:#f29a42;"></div>
<svg style="left:1450.55px;top:422px;color:#3a2008;" width="13.5" height="13.5"><use href="#pwr"/></svg>
<div style="left:1434.05px;top:445.5px;width:46px;height:16.2px;background:#45280a;"></div>
<svg style="left:1449.05px;top:447px;color:#a86a28;" width="16" height="14"><use href="#slur"/></svg>
<div style="left:1434.55px;top:469.4px;width:45.6px;height:49px;background:#392e25;"></div>
<div style="left:1434.55px;top:480.5px;width:45.6px;height:1px;background:rgba(0,0,0,0.16);"></div>
<div style="left:1434.55px;top:509.5px;width:45.6px;height:1px;background:rgba(0,0,0,0.16);"></div>
<div style="left:1434.55px;top:490.3px;width:45.6px;height:11px;background:rgba(0,0,0,0.35);"></div>
<div style="left:1434.55px;top:491.3px;width:45.6px;height:8.7px;background:#e0a060;"></div>
<div style="left:1434.55px;top:541px;width:45.7px;height:44.2px;border-radius:3px 3px 0 0;background:#b87232"></div>
<div style="left:1434.55px;top:617.8px;width:45.7px;height:28.2px;border-radius:3px 3px 0 0;background:#b87232"></div>
<div style="left:1434.55px;top:651.7px;width:45.7px;height:55.5px;border-radius:3px 3px 0 0;background:#b87232"></div>
<div style="left:1434.55px;top:747px;width:45.6px;height:1.2px;background:#5c3412;"></div>
<div style="left:1433.05px;top:751.7px;width:47px;height:15.5px;background:#5c3412;border:1px solid #141414"></div>
<div style="left:1474.55px;top:761.2px;width:0;height:0;border-left:5px solid transparent;border-bottom:5px solid #141414"></div>
<svg style="left:1449.55px;top:754.2px;color:#f2a050;" width="15.5" height="10.5"><use href="#arr"/></svg>
<div style="left:1434.55px;top:828.5px;width:45.6px;height:1.5px;background:#5c3412;"></div>
<div style="left:1434.05px;top:835px;width:46.5px;height:17px;background:#3e260a;"></div>
<svg style="left:1451.55px;top:837px;color:#a86a28;" width="12" height="14"><use href="#lock"/></svg>
<div style="left:1485.2px;top:260.3px;width:45px;height:16px;background:#392e25;"></div>
<div class="t" style="left:1485.2px;top:260.8px;width:45px;height:16px;line-height:16px;color:#cf8232;font-size:10px;font-weight:700;text-align:center;">All</div>
<div style="left:1485.2px;top:277.4px;width:45px;height:16px;background:#392e25;"></div>
<div class="t" style="left:1485.2px;top:277.9px;width:45px;height:16px;line-height:16px;color:#cf8232;font-size:10.5px;font-weight:700;text-align:center;">?</div>
<div style="left:1485.2px;top:294.6px;width:45px;height:16px;background:#392e25;"></div>
<div class="t" style="left:1485.2px;top:295.1px;width:45px;height:16px;line-height:16px;color:#cf8232;font-size:10.5px;font-weight:700;text-align:center;">4</div>
<div style="left:1485.2px;top:311.8px;width:45px;height:16px;background:#dca060;"></div>
<div class="t" style="left:1485.2px;top:312.3px;width:45px;height:16px;line-height:16px;color:#734d27;font-size:10.5px;font-weight:700;text-align:center;">3</div>
<div style="left:1485.2px;top:329px;width:45px;height:16px;background:#392e25;"></div>
<div class="t" style="left:1485.2px;top:329.5px;width:45px;height:16px;line-height:16px;color:#cf8232;font-size:10.5px;font-weight:700;text-align:center;">2</div>
<div style="left:1485.2px;top:346.2px;width:45px;height:16px;background:#392e25;"></div>
<div class="t" style="left:1485.2px;top:346.7px;width:45px;height:16px;line-height:16px;color:#cf8232;font-size:10.5px;font-weight:700;text-align:center;">1</div>
<div style="left:1484.4px;top:371.3px;width:46.8px;height:18.2px;background:#45280a;"></div>
<div style="left:1507.2px;top:372px;width:1px;height:3px;background:rgba(255,255,255,0.12);"></div>
<div style="left:1507.2px;top:386.5px;width:1px;height:3px;background:rgba(255,255,255,0.12);"></div>
<div class="t" style="left:1484.2px;top:372.8px;width:46.5px;height:17.5px;line-height:17.5px;color:#dde8ea;font-size:12px;font-weight:700;text-align:center;">0</div>
<div style="left:1485.2px;top:397px;width:45.5px;height:16px;background:#f29a42;"></div>
<svg style="left:1500.4px;top:397.6px;color:#3a2008;" width="15" height="14"><use href="#scl"/></svg>
<div style="left:1485.2px;top:421px;width:45.5px;height:16px;background:#f29a42;"></div>
<svg style="left:1501.2px;top:422px;color:#3a2008;" width="13.5" height="13.5"><use href="#pwr"/></svg>
<div style="left:1484.7px;top:445.5px;width:46px;height:16.2px;background:#45280a;"></div>
<svg style="left:1499.7px;top:447px;color:#a86a28;" width="16" height="14"><use href="#slur"/></svg>
<div style="left:1485.2px;top:469.4px;width:45.6px;height:49px;background:#392e25;"></div>
<div style="left:1485.2px;top:480.5px;width:45.6px;height:1px;background:rgba(0,0,0,0.16);"></div>
<div style="left:1485.2px;top:509.5px;width:45.6px;height:1px;background:rgba(0,0,0,0.16);"></div>
<div style="left:1485.2px;top:490.3px;width:45.6px;height:11px;background:rgba(0,0,0,0.35);"></div>
<div style="left:1485.2px;top:491.3px;width:45.6px;height:8.7px;background:#e0a060;"></div>
<div style="left:1485.2px;top:541px;width:45.7px;height:44.2px;border-radius:3px 3px 0 0;background:#b87232"></div>
<div style="left:1485.2px;top:617.8px;width:45.7px;height:28.2px;border-radius:3px 3px 0 0;background:#b87232"></div>
<div style="left:1485.2px;top:651.7px;width:45.7px;height:55.5px;border-radius:3px 3px 0 0;background:#b87232"></div>
<div style="left:1485.2px;top:747px;width:45.6px;height:1.2px;background:#5c3412;"></div>
<div style="left:1483.7px;top:751.7px;width:47px;height:15.5px;background:#5c3412;border:1px solid #141414"></div>
<div style="left:1525.2px;top:761.2px;width:0;height:0;border-left:5px solid transparent;border-bottom:5px solid #141414"></div>
<svg style="left:1500.2px;top:754.2px;color:#f2a050;" width="15.5" height="10.5"><use href="#arr"/></svg>
<div style="left:1485.2px;top:828.5px;width:45.6px;height:1.5px;background:#5c3412;"></div>
<div style="left:1484.7px;top:835px;width:46.5px;height:17px;background:#3e260a;"></div>
<svg style="left:1502.2px;top:837px;color:#a86a28;" width="12" height="14"><use href="#lock"/></svg>
<div style="left:1535.85px;top:260.3px;width:45px;height:16px;background:#392e25;"></div>
<div class="t" style="left:1535.85px;top:260.8px;width:45px;height:16px;line-height:16px;color:#cf8232;font-size:10px;font-weight:700;text-align:center;">All</div>
<div style="left:1535.85px;top:277.4px;width:45px;height:16px;background:#392e25;"></div>
<div class="t" style="left:1535.85px;top:277.9px;width:45px;height:16px;line-height:16px;color:#cf8232;font-size:10.5px;font-weight:700;text-align:center;">?</div>
<div style="left:1535.85px;top:294.6px;width:45px;height:16px;background:#dca060;"></div>
<div class="t" style="left:1535.85px;top:295.1px;width:45px;height:16px;line-height:16px;color:#734d27;font-size:10.5px;font-weight:700;text-align:center;">4</div>
<div style="left:1535.85px;top:311.8px;width:45px;height:16px;background:#392e25;"></div>
<div class="t" style="left:1535.85px;top:312.3px;width:45px;height:16px;line-height:16px;color:#cf8232;font-size:10.5px;font-weight:700;text-align:center;">3</div>
<div style="left:1535.85px;top:329px;width:45px;height:16px;background:#392e25;"></div>
<div class="t" style="left:1535.85px;top:329.5px;width:45px;height:16px;line-height:16px;color:#cf8232;font-size:10.5px;font-weight:700;text-align:center;">2</div>
<div style="left:1535.85px;top:346.2px;width:45px;height:16px;background:#392e25;"></div>
<div class="t" style="left:1535.85px;top:346.7px;width:45px;height:16px;line-height:16px;color:#cf8232;font-size:10.5px;font-weight:700;text-align:center;">1</div>
<div style="left:1535.05px;top:371.3px;width:46.8px;height:18.2px;background:#45280a;"></div>
<div style="left:1557.85px;top:372px;width:1px;height:3px;background:rgba(255,255,255,0.12);"></div>
<div style="left:1557.85px;top:386.5px;width:1px;height:3px;background:rgba(255,255,255,0.12);"></div>
<div class="t" style="left:1534.85px;top:372.8px;width:46.5px;height:17.5px;line-height:17.5px;color:#dde8ea;font-size:12px;font-weight:700;text-align:center;">0</div>
<div style="left:1535.85px;top:397px;width:45.5px;height:16px;background:#f29a42;"></div>
<svg style="left:1551.05px;top:397.6px;color:#3a2008;" width="15" height="14"><use href="#scl"/></svg>
<div style="left:1535.85px;top:421px;width:45.5px;height:16px;background:#f29a42;"></div>
<svg style="left:1551.85px;top:422px;color:#3a2008;" width="13.5" height="13.5"><use href="#pwr"/></svg>
<div style="left:1535.35px;top:445.5px;width:46px;height:16.2px;background:#45280a;"></div>
<svg style="left:1550.35px;top:447px;color:#a86a28;" width="16" height="14"><use href="#slur"/></svg>
<div style="left:1535.85px;top:469.4px;width:45.6px;height:49px;background:#392e25;"></div>
<div style="left:1535.85px;top:480.5px;width:45.6px;height:1px;background:rgba(0,0,0,0.16);"></div>
<div style="left:1535.85px;top:509.5px;width:45.6px;height:1px;background:rgba(0,0,0,0.16);"></div>
<div style="left:1535.85px;top:490.3px;width:45.6px;height:11px;background:rgba(0,0,0,0.35);"></div>
<div style="left:1535.85px;top:491.3px;width:45.6px;height:8.7px;background:#e0a060;"></div>
<div style="left:1535.85px;top:541px;width:45.7px;height:44.2px;border-radius:3px 3px 0 0;background:#b87232"></div>
<div style="left:1535.85px;top:617.8px;width:45.7px;height:28.2px;border-radius:3px 3px 0 0;background:#b87232"></div>
<div style="left:1535.85px;top:651.7px;width:45.7px;height:55.5px;border-radius:3px 3px 0 0;background:#b87232"></div>
<div style="left:1535.85px;top:747px;width:45.6px;height:1.2px;background:#5c3412;"></div>
<div style="left:1534.35px;top:751.7px;width:47px;height:15.5px;background:#5c3412;border:1px solid #141414"></div>
<div style="left:1575.85px;top:761.2px;width:0;height:0;border-left:5px solid transparent;border-bottom:5px solid #141414"></div>
<svg style="left:1550.85px;top:754.2px;color:#f2a050;" width="15.5" height="10.5"><use href="#arr"/></svg>
<div style="left:1535.85px;top:828.5px;width:45.6px;height:1.5px;background:#5c3412;"></div>
<div style="left:1535.35px;top:835px;width:46.5px;height:17px;background:#3e260a;"></div>
<svg style="left:1552.85px;top:837px;color:#a86a28;" width="12" height="14"><use href="#lock"/></svg>
<div style="left:1588.8px;top:184.5px;width:210px;height:1px;background:#222222;"></div>
<div style="left:1588.8px;top:250px;width:210px;height:1px;background:#1e1e1e;"></div>
<div style="left:1588.3px;top:230px;width:1.2px;height:20px;background:#262626;"></div>
<div style="left:1593.4px;top:192px;width:23px;height:23.6px;border-radius:2.5px;background:#2c2c2c"></div>
<svg style="left:1597.4px;top:198.5px;color:#d070a8;" width="15" height="11"><use href="#ham2"/></svg>
<div style="left:1624.2px;top:192px;width:19.6px;height:23.7px;background:#ee80bc;"></div>
<svg style="left:1629.7px;top:198px;color:#3a1028;" width="8.6" height="12"><use href="#chevR"/></svg>
<div style="left:1644.75px;top:192px;width:19.6px;height:23.7px;background:#3e1a30;"></div>
<svg style="left:1650.25px;top:198px;color:#a04a80;" width="8.6" height="12"><use href="#chevL"/></svg>
<div style="left:1665.3px;top:192px;width:19.6px;height:23.7px;background:#3e1a30;"></div>
<svg style="left:1667.3px;top:196px;color:#a04a80;" width="16" height="16"><use href="#rptR"/></svg>
<div style="left:1685.85px;top:192px;width:19.6px;height:23.7px;background:#3e1a30;"></div>
<svg style="left:1687.85px;top:196px;color:#a04a80;" width="16" height="16"><use href="#rptL"/></svg>
<div style="left:1706.4px;top:192px;width:19.6px;height:23.7px;background:#3e1a30;"></div>
<div class="t" style="left:1706.4px;top:192.5px;width:19.6px;height:23px;line-height:23px;color:#a04a80;font-size:14px;font-weight:700;text-align:center;">?</div>
<div style="left:1726.95px;top:192px;width:19.6px;height:23.7px;background:#3e1a30;"></div>
<div class="t" style="left:1726.95px;top:192.5px;width:19.6px;height:23px;line-height:23px;color:#a04a80;font-size:12.5px;font-weight:700;text-align:center;letter-spacing:-0.3px">??</div>
<div style="left:1751.4px;top:192px;width:4px;height:4px;border-left:1.5px solid #3a3a3a;border-top:1.5px solid #3a3a3a"></div>
<div style="left:1751.4px;top:212px;width:4px;height:4px;border-left:1.5px solid #3a3a3a;border-bottom:1.5px solid #3a3a3a"></div>
<div style="left:1791.4px;top:192px;width:4px;height:4px;border-right:1.5px solid #3a3a3a;border-top:1.5px solid #3a3a3a"></div>
<div style="left:1791.4px;top:212px;width:4px;height:4px;border-right:1.5px solid #3a3a3a;border-bottom:1.5px solid #3a3a3a"></div>
<div class="t" style="left:1751.4px;top:192px;width:44px;height:24px;line-height:24px;color:#f0a8d4;font-size:12px;font-weight:700;text-align:center;">Size 4</div>
<div style="left:1593.4px;top:222px;width:24px;height:24.7px;border-radius:2.5px;background:#2e2e2e"></div>
<div class="t" style="left:1593.4px;top:223px;width:24px;height:24.7px;line-height:24.7px;color:#ee80bc;font-size:17.5px;font-weight:700;text-align:center;">7</div>
<div style="left:1623.4px;top:222.5px;width:18.6px;height:24.2px;background:#ee80bc;"></div>
<div class="t" style="left:1623.4px;top:222.5px;width:18.6px;height:24.2px;line-height:24.2px;color:#3a1028;font-size:15px;font-weight:400;text-align:center;">A</div>
<div style="left:1642.95px;top:222.5px;width:18.6px;height:24.2px;background:#3e1a30;"></div>
<div class="t" style="left:1642.95px;top:222.5px;width:18.6px;height:24.2px;line-height:24.2px;color:#a04a80;font-size:15px;font-weight:400;text-align:center;">B</div>
<div style="left:1662.5px;top:222.5px;width:18.6px;height:24.2px;background:#3e1a30;"></div>
<div class="t" style="left:1662.5px;top:222.5px;width:18.6px;height:24.2px;line-height:24.2px;color:#a04a80;font-size:15px;font-weight:400;text-align:center;">C</div>
<div style="left:1682.05px;top:222.5px;width:18.6px;height:24.2px;background:#3e1a30;"></div>
<div class="t" style="left:1682.05px;top:222.5px;width:18.6px;height:24.2px;line-height:24.2px;color:#a04a80;font-size:15px;font-weight:400;text-align:center;">D</div>
<div style="left:1701.6px;top:222.5px;width:18.6px;height:24.2px;background:#3e1a30;"></div>
<div class="t" style="left:1701.6px;top:222.5px;width:18.6px;height:24.2px;line-height:24.2px;color:#a04a80;font-size:15px;font-weight:400;text-align:center;">E</div>
<div style="left:1721.15px;top:222.5px;width:18.6px;height:24.2px;background:#3e1a30;"></div>
<div class="t" style="left:1721.15px;top:222.5px;width:18.6px;height:24.2px;line-height:24.2px;color:#a04a80;font-size:15px;font-weight:400;text-align:center;">F</div>
<div style="left:1740.7px;top:222.5px;width:18.6px;height:24.2px;background:#3e1a30;"></div>
<div class="t" style="left:1740.7px;top:222.5px;width:18.6px;height:24.2px;line-height:24.2px;color:#a04a80;font-size:15px;font-weight:400;text-align:center;">G</div>
<div style="left:1760.25px;top:222.5px;width:18.6px;height:24.2px;background:#3e1a30;"></div>
<div class="t" style="left:1760.25px;top:222.5px;width:18.6px;height:24.2px;line-height:24.2px;color:#a04a80;font-size:15px;font-weight:400;text-align:center;">H</div>
<div style="left:1589.3px;top:255.5px;width:210px;height:111.5px;background:#29292b;"></div>
<div style="left:1589.3px;top:369px;width:210px;height:23px;background:#29292b;"></div>
<div style="left:1589.3px;top:393.5px;width:210px;height:22.5px;background:#29292b;"></div>
<div style="left:1589.3px;top:418px;width:210px;height:22px;background:#29292b;"></div>
<div style="left:1589.3px;top:442px;width:210px;height:22px;background:#29292b;"></div>
<div style="left:1589.3px;top:466.7px;width:210px;height:58.9px;background:#29292b;"></div>
<div style="left:1589.3px;top:527.2px;width:210px;height:58.8px;background:#29292b;"></div>
<div style="left:1589.3px;top:588.3px;width:210px;height:58.4px;background:#29292b;"></div>
<div style="left:1589.3px;top:649.4px;width:210px;height:58.1px;background:#29292b;"></div>
<div style="left:1589.3px;top:710px;width:210px;height:59px;background:#29292b;"></div>
<div style="left:1589.3px;top:771px;width:210px;height:59px;background:#29292b;"></div>
<div style="left:1589.3px;top:832px;width:210px;height:23px;background:#29292b;"></div>
<div style="left:1595.8px;top:260.3px;width:45px;height:16px;background:#382a32;"></div>
<div class="t" style="left:1595.8px;top:260.8px;width:45px;height:16px;line-height:16px;color:#b8609a;font-size:10px;font-weight:700;text-align:center;">All</div>
<div style="left:1595.8px;top:277.4px;width:45px;height:16px;background:#382a32;"></div>
<div class="t" style="left:1595.8px;top:277.9px;width:45px;height:16px;line-height:16px;color:#b8609a;font-size:10.5px;font-weight:700;text-align:center;">?</div>
<div style="left:1595.8px;top:294.6px;width:45px;height:16px;background:#382a32;"></div>
<div class="t" style="left:1595.8px;top:295.1px;width:45px;height:16px;line-height:16px;color:#b8609a;font-size:10.5px;font-weight:700;text-align:center;">4</div>
<div style="left:1595.8px;top:311.8px;width:45px;height:16px;background:#382a32;"></div>
<div class="t" style="left:1595.8px;top:312.3px;width:45px;height:16px;line-height:16px;color:#b8609a;font-size:10.5px;font-weight:700;text-align:center;">3</div>
<div style="left:1595.8px;top:329px;width:45px;height:16px;background:#382a32;"></div>
<div class="t" style="left:1595.8px;top:329.5px;width:45px;height:16px;line-height:16px;color:#b8609a;font-size:10.5px;font-weight:700;text-align:center;">2</div>
<div style="left:1595.8px;top:346.2px;width:45px;height:16px;background:#dc88bc;"></div>
<div class="t" style="left:1595.8px;top:346.7px;width:45px;height:16px;line-height:16px;color:#733a5c;font-size:10.5px;font-weight:700;text-align:center;">1</div>
<div style="left:1595px;top:371.3px;width:46.8px;height:18.2px;background:#3e1a30;"></div>
<div style="left:1617.8px;top:372px;width:1px;height:3px;background:rgba(255,255,255,0.12);"></div>
<div style="left:1617.8px;top:386.5px;width:1px;height:3px;background:rgba(255,255,255,0.12);"></div>
<div class="t" style="left:1594.8px;top:372.8px;width:46.5px;height:17.5px;line-height:17.5px;color:#dde8ea;font-size:12px;font-weight:700;text-align:center;">0</div>
<div style="left:1595.8px;top:397px;width:45.5px;height:16px;background:#ee80bc;"></div>
<svg style="left:1611px;top:397.6px;color:#3a1028;" width="15" height="14"><use href="#scl"/></svg>
<div style="left:1595.8px;top:421px;width:45.5px;height:16px;background:#ee80bc;"></div>
<svg style="left:1611.8px;top:422px;color:#3a1028;" width="13.5" height="13.5"><use href="#pwr"/></svg>
<div style="left:1595.3px;top:445.5px;width:46px;height:16.2px;background:#3e1a30;"></div>
<svg style="left:1610.3px;top:447px;color:#a04a80;" width="16" height="14"><use href="#slur"/></svg>
<div style="left:1595.8px;top:469.4px;width:45.6px;height:49px;background:#382a32;"></div>
<div style="left:1595.8px;top:480.5px;width:45.6px;height:1px;background:rgba(0,0,0,0.16);"></div>
<div style="left:1595.8px;top:509.5px;width:45.6px;height:1px;background:rgba(0,0,0,0.16);"></div>
<div style="left:1595.8px;top:490.3px;width:45.6px;height:11px;background:rgba(0,0,0,0.35);"></div>
<div style="left:1595.8px;top:491.3px;width:45.6px;height:8.7px;background:#d888b8;"></div>
<div style="left:1595.8000000000002px;top:541px;width:45.7px;height:44.2px;border-radius:3px 3px 0 0;background:#b05a88"></div>
<div style="left:1595.8000000000002px;top:617.8px;width:45.7px;height:28.2px;border-radius:3px 3px 0 0;background:#b05a88"></div>
<div style="left:1595.8000000000002px;top:651.7px;width:45.7px;height:55.5px;border-radius:3px 3px 0 0;background:#b05a88"></div>
<div style="left:1595.8px;top:747px;width:45.6px;height:1.2px;background:#5c2848;"></div>
<div style="left:1594.3000000000002px;top:751.7px;width:47px;height:15.5px;background:#5c2848;border:1px solid #141414"></div>
<div style="left:1635.8000000000002px;top:761.2px;width:0;height:0;border-left:5px solid transparent;border-bottom:5px solid #141414"></div>
<svg style="left:1610.8px;top:754.2px;color:#f090c8;" width="15.5" height="10.5"><use href="#arr"/></svg>
<div style="left:1595.8px;top:828.5px;width:45.6px;height:1.5px;background:#5c2848;"></div>
<div style="left:1595.3px;top:835px;width:46.5px;height:17px;background:#4a1e38;"></div>
<svg style="left:1612.8px;top:837px;color:#a04a80;" width="12" height="14"><use href="#lock"/></svg>
<div style="left:1646.45px;top:260.3px;width:45px;height:16px;background:#382a32;"></div>
<div class="t" style="left:1646.45px;top:260.8px;width:45px;height:16px;line-height:16px;color:#b8609a;font-size:10px;font-weight:700;text-align:center;">All</div>
<div style="left:1646.45px;top:277.4px;width:45px;height:16px;background:#382a32;"></div>
<div class="t" style="left:1646.45px;top:277.9px;width:45px;height:16px;line-height:16px;color:#b8609a;font-size:10.5px;font-weight:700;text-align:center;">?</div>
<div style="left:1646.45px;top:294.6px;width:45px;height:16px;background:#382a32;"></div>
<div class="t" style="left:1646.45px;top:295.1px;width:45px;height:16px;line-height:16px;color:#b8609a;font-size:10.5px;font-weight:700;text-align:center;">4</div>
<div style="left:1646.45px;top:311.8px;width:45px;height:16px;background:#382a32;"></div>
<div class="t" style="left:1646.45px;top:312.3px;width:45px;height:16px;line-height:16px;color:#b8609a;font-size:10.5px;font-weight:700;text-align:center;">3</div>
<div style="left:1646.45px;top:329px;width:45px;height:16px;background:#dc88bc;"></div>
<div class="t" style="left:1646.45px;top:329.5px;width:45px;height:16px;line-height:16px;color:#733a5c;font-size:10.5px;font-weight:700;text-align:center;">2</div>
<div style="left:1646.45px;top:346.2px;width:45px;height:16px;background:#382a32;"></div>
<div class="t" style="left:1646.45px;top:346.7px;width:45px;height:16px;line-height:16px;color:#b8609a;font-size:10.5px;font-weight:700;text-align:center;">1</div>
<div style="left:1645.65px;top:371.3px;width:46.8px;height:18.2px;background:#3e1a30;"></div>
<div style="left:1668.45px;top:372px;width:1px;height:3px;background:rgba(255,255,255,0.12);"></div>
<div style="left:1668.45px;top:386.5px;width:1px;height:3px;background:rgba(255,255,255,0.12);"></div>
<div class="t" style="left:1645.45px;top:372.8px;width:46.5px;height:17.5px;line-height:17.5px;color:#dde8ea;font-size:12px;font-weight:700;text-align:center;">0</div>
<div style="left:1646.45px;top:397px;width:45.5px;height:16px;background:#ee80bc;"></div>
<svg style="left:1661.65px;top:397.6px;color:#3a1028;" width="15" height="14"><use href="#scl"/></svg>
<div style="left:1646.45px;top:421px;width:45.5px;height:16px;background:#ee80bc;"></div>
<svg style="left:1662.45px;top:422px;color:#3a1028;" width="13.5" height="13.5"><use href="#pwr"/></svg>
<div style="left:1645.95px;top:445.5px;width:46px;height:16.2px;background:#3e1a30;"></div>
<svg style="left:1660.95px;top:447px;color:#a04a80;" width="16" height="14"><use href="#slur"/></svg>
<div style="left:1646.45px;top:469.4px;width:45.6px;height:49px;background:#382a32;"></div>
<div style="left:1646.45px;top:480.5px;width:45.6px;height:1px;background:rgba(0,0,0,0.16);"></div>
<div style="left:1646.45px;top:509.5px;width:45.6px;height:1px;background:rgba(0,0,0,0.16);"></div>
<div style="left:1646.45px;top:490.3px;width:45.6px;height:11px;background:rgba(0,0,0,0.35);"></div>
<div style="left:1646.45px;top:491.3px;width:45.6px;height:8.7px;background:#d888b8;"></div>
<div style="left:1646.45px;top:541px;width:45.7px;height:44.2px;border-radius:3px 3px 0 0;background:#b05a88"></div>
<div style="left:1646.45px;top:617.8px;width:45.7px;height:28.2px;border-radius:3px 3px 0 0;background:#b05a88"></div>
<div style="left:1646.45px;top:651.7px;width:45.7px;height:55.5px;border-radius:3px 3px 0 0;background:#b05a88"></div>
<div style="left:1646.45px;top:747px;width:45.6px;height:1.2px;background:#5c2848;"></div>
<div style="left:1644.95px;top:751.7px;width:47px;height:15.5px;background:#5c2848;border:1px solid #141414"></div>
<div style="left:1686.45px;top:761.2px;width:0;height:0;border-left:5px solid transparent;border-bottom:5px solid #141414"></div>
<svg style="left:1661.45px;top:754.2px;color:#f090c8;" width="15.5" height="10.5"><use href="#arr"/></svg>
<div style="left:1646.45px;top:828.5px;width:45.6px;height:1.5px;background:#5c2848;"></div>
<div style="left:1645.95px;top:835px;width:46.5px;height:17px;background:#4a1e38;"></div>
<svg style="left:1663.45px;top:837px;color:#a04a80;" width="12" height="14"><use href="#lock"/></svg>
<div style="left:1697.1px;top:260.3px;width:45px;height:16px;background:#382a32;"></div>
<div class="t" style="left:1697.1px;top:260.8px;width:45px;height:16px;line-height:16px;color:#b8609a;font-size:10px;font-weight:700;text-align:center;">All</div>
<div style="left:1697.1px;top:277.4px;width:45px;height:16px;background:#382a32;"></div>
<div class="t" style="left:1697.1px;top:277.9px;width:45px;height:16px;line-height:16px;color:#b8609a;font-size:10.5px;font-weight:700;text-align:center;">?</div>
<div style="left:1697.1px;top:294.6px;width:45px;height:16px;background:#382a32;"></div>
<div class="t" style="left:1697.1px;top:295.1px;width:45px;height:16px;line-height:16px;color:#b8609a;font-size:10.5px;font-weight:700;text-align:center;">4</div>
<div style="left:1697.1px;top:311.8px;width:45px;height:16px;background:#dc88bc;"></div>
<div class="t" style="left:1697.1px;top:312.3px;width:45px;height:16px;line-height:16px;color:#733a5c;font-size:10.5px;font-weight:700;text-align:center;">3</div>
<div style="left:1697.1px;top:329px;width:45px;height:16px;background:#382a32;"></div>
<div class="t" style="left:1697.1px;top:329.5px;width:45px;height:16px;line-height:16px;color:#b8609a;font-size:10.5px;font-weight:700;text-align:center;">2</div>
<div style="left:1697.1px;top:346.2px;width:45px;height:16px;background:#382a32;"></div>
<div class="t" style="left:1697.1px;top:346.7px;width:45px;height:16px;line-height:16px;color:#b8609a;font-size:10.5px;font-weight:700;text-align:center;">1</div>
<div style="left:1696.3px;top:371.3px;width:46.8px;height:18.2px;background:#3e1a30;"></div>
<div style="left:1719.1px;top:372px;width:1px;height:3px;background:rgba(255,255,255,0.12);"></div>
<div style="left:1719.1px;top:386.5px;width:1px;height:3px;background:rgba(255,255,255,0.12);"></div>
<div class="t" style="left:1696.1px;top:372.8px;width:46.5px;height:17.5px;line-height:17.5px;color:#dde8ea;font-size:12px;font-weight:700;text-align:center;">0</div>
<div style="left:1697.1px;top:397px;width:45.5px;height:16px;background:#ee80bc;"></div>
<svg style="left:1712.3px;top:397.6px;color:#3a1028;" width="15" height="14"><use href="#scl"/></svg>
<div style="left:1697.1px;top:421px;width:45.5px;height:16px;background:#ee80bc;"></div>
<svg style="left:1713.1px;top:422px;color:#3a1028;" width="13.5" height="13.5"><use href="#pwr"/></svg>
<div style="left:1696.6px;top:445.5px;width:46px;height:16.2px;background:#3e1a30;"></div>
<svg style="left:1711.6px;top:447px;color:#a04a80;" width="16" height="14"><use href="#slur"/></svg>
<div style="left:1697.1px;top:469.4px;width:45.6px;height:49px;background:#382a32;"></div>
<div style="left:1697.1px;top:480.5px;width:45.6px;height:1px;background:rgba(0,0,0,0.16);"></div>
<div style="left:1697.1px;top:509.5px;width:45.6px;height:1px;background:rgba(0,0,0,0.16);"></div>
<div style="left:1697.1px;top:490.3px;width:45.6px;height:11px;background:rgba(0,0,0,0.35);"></div>
<div style="left:1697.1px;top:491.3px;width:45.6px;height:8.7px;background:#d888b8;"></div>
<div style="left:1697.1000000000001px;top:541px;width:45.7px;height:44.2px;border-radius:3px 3px 0 0;background:#b05a88"></div>
<div style="left:1697.1000000000001px;top:617.8px;width:45.7px;height:28.2px;border-radius:3px 3px 0 0;background:#b05a88"></div>
<div style="left:1697.1000000000001px;top:651.7px;width:45.7px;height:55.5px;border-radius:3px 3px 0 0;background:#b05a88"></div>
<div style="left:1697.1px;top:747px;width:45.6px;height:1.2px;background:#5c2848;"></div>
<div style="left:1695.6000000000001px;top:751.7px;width:47px;height:15.5px;background:#5c2848;border:1px solid #141414"></div>
<div style="left:1737.1000000000001px;top:761.2px;width:0;height:0;border-left:5px solid transparent;border-bottom:5px solid #141414"></div>
<svg style="left:1712.1px;top:754.2px;color:#f090c8;" width="15.5" height="10.5"><use href="#arr"/></svg>
<div style="left:1697.1px;top:828.5px;width:45.6px;height:1.5px;background:#5c2848;"></div>
<div style="left:1696.6px;top:835px;width:46.5px;height:17px;background:#4a1e38;"></div>
<svg style="left:1714.1px;top:837px;color:#a04a80;" width="12" height="14"><use href="#lock"/></svg>
<div style="left:1747.75px;top:260.3px;width:45px;height:16px;background:#382a32;"></div>
<div class="t" style="left:1747.75px;top:260.8px;width:45px;height:16px;line-height:16px;color:#b8609a;font-size:10px;font-weight:700;text-align:center;">All</div>
<div style="left:1747.75px;top:277.4px;width:45px;height:16px;background:#382a32;"></div>
<div class="t" style="left:1747.75px;top:277.9px;width:45px;height:16px;line-height:16px;color:#b8609a;font-size:10.5px;font-weight:700;text-align:center;">?</div>
<div style="left:1747.75px;top:294.6px;width:45px;height:16px;background:#dc88bc;"></div>
<div class="t" style="left:1747.75px;top:295.1px;width:45px;height:16px;line-height:16px;color:#733a5c;font-size:10.5px;font-weight:700;text-align:center;">4</div>
<div style="left:1747.75px;top:311.8px;width:45px;height:16px;background:#382a32;"></div>
<div class="t" style="left:1747.75px;top:312.3px;width:45px;height:16px;line-height:16px;color:#b8609a;font-size:10.5px;font-weight:700;text-align:center;">3</div>
<div style="left:1747.75px;top:329px;width:45px;height:16px;background:#382a32;"></div>
<div class="t" style="left:1747.75px;top:329.5px;width:45px;height:16px;line-height:16px;color:#b8609a;font-size:10.5px;font-weight:700;text-align:center;">2</div>
<div style="left:1747.75px;top:346.2px;width:45px;height:16px;background:#382a32;"></div>
<div class="t" style="left:1747.75px;top:346.7px;width:45px;height:16px;line-height:16px;color:#b8609a;font-size:10.5px;font-weight:700;text-align:center;">1</div>
<div style="left:1746.95px;top:371.3px;width:46.8px;height:18.2px;background:#3e1a30;"></div>
<div style="left:1769.75px;top:372px;width:1px;height:3px;background:rgba(255,255,255,0.12);"></div>
<div style="left:1769.75px;top:386.5px;width:1px;height:3px;background:rgba(255,255,255,0.12);"></div>
<div class="t" style="left:1746.75px;top:372.8px;width:46.5px;height:17.5px;line-height:17.5px;color:#dde8ea;font-size:12px;font-weight:700;text-align:center;">0</div>
<div style="left:1747.75px;top:397px;width:45.5px;height:16px;background:#ee80bc;"></div>
<svg style="left:1762.95px;top:397.6px;color:#3a1028;" width="15" height="14"><use href="#scl"/></svg>
<div style="left:1747.75px;top:421px;width:45.5px;height:16px;background:#ee80bc;"></div>
<svg style="left:1763.75px;top:422px;color:#3a1028;" width="13.5" height="13.5"><use href="#pwr"/></svg>
<div style="left:1747.25px;top:445.5px;width:46px;height:16.2px;background:#3e1a30;"></div>
<svg style="left:1762.25px;top:447px;color:#a04a80;" width="16" height="14"><use href="#slur"/></svg>
<div style="left:1747.75px;top:469.4px;width:45.6px;height:49px;background:#382a32;"></div>
<div style="left:1747.75px;top:480.5px;width:45.6px;height:1px;background:rgba(0,0,0,0.16);"></div>
<div style="left:1747.75px;top:509.5px;width:45.6px;height:1px;background:rgba(0,0,0,0.16);"></div>
<div style="left:1747.75px;top:490.3px;width:45.6px;height:11px;background:rgba(0,0,0,0.35);"></div>
<div style="left:1747.75px;top:491.3px;width:45.6px;height:8.7px;background:#d888b8;"></div>
<div style="left:1747.75px;top:541px;width:45.7px;height:44.2px;border-radius:3px 3px 0 0;background:#b05a88"></div>
<div style="left:1747.75px;top:617.8px;width:45.7px;height:28.2px;border-radius:3px 3px 0 0;background:#b05a88"></div>
<div style="left:1747.75px;top:651.7px;width:45.7px;height:55.5px;border-radius:3px 3px 0 0;background:#b05a88"></div>
<div style="left:1747.75px;top:747px;width:45.6px;height:1.2px;background:#5c2848;"></div>
<div style="left:1746.25px;top:751.7px;width:47px;height:15.5px;background:#5c2848;border:1px solid #141414"></div>
<div style="left:1787.75px;top:761.2px;width:0;height:0;border-left:5px solid transparent;border-bottom:5px solid #141414"></div>
<svg style="left:1762.75px;top:754.2px;color:#f090c8;" width="15.5" height="10.5"><use href="#arr"/></svg>
<div style="left:1747.75px;top:828.5px;width:45.6px;height:1.5px;background:#5c2848;"></div>
<div style="left:1747.25px;top:835px;width:46.5px;height:17px;background:#4a1e38;"></div>
<svg style="left:1764.75px;top:837px;color:#a04a80;" width="12" height="14"><use href="#lock"/></svg>
<div style="left:1800.7px;top:184.5px;width:210px;height:1px;background:#222222;"></div>
<div style="left:1800.7px;top:250px;width:210px;height:1px;background:#1e1e1e;"></div>
<div style="left:1800.2px;top:230px;width:1.2px;height:20px;background:#262626;"></div>
<div style="left:1805.3px;top:192px;width:23px;height:23.6px;border-radius:2.5px;background:#2c2c2c"></div>
<svg style="left:1809.3px;top:198.5px;color:#d85a5a;" width="15" height="11"><use href="#ham2"/></svg>
<div style="left:1836.1px;top:192px;width:19.6px;height:23.7px;background:#f06262;"></div>
<svg style="left:1841.6px;top:198px;color:#3a0c0c;" width="8.6" height="12"><use href="#chevR"/></svg>
<div style="left:1856.65px;top:192px;width:19.6px;height:23.7px;background:#401414;"></div>
<svg style="left:1862.15px;top:198px;color:#a03c3c;" width="8.6" height="12"><use href="#chevL"/></svg>
<div style="left:1877.2px;top:192px;width:19.6px;height:23.7px;background:#401414;"></div>
<svg style="left:1879.2px;top:196px;color:#a03c3c;" width="16" height="16"><use href="#rptR"/></svg>
<div style="left:1897.75px;top:192px;width:19.6px;height:23.7px;background:#401414;"></div>
<svg style="left:1899.75px;top:196px;color:#a03c3c;" width="16" height="16"><use href="#rptL"/></svg>
<div style="left:1918.3px;top:192px;width:19.6px;height:23.7px;background:#401414;"></div>
<div class="t" style="left:1918.3px;top:192.5px;width:19.6px;height:23px;line-height:23px;color:#a03c3c;font-size:14px;font-weight:700;text-align:center;">?</div>
<div style="left:1938.85px;top:192px;width:19.6px;height:23.7px;background:#401414;"></div>
<div class="t" style="left:1938.85px;top:192.5px;width:19.6px;height:23px;line-height:23px;color:#a03c3c;font-size:12.5px;font-weight:700;text-align:center;letter-spacing:-0.3px">??</div>
<div style="left:1963.3px;top:192px;width:4px;height:4px;border-left:1.5px solid #3a3a3a;border-top:1.5px solid #3a3a3a"></div>
<div style="left:1963.3px;top:212px;width:4px;height:4px;border-left:1.5px solid #3a3a3a;border-bottom:1.5px solid #3a3a3a"></div>
<div style="left:2003.3px;top:192px;width:4px;height:4px;border-right:1.5px solid #3a3a3a;border-top:1.5px solid #3a3a3a"></div>
<div style="left:2003.3px;top:212px;width:4px;height:4px;border-right:1.5px solid #3a3a3a;border-bottom:1.5px solid #3a3a3a"></div>
<div class="t" style="left:1963.3px;top:192px;width:44px;height:24px;line-height:24px;color:#f29a9a;font-size:12px;font-weight:700;text-align:center;">Size 4</div>
<div style="left:1805.3px;top:222px;width:24px;height:24.7px;border-radius:2.5px;background:#2e2e2e"></div>
<div class="t" style="left:1805.3px;top:223px;width:24px;height:24.7px;line-height:24.7px;color:#f06262;font-size:17.5px;font-weight:700;text-align:center;">8</div>
<div style="left:1835.3px;top:222.5px;width:18.6px;height:24.2px;background:#f06262;"></div>
<div class="t" style="left:1835.3px;top:222.5px;width:18.6px;height:24.2px;line-height:24.2px;color:#3a0c0c;font-size:15px;font-weight:400;text-align:center;">A</div>
<div style="left:1854.85px;top:222.5px;width:18.6px;height:24.2px;background:#401414;"></div>
<div class="t" style="left:1854.85px;top:222.5px;width:18.6px;height:24.2px;line-height:24.2px;color:#a03c3c;font-size:15px;font-weight:400;text-align:center;">B</div>
<div style="left:1874.4px;top:222.5px;width:18.6px;height:24.2px;background:#401414;"></div>
<div class="t" style="left:1874.4px;top:222.5px;width:18.6px;height:24.2px;line-height:24.2px;color:#a03c3c;font-size:15px;font-weight:400;text-align:center;">C</div>
<div style="left:1893.95px;top:222.5px;width:18.6px;height:24.2px;background:#401414;"></div>
<div class="t" style="left:1893.95px;top:222.5px;width:18.6px;height:24.2px;line-height:24.2px;color:#a03c3c;font-size:15px;font-weight:400;text-align:center;">D</div>
<div style="left:1913.5px;top:222.5px;width:18.6px;height:24.2px;background:#401414;"></div>
<div class="t" style="left:1913.5px;top:222.5px;width:18.6px;height:24.2px;line-height:24.2px;color:#a03c3c;font-size:15px;font-weight:400;text-align:center;">E</div>
<div style="left:1933.05px;top:222.5px;width:18.6px;height:24.2px;background:#401414;"></div>
<div class="t" style="left:1933.05px;top:222.5px;width:18.6px;height:24.2px;line-height:24.2px;color:#a03c3c;font-size:15px;font-weight:400;text-align:center;">F</div>
<div style="left:1952.6px;top:222.5px;width:18.6px;height:24.2px;background:#401414;"></div>
<div class="t" style="left:1952.6px;top:222.5px;width:18.6px;height:24.2px;line-height:24.2px;color:#a03c3c;font-size:15px;font-weight:400;text-align:center;">G</div>
<div style="left:1972.15px;top:222.5px;width:18.6px;height:24.2px;background:#401414;"></div>
<div class="t" style="left:1972.15px;top:222.5px;width:18.6px;height:24.2px;line-height:24.2px;color:#a03c3c;font-size:15px;font-weight:400;text-align:center;">H</div>
<div style="left:1801.2px;top:255.5px;width:210px;height:111.5px;background:#29292b;"></div>
<div style="left:1801.2px;top:369px;width:210px;height:23px;background:#29292b;"></div>
<div style="left:1801.2px;top:393.5px;width:210px;height:22.5px;background:#29292b;"></div>
<div style="left:1801.2px;top:418px;width:210px;height:22px;background:#29292b;"></div>
<div style="left:1801.2px;top:442px;width:210px;height:22px;background:#29292b;"></div>
<div style="left:1801.2px;top:466.7px;width:210px;height:58.9px;background:#29292b;"></div>
<div style="left:1801.2px;top:527.2px;width:210px;height:58.8px;background:#29292b;"></div>
<div style="left:1801.2px;top:588.3px;width:210px;height:58.4px;background:#29292b;"></div>
<div style="left:1801.2px;top:649.4px;width:210px;height:58.1px;background:#29292b;"></div>
<div style="left:1801.2px;top:710px;width:210px;height:59px;background:#29292b;"></div>
<div style="left:1801.2px;top:771px;width:210px;height:59px;background:#29292b;"></div>
<div style="left:1801.2px;top:832px;width:210px;height:23px;background:#29292b;"></div>
<div style="left:1807.7px;top:260.3px;width:45px;height:16px;background:#382828;"></div>
<div class="t" style="left:1807.7px;top:260.8px;width:45px;height:16px;line-height:16px;color:#c85050;font-size:10px;font-weight:700;text-align:center;">All</div>
<div style="left:1807.7px;top:277.4px;width:45px;height:16px;background:#382828;"></div>
<div class="t" style="left:1807.7px;top:277.9px;width:45px;height:16px;line-height:16px;color:#c85050;font-size:10.5px;font-weight:700;text-align:center;">?</div>
<div style="left:1807.7px;top:294.6px;width:45px;height:16px;background:#382828;"></div>
<div class="t" style="left:1807.7px;top:295.1px;width:45px;height:16px;line-height:16px;color:#c85050;font-size:10.5px;font-weight:700;text-align:center;">4</div>
<div style="left:1807.7px;top:311.8px;width:45px;height:16px;background:#382828;"></div>
<div class="t" style="left:1807.7px;top:312.3px;width:45px;height:16px;line-height:16px;color:#c85050;font-size:10.5px;font-weight:700;text-align:center;">3</div>
<div style="left:1807.7px;top:329px;width:45px;height:16px;background:#382828;"></div>
<div class="t" style="left:1807.7px;top:329.5px;width:45px;height:16px;line-height:16px;color:#c85050;font-size:10.5px;font-weight:700;text-align:center;">2</div>
<div style="left:1807.7px;top:346.2px;width:45px;height:16px;background:#dc7070;"></div>
<div class="t" style="left:1807.7px;top:346.7px;width:45px;height:16px;line-height:16px;color:#732f2f;font-size:10.5px;font-weight:700;text-align:center;">1</div>
<div style="left:1806.9px;top:371.3px;width:46.8px;height:18.2px;background:#401414;"></div>
<div style="left:1829.7px;top:372px;width:1px;height:3px;background:rgba(255,255,255,0.12);"></div>
<div style="left:1829.7px;top:386.5px;width:1px;height:3px;background:rgba(255,255,255,0.12);"></div>
<div class="t" style="left:1806.7px;top:372.8px;width:46.5px;height:17.5px;line-height:17.5px;color:#dde8ea;font-size:12px;font-weight:700;text-align:center;">0</div>
<div style="left:1807.7px;top:397px;width:45.5px;height:16px;background:#f06262;"></div>
<svg style="left:1822.9px;top:397.6px;color:#3a0c0c;" width="15" height="14"><use href="#scl"/></svg>
<div style="left:1807.7px;top:421px;width:45.5px;height:16px;background:#f06262;"></div>
<svg style="left:1823.7px;top:422px;color:#3a0c0c;" width="13.5" height="13.5"><use href="#pwr"/></svg>
<div style="left:1807.2px;top:445.5px;width:46px;height:16.2px;background:#401414;"></div>
<svg style="left:1822.2px;top:447px;color:#a03c3c;" width="16" height="14"><use href="#slur"/></svg>
<div style="left:1807.7px;top:469.4px;width:45.6px;height:49px;background:#382828;"></div>
<div style="left:1807.7px;top:480.5px;width:45.6px;height:1px;background:rgba(0,0,0,0.16);"></div>
<div style="left:1807.7px;top:509.5px;width:45.6px;height:1px;background:rgba(0,0,0,0.16);"></div>
<div style="left:1807.7px;top:490.3px;width:45.6px;height:11px;background:rgba(0,0,0,0.35);"></div>
<div style="left:1807.7px;top:491.3px;width:45.6px;height:8.7px;background:#e07070;"></div>
<div style="left:1807.6999999999998px;top:541px;width:45.7px;height:44.2px;border-radius:3px 3px 0 0;background:#b04444"></div>
<div style="left:1807.6999999999998px;top:617.8px;width:45.7px;height:28.2px;border-radius:3px 3px 0 0;background:#b04444"></div>
<div style="left:1807.6999999999998px;top:651.7px;width:45.7px;height:55.5px;border-radius:3px 3px 0 0;background:#b04444"></div>
<div style="left:1807.7px;top:747px;width:45.6px;height:1.2px;background:#5e1c1c;"></div>
<div style="left:1806.1999999999998px;top:751.7px;width:47px;height:15.5px;background:#5e1c1c;border:1px solid #141414"></div>
<div style="left:1847.6999999999998px;top:761.2px;width:0;height:0;border-left:5px solid transparent;border-bottom:5px solid #141414"></div>
<svg style="left:1822.7px;top:754.2px;color:#f07070;" width="15.5" height="10.5"><use href="#arr"/></svg>
<div style="left:1807.7px;top:828.5px;width:45.6px;height:1.5px;background:#5e1c1c;"></div>
<div style="left:1807.2px;top:835px;width:46.5px;height:17px;background:#4a1616;"></div>
<svg style="left:1824.7px;top:837px;color:#a03c3c;" width="12" height="14"><use href="#lock"/></svg>
<div style="left:1858.35px;top:260.3px;width:45px;height:16px;background:#382828;"></div>
<div class="t" style="left:1858.35px;top:260.8px;width:45px;height:16px;line-height:16px;color:#c85050;font-size:10px;font-weight:700;text-align:center;">All</div>
<div style="left:1858.35px;top:277.4px;width:45px;height:16px;background:#382828;"></div>
<div class="t" style="left:1858.35px;top:277.9px;width:45px;height:16px;line-height:16px;color:#c85050;font-size:10.5px;font-weight:700;text-align:center;">?</div>
<div style="left:1858.35px;top:294.6px;width:45px;height:16px;background:#382828;"></div>
<div class="t" style="left:1858.35px;top:295.1px;width:45px;height:16px;line-height:16px;color:#c85050;font-size:10.5px;font-weight:700;text-align:center;">4</div>
<div style="left:1858.35px;top:311.8px;width:45px;height:16px;background:#382828;"></div>
<div class="t" style="left:1858.35px;top:312.3px;width:45px;height:16px;line-height:16px;color:#c85050;font-size:10.5px;font-weight:700;text-align:center;">3</div>
<div style="left:1858.35px;top:329px;width:45px;height:16px;background:#dc7070;"></div>
<div class="t" style="left:1858.35px;top:329.5px;width:45px;height:16px;line-height:16px;color:#732f2f;font-size:10.5px;font-weight:700;text-align:center;">2</div>
<div style="left:1858.35px;top:346.2px;width:45px;height:16px;background:#382828;"></div>
<div class="t" style="left:1858.35px;top:346.7px;width:45px;height:16px;line-height:16px;color:#c85050;font-size:10.5px;font-weight:700;text-align:center;">1</div>
<div style="left:1857.55px;top:371.3px;width:46.8px;height:18.2px;background:#401414;"></div>
<div style="left:1880.35px;top:372px;width:1px;height:3px;background:rgba(255,255,255,0.12);"></div>
<div style="left:1880.35px;top:386.5px;width:1px;height:3px;background:rgba(255,255,255,0.12);"></div>
<div class="t" style="left:1857.35px;top:372.8px;width:46.5px;height:17.5px;line-height:17.5px;color:#dde8ea;font-size:12px;font-weight:700;text-align:center;">0</div>
<div style="left:1858.35px;top:397px;width:45.5px;height:16px;background:#f06262;"></div>
<svg style="left:1873.55px;top:397.6px;color:#3a0c0c;" width="15" height="14"><use href="#scl"/></svg>
<div style="left:1858.35px;top:421px;width:45.5px;height:16px;background:#f06262;"></div>
<svg style="left:1874.35px;top:422px;color:#3a0c0c;" width="13.5" height="13.5"><use href="#pwr"/></svg>
<div style="left:1857.85px;top:445.5px;width:46px;height:16.2px;background:#401414;"></div>
<svg style="left:1872.85px;top:447px;color:#a03c3c;" width="16" height="14"><use href="#slur"/></svg>
<div style="left:1858.35px;top:469.4px;width:45.6px;height:49px;background:#382828;"></div>
<div style="left:1858.35px;top:480.5px;width:45.6px;height:1px;background:rgba(0,0,0,0.16);"></div>
<div style="left:1858.35px;top:509.5px;width:45.6px;height:1px;background:rgba(0,0,0,0.16);"></div>
<div style="left:1858.35px;top:490.3px;width:45.6px;height:11px;background:rgba(0,0,0,0.35);"></div>
<div style="left:1858.35px;top:491.3px;width:45.6px;height:8.7px;background:#e07070;"></div>
<div style="left:1858.35px;top:541px;width:45.7px;height:44.2px;border-radius:3px 3px 0 0;background:#b04444"></div>
<div style="left:1858.35px;top:617.8px;width:45.7px;height:28.2px;border-radius:3px 3px 0 0;background:#b04444"></div>
<div style="left:1858.35px;top:651.7px;width:45.7px;height:55.5px;border-radius:3px 3px 0 0;background:#b04444"></div>
<div style="left:1858.35px;top:747px;width:45.6px;height:1.2px;background:#5e1c1c;"></div>
<div style="left:1856.85px;top:751.7px;width:47px;height:15.5px;background:#5e1c1c;border:1px solid #141414"></div>
<div style="left:1898.35px;top:761.2px;width:0;height:0;border-left:5px solid transparent;border-bottom:5px solid #141414"></div>
<svg style="left:1873.35px;top:754.2px;color:#f07070;" width="15.5" height="10.5"><use href="#arr"/></svg>
<div style="left:1858.35px;top:828.5px;width:45.6px;height:1.5px;background:#5e1c1c;"></div>
<div style="left:1857.85px;top:835px;width:46.5px;height:17px;background:#4a1616;"></div>
<svg style="left:1875.35px;top:837px;color:#a03c3c;" width="12" height="14"><use href="#lock"/></svg>
<div style="left:1909px;top:260.3px;width:45px;height:16px;background:#382828;"></div>
<div class="t" style="left:1909px;top:260.8px;width:45px;height:16px;line-height:16px;color:#c85050;font-size:10px;font-weight:700;text-align:center;">All</div>
<div style="left:1909px;top:277.4px;width:45px;height:16px;background:#382828;"></div>
<div class="t" style="left:1909px;top:277.9px;width:45px;height:16px;line-height:16px;color:#c85050;font-size:10.5px;font-weight:700;text-align:center;">?</div>
<div style="left:1909px;top:294.6px;width:45px;height:16px;background:#382828;"></div>
<div class="t" style="left:1909px;top:295.1px;width:45px;height:16px;line-height:16px;color:#c85050;font-size:10.5px;font-weight:700;text-align:center;">4</div>
<div style="left:1909px;top:311.8px;width:45px;height:16px;background:#dc7070;"></div>
<div class="t" style="left:1909px;top:312.3px;width:45px;height:16px;line-height:16px;color:#732f2f;font-size:10.5px;font-weight:700;text-align:center;">3</div>
<div style="left:1909px;top:329px;width:45px;height:16px;background:#382828;"></div>
<div class="t" style="left:1909px;top:329.5px;width:45px;height:16px;line-height:16px;color:#c85050;font-size:10.5px;font-weight:700;text-align:center;">2</div>
<div style="left:1909px;top:346.2px;width:45px;height:16px;background:#382828;"></div>
<div class="t" style="left:1909px;top:346.7px;width:45px;height:16px;line-height:16px;color:#c85050;font-size:10.5px;font-weight:700;text-align:center;">1</div>
<div style="left:1908.2px;top:371.3px;width:46.8px;height:18.2px;background:#401414;"></div>
<div style="left:1931px;top:372px;width:1px;height:3px;background:rgba(255,255,255,0.12);"></div>
<div style="left:1931px;top:386.5px;width:1px;height:3px;background:rgba(255,255,255,0.12);"></div>
<div class="t" style="left:1908px;top:372.8px;width:46.5px;height:17.5px;line-height:17.5px;color:#dde8ea;font-size:12px;font-weight:700;text-align:center;">0</div>
<div style="left:1909px;top:397px;width:45.5px;height:16px;background:#f06262;"></div>
<svg style="left:1924.2px;top:397.6px;color:#3a0c0c;" width="15" height="14"><use href="#scl"/></svg>
<div style="left:1909px;top:421px;width:45.5px;height:16px;background:#f06262;"></div>
<svg style="left:1925px;top:422px;color:#3a0c0c;" width="13.5" height="13.5"><use href="#pwr"/></svg>
<div style="left:1908.5px;top:445.5px;width:46px;height:16.2px;background:#401414;"></div>
<svg style="left:1923.5px;top:447px;color:#a03c3c;" width="16" height="14"><use href="#slur"/></svg>
<div style="left:1909px;top:469.4px;width:45.6px;height:49px;background:#382828;"></div>
<div style="left:1909px;top:480.5px;width:45.6px;height:1px;background:rgba(0,0,0,0.16);"></div>
<div style="left:1909px;top:509.5px;width:45.6px;height:1px;background:rgba(0,0,0,0.16);"></div>
<div style="left:1909px;top:490.3px;width:45.6px;height:11px;background:rgba(0,0,0,0.35);"></div>
<div style="left:1909px;top:491.3px;width:45.6px;height:8.7px;background:#e07070;"></div>
<div style="left:1909.0px;top:541px;width:45.7px;height:44.2px;border-radius:3px 3px 0 0;background:#b04444"></div>
<div style="left:1909.0px;top:617.8px;width:45.7px;height:28.2px;border-radius:3px 3px 0 0;background:#b04444"></div>
<div style="left:1909.0px;top:651.7px;width:45.7px;height:55.5px;border-radius:3px 3px 0 0;background:#b04444"></div>
<div style="left:1909px;top:747px;width:45.6px;height:1.2px;background:#5e1c1c;"></div>
<div style="left:1907.5px;top:751.7px;width:47px;height:15.5px;background:#5e1c1c;border:1px solid #141414"></div>
<div style="left:1949.0px;top:761.2px;width:0;height:0;border-left:5px solid transparent;border-bottom:5px solid #141414"></div>
<svg style="left:1924px;top:754.2px;color:#f07070;" width="15.5" height="10.5"><use href="#arr"/></svg>
<div style="left:1909px;top:828.5px;width:45.6px;height:1.5px;background:#5e1c1c;"></div>
<div style="left:1908.5px;top:835px;width:46.5px;height:17px;background:#4a1616;"></div>
<svg style="left:1926px;top:837px;color:#a03c3c;" width="12" height="14"><use href="#lock"/></svg>
<div style="left:1959.65px;top:260.3px;width:45px;height:16px;background:#382828;"></div>
<div class="t" style="left:1959.65px;top:260.8px;width:45px;height:16px;line-height:16px;color:#c85050;font-size:10px;font-weight:700;text-align:center;">All</div>
<div style="left:1959.65px;top:277.4px;width:45px;height:16px;background:#382828;"></div>
<div class="t" style="left:1959.65px;top:277.9px;width:45px;height:16px;line-height:16px;color:#c85050;font-size:10.5px;font-weight:700;text-align:center;">?</div>
<div style="left:1959.65px;top:294.6px;width:45px;height:16px;background:#dc7070;"></div>
<div class="t" style="left:1959.65px;top:295.1px;width:45px;height:16px;line-height:16px;color:#732f2f;font-size:10.5px;font-weight:700;text-align:center;">4</div>
<div style="left:1959.65px;top:311.8px;width:45px;height:16px;background:#382828;"></div>
<div class="t" style="left:1959.65px;top:312.3px;width:45px;height:16px;line-height:16px;color:#c85050;font-size:10.5px;font-weight:700;text-align:center;">3</div>
<div style="left:1959.65px;top:329px;width:45px;height:16px;background:#382828;"></div>
<div class="t" style="left:1959.65px;top:329.5px;width:45px;height:16px;line-height:16px;color:#c85050;font-size:10.5px;font-weight:700;text-align:center;">2</div>
<div style="left:1959.65px;top:346.2px;width:45px;height:16px;background:#382828;"></div>
<div class="t" style="left:1959.65px;top:346.7px;width:45px;height:16px;line-height:16px;color:#c85050;font-size:10.5px;font-weight:700;text-align:center;">1</div>
<div style="left:1958.85px;top:371.3px;width:46.8px;height:18.2px;background:#401414;"></div>
<div style="left:1981.65px;top:372px;width:1px;height:3px;background:rgba(255,255,255,0.12);"></div>
<div style="left:1981.65px;top:386.5px;width:1px;height:3px;background:rgba(255,255,255,0.12);"></div>
<div class="t" style="left:1958.65px;top:372.8px;width:46.5px;height:17.5px;line-height:17.5px;color:#dde8ea;font-size:12px;font-weight:700;text-align:center;">0</div>
<div style="left:1959.65px;top:397px;width:45.5px;height:16px;background:#f06262;"></div>
<svg style="left:1974.85px;top:397.6px;color:#3a0c0c;" width="15" height="14"><use href="#scl"/></svg>
<div style="left:1959.65px;top:421px;width:45.5px;height:16px;background:#f06262;"></div>
<svg style="left:1975.65px;top:422px;color:#3a0c0c;" width="13.5" height="13.5"><use href="#pwr"/></svg>
<div style="left:1959.15px;top:445.5px;width:46px;height:16.2px;background:#401414;"></div>
<svg style="left:1974.15px;top:447px;color:#a03c3c;" width="16" height="14"><use href="#slur"/></svg>
<div style="left:1959.65px;top:469.4px;width:45.6px;height:49px;background:#382828;"></div>
<div style="left:1959.65px;top:480.5px;width:45.6px;height:1px;background:rgba(0,0,0,0.16);"></div>
<div style="left:1959.65px;top:509.5px;width:45.6px;height:1px;background:rgba(0,0,0,0.16);"></div>
<div style="left:1959.65px;top:490.3px;width:45.6px;height:11px;background:rgba(0,0,0,0.35);"></div>
<div style="left:1959.65px;top:491.3px;width:45.6px;height:8.7px;background:#e07070;"></div>
<div style="left:1959.65px;top:541px;width:45.7px;height:44.2px;border-radius:3px 3px 0 0;background:#b04444"></div>
<div style="left:1959.65px;top:617.8px;width:45.7px;height:28.2px;border-radius:3px 3px 0 0;background:#b04444"></div>
<div style="left:1959.65px;top:651.7px;width:45.7px;height:55.5px;border-radius:3px 3px 0 0;background:#b04444"></div>
<div style="left:1959.65px;top:747px;width:45.6px;height:1.2px;background:#5e1c1c;"></div>
<div style="left:1958.15px;top:751.7px;width:47px;height:15.5px;background:#5e1c1c;border:1px solid #141414"></div>
<div style="left:1999.65px;top:761.2px;width:0;height:0;border-left:5px solid transparent;border-bottom:5px solid #141414"></div>
<svg style="left:1974.65px;top:754.2px;color:#f07070;" width="15.5" height="10.5"><use href="#arr"/></svg>
<div style="left:1959.65px;top:828.5px;width:45.6px;height:1.5px;background:#5e1c1c;"></div>
<div style="left:1959.15px;top:835px;width:46.5px;height:17px;background:#4a1616;"></div>
<svg style="left:1976.65px;top:837px;color:#a03c3c;" width="12" height="14"><use href="#lock"/></svg>
<div style="left:318px;top:858px;width:1602px;height:11px;border-radius:6px 0 0 6px;background:#5a5a5a"></div>
<div style="left:322.5px;top:860.5px;width:6px;height:6px;border-radius:50%;background:#222"></div>
<div style="left:1150px;top:859px;width:1.5px;height:8px;background:#2a2a2a;"></div>
<div style="left:1166px;top:859px;width:1.5px;height:8px;background:#2a2a2a;"></div>
<div style="left:1182px;top:859px;width:1.5px;height:8px;background:#2a2a2a;"></div>
<div style="left:241px;top:872px;width:1679px;height:180px;background:#232323;"></div>
<div style="left:241px;top:875px;width:29px;height:176px;background:#262626;"></div>
<div style="left:246px;top:879px;width:19px;height:19px;background:#333333;"></div>
<svg style="left:250px;top:881px;color:#9a9a9a;" width="12" height="14"><use href="#lock"/></svg>
<div class="t" style="left:206px;top:952px;width:100px;height:20px;line-height:20px;color:#c8c8c8;font-size:13.5px;font-weight:700;text-align:center;transform:rotate(-90deg)">MIDI FX</div>
<div style="left:270px;top:875px;width:1650px;height:176px;background:#0c0c0c;"></div>
<div class="t" style="left:274px;top:945px;width:16px;height:20px;line-height:20px;color:#5a5a5a;font-size:20px;font-weight:700;text-align:center;">+</div>
<div class="t" style="left:404px;top:945px;width:16px;height:20px;line-height:20px;color:#5a5a5a;font-size:20px;font-weight:700;text-align:center;">+</div>
<div class="t" style="left:535px;top:945px;width:16px;height:20px;line-height:20px;color:#5a5a5a;font-size:20px;font-weight:700;text-align:center;">+</div>
<div class="t" style="left:799.5px;top:945px;width:16px;height:20px;line-height:20px;color:#5a5a5a;font-size:20px;font-weight:700;text-align:center;">+</div>
<div style="left:293px;top:881px;width:25.3px;height:147px;background:#2a2a2a;"></div>
<div style="left:318.3px;top:881px;width:83.7px;height:147px;background:#2e2e2e;"></div>
<svg style="left:297.5px;top:886px;color:#f2be4a;" width="17" height="17"><use href="#pwr"/></svg>
<div class="t" style="left:256px;top:955px;width:100px;height:20px;line-height:20px;color:#d2d2d2;font-size:13.5px;font-weight:700;text-align:center;transform:rotate(-90deg)">OCTAVE</div>
<div style="left:330px;top:892px;width:61.5px;height:125.5px;background:#4a3b1e;"></div>
<div class="t" style="left:330px;top:892px;width:61.5px;height:25px;line-height:25px;color:#c8a050;font-size:13px;font-weight:400;text-align:center;">+2</div>
<div style="left:330px;top:917.1px;width:61.5px;height:1px;background:#3a2e16;"></div>
<div class="t" style="left:330px;top:917.1px;width:61.5px;height:25px;line-height:25px;color:#c8a050;font-size:13px;font-weight:400;text-align:center;">+1</div>
<div style="left:330px;top:942.2px;width:61.5px;height:1px;background:#3a2e16;"></div>
<div style="left:330px;top:942.3px;width:61.5px;height:24.7px;background:#f5b94a;"></div>
<div class="t" style="left:330px;top:942.3px;width:61.5px;height:24.7px;line-height:24.7px;color:#4a3810;font-size:13.5px;font-weight:400;text-align:center;">0</div>
<div style="left:330px;top:967.3px;width:61.5px;height:1px;background:#3a2e16;"></div>
<div class="t" style="left:330px;top:967.3px;width:61.5px;height:25px;line-height:25px;color:#c8a050;font-size:13px;font-weight:400;text-align:center;">&minus;1</div>
<div style="left:330px;top:992.4px;width:61.5px;height:1px;background:#3a2e16;"></div>
<div class="t" style="left:330px;top:992.4px;width:61.5px;height:25px;line-height:25px;color:#c8a050;font-size:13px;font-weight:400;text-align:center;">&minus;2</div>
<div style="left:424px;top:881px;width:25.3px;height:147px;background:#2a2a2a;"></div>
<div style="left:449.3px;top:881px;width:82.7px;height:147px;background:#2e2e2e;"></div>
<svg style="left:428.5px;top:886px;color:#f2be4a;" width="17" height="17"><use href="#pwr"/></svg>
<div class="t" style="left:387px;top:955px;width:100px;height:20px;line-height:20px;color:#d2d2d2;font-size:13.5px;font-weight:700;text-align:center;transform:rotate(-90deg)">TRANSP</div>
<svg style="left:461px;top:893px" width="60" height="60"><path d="M 9.2 50.8 A 28 28 0 1 1 50.8 50.8" fill="none" stroke="#3c3c3c" stroke-width="4"/><circle cx="30" cy="30" r="21.5" fill="#0c0c0c"/><circle cx="30" cy="30" r="18.5" fill="#4a4a4a"/><rect x="27.6" y="13" width="4.8" height="14" rx="2.4" fill="#f2be4a"/></svg>
<div class="t" style="left:471px;top:948px;width:40px;height:18px;line-height:18px;color:#f2be4a;font-size:13px;font-weight:700;text-align:center;">TP</div>
<div class="t" style="left:471px;top:973px;width:40px;height:18px;line-height:18px;color:#f2be4a;font-size:13px;font-weight:700;text-align:center;">0</div>
<div style="left:554px;top:881px;width:25.3px;height:147px;background:#2a2a2a;"></div>
<div style="left:579.3px;top:881px;width:189px;height:147px;background:#2e2e2e;"></div>
<svg style="left:558.5px;top:886px;color:#f2be4a;" width="17" height="17"><use href="#pwr"/></svg>
<div class="t" style="left:517px;top:955px;width:100px;height:20px;line-height:20px;color:#d2d2d2;font-size:13.5px;font-weight:700;text-align:center;transform:rotate(-90deg)">SCALE</div>
<div style="left:768.3px;top:881px;width:28.2px;height:147px;background:#282828;"></div>
<div style="left:608.8px;top:891px;width:18.8px;height:29.6px;border-radius:3px;background:#f5b94a"></div>
<div class="t" style="left:606.8px;top:891px;width:22.8px;height:29.6px;line-height:29.6px;color:#3a2a0e;font-size:10px;font-weight:700;text-align:center;letter-spacing:-0.5px">C#</div>
<div style="left:632px;top:891px;width:18.8px;height:29.6px;border-radius:3px;background:#f5b94a"></div>
<div class="t" style="left:630px;top:891px;width:22.8px;height:29.6px;line-height:29.6px;color:#3a2a0e;font-size:10px;font-weight:700;text-align:center;letter-spacing:-0.5px">D#</div>
<div style="left:679px;top:891px;width:18.8px;height:29.6px;border-radius:3px;background:#f5b94a"></div>
<div class="t" style="left:677px;top:891px;width:22.8px;height:29.6px;line-height:29.6px;color:#3a2a0e;font-size:10px;font-weight:700;text-align:center;letter-spacing:-0.5px">F#</div>
<div style="left:702.6px;top:891px;width:18.8px;height:29.6px;border-radius:3px;background:#f5b94a"></div>
<div class="t" style="left:700.6px;top:891px;width:22.8px;height:29.6px;line-height:29.6px;color:#3a2a0e;font-size:10px;font-weight:700;text-align:center;letter-spacing:-0.5px">G#</div>
<div style="left:726px;top:891px;width:18.8px;height:29.6px;border-radius:3px;background:#f5b94a"></div>
<div class="t" style="left:724px;top:891px;width:22.8px;height:29.6px;line-height:29.6px;color:#3a2a0e;font-size:10px;font-weight:700;text-align:center;letter-spacing:-0.5px">A..</div>
<div style="left:598.0px;top:927.6px;width:18.3px;height:31.8px;border-radius:3px;background:#dddddd"></div>
<div class="t" style="left:598px;top:927.6px;width:18.3px;height:31.8px;line-height:31.8px;color:#2a2210;font-size:11px;font-weight:700;text-align:center;">C</div>
<div style="left:621.35px;top:927.6px;width:18.3px;height:31.8px;border-radius:3px;background:#f5b94a"></div>
<div class="t" style="left:621.35px;top:927.6px;width:18.3px;height:31.8px;line-height:31.8px;color:#2a2210;font-size:11px;font-weight:700;text-align:center;">D</div>
<div style="left:644.7px;top:927.6px;width:18.3px;height:31.8px;border-radius:3px;background:#f5b94a"></div>
<div class="t" style="left:644.7px;top:927.6px;width:18.3px;height:31.8px;line-height:31.8px;color:#2a2210;font-size:11px;font-weight:700;text-align:center;">E</div>
<div style="left:668.05px;top:927.6px;width:18.3px;height:31.8px;border-radius:3px;background:#f5b94a"></div>
<div class="t" style="left:668.05px;top:927.6px;width:18.3px;height:31.8px;line-height:31.8px;color:#2a2210;font-size:11px;font-weight:700;text-align:center;">F</div>
<div style="left:691.4px;top:927.6px;width:18.3px;height:31.8px;border-radius:3px;background:#f5b94a"></div>
<div class="t" style="left:691.4px;top:927.6px;width:18.3px;height:31.8px;line-height:31.8px;color:#2a2210;font-size:11px;font-weight:700;text-align:center;">G</div>
<div style="left:714.75px;top:927.6px;width:18.3px;height:31.8px;border-radius:3px;background:#f5b94a"></div>
<div class="t" style="left:714.75px;top:927.6px;width:18.3px;height:31.8px;line-height:31.8px;color:#2a2210;font-size:11px;font-weight:700;text-align:center;">A</div>
<div style="left:738.1px;top:927.6px;width:18.3px;height:31.8px;border-radius:3px;background:#f5b94a"></div>
<div class="t" style="left:738.1px;top:927.6px;width:18.3px;height:31.8px;line-height:31.8px;color:#2a2210;font-size:11px;font-weight:700;text-align:center;">B</div>
<div style="left:594.3px;top:975px;width:44.5px;height:22px;background:#3a3a3a;"></div>
<div class="t" style="left:594.3px;top:975px;width:30px;height:22px;line-height:22px;color:#d0d0d0;font-size:14px;font-weight:700;text-align:center;">C</div>
<svg style="left:628px;top:980px;color:#9a9a9a;" width="8" height="13"><use href="#updn"/></svg>
<div style="left:640px;top:975px;width:78px;height:22px;background:#3a3a3a;"></div>
<div class="t" style="left:640px;top:975px;width:78px;height:22px;line-height:22px;color:#cccccc;font-size:12px;font-weight:400;text-align:center;">Root Shift</div>
<div style="left:719px;top:975px;width:36px;height:22px;background:#3a3a3a;"></div>
<svg style="left:729px;top:981px;color:#cccccc;" width="15" height="11"><use href="#ham"/></svg>
<div style="left:594.3px;top:999px;width:123.5px;height:20.5px;background:#3a3a3a;"></div>
<div class="t" style="left:594.3px;top:999px;width:106px;height:20.5px;line-height:20.5px;color:#cccccc;font-size:11.5px;font-weight:400;text-align:center;">Chromatic</div>
<svg style="left:704px;top:1002px;color:#bbbbbb;" width="8" height="14"><use href="#updn2"/></svg>
<div style="left:719px;top:999px;width:17.5px;height:20.5px;background:#3a3a3a;"></div>
<svg style="left:723px;top:1003px;color:#cccccc;" width="10" height="13"><use href="#chevL"/></svg>
<div style="left:737.5px;top:999px;width:17.5px;height:20.5px;background:#3a3a3a;"></div>
<svg style="left:741px;top:1003px;color:#cccccc;" width="10" height="13"><use href="#chevR"/></svg>
<div style="left:775.7px;top:916.5px;width:14px;height:14px;background:#dddddd;"></div>
<div class="t" style="left:775.7px;top:916.5px;width:14px;height:14px;line-height:14px;color:#222222;font-size:11px;font-weight:700;text-align:center;">A</div>
<div class="t" style="left:775.7px;top:937px;width:14px;height:14px;line-height:14px;color:#6c6c6c;font-size:11px;font-weight:400;text-align:center;">B</div>
<div class="t" style="left:775.7px;top:956.5px;width:14px;height:14px;line-height:14px;color:#6c6c6c;font-size:11px;font-weight:400;text-align:center;">C</div>
<div class="t" style="left:775.7px;top:976px;width:14px;height:14px;line-height:14px;color:#6c6c6c;font-size:11px;font-weight:400;text-align:center;">D</div>
<div style="left:273px;top:1037.5px;width:1647px;height:10px;border-radius:5px 0 0 5px;background:#565656"></div>
<div style="left:279.5px;top:1039.5px;width:5.5px;height:5.5px;border-radius:50%;background:#222"></div>
<div style="left:1128px;top:1038.5px;width:1.5px;height:8px;background:#2a2a2a;"></div>
<div style="left:1144px;top:1038.5px;width:1.5px;height:8px;background:#2a2a2a;"></div>
<div style="left:1160px;top:1038.5px;width:1.5px;height:8px;background:#2a2a2a;"></div>
<div style="left:241px;top:1052px;width:1679px;height:25px;background:#232323;"></div>
<div class="t" style="left:1612px;top:1053px;width:80px;height:22px;line-height:22px;color:#9a9a9a;font-size:12.5px;font-weight:400;text-align:left;">License:</div>
<div class="t" style="left:1802px;top:1053px;width:90px;height:22px;line-height:22px;color:#dddddd;font-size:12.5px;font-weight:700;text-align:left;">Registered</div>
<div style="left:241px;top:1051px;width:29px;height:26px;background:#262626;"></div>
<div style="left:0px;top:1077px;width:1920px;height:1px;background:#4e5358;"></div>
<div style="left:0px;top:1078px;width:1920px;height:2px;background:#131416;"></div>
<div style="left:246px;top:1056px;width:16.5px;height:16.5px;border-radius:50%;background:#cfcfcf"></div>
<div class="t" style="left:246px;top:1056.5px;width:16.5px;height:16.5px;line-height:16.5px;color:#2e2e2e;font-size:14px;font-weight:700;text-align:center;font-family:"Liberation Serif",serif;font-style:italic">i</div></body></html>
